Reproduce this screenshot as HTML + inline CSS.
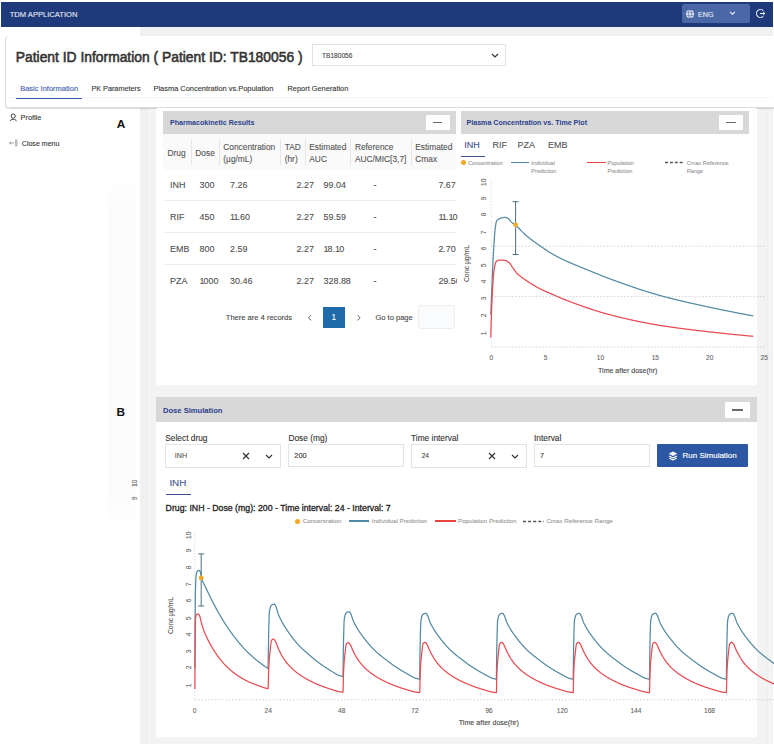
<!DOCTYPE html><html><head><meta charset="utf-8"><style>
html,body{margin:0;padding:0;width:774px;height:745px;overflow:hidden;background:#fff;font-family:"Liberation Sans",sans-serif;position:relative}
</style></head><body>
<div style="position:absolute;left:139.8px;top:27px;width:633.0px;height:716.5px;background:#f1f1f1"></div>
<div style="position:absolute;left:145.8px;top:36px;width:0.8999999999999773px;height:707.5px;background:#ebebeb"></div>
<div style="position:absolute;left:146.7px;top:36px;width:626.0999999999999px;height:707.5px;background:#f3f3f3"></div>
<div style="position:absolute;left:766.5px;top:108px;width:1.7999999999999545px;height:635.5px;background:#efefef"></div>
<div style="position:absolute;left:108px;top:178px;width:28px;height:354px;background:linear-gradient(180deg,rgba(0,0,0,0) 0%,rgba(0,0,0,0.014) 8%,rgba(0,0,0,0.014) 90%,rgba(0,0,0,0) 100%)"></div>
<div style="position:absolute;left:1px;top:2px;width:771.6px;height:25px;background:#1f3a7a"></div>
<div style="position:absolute;left:9.70px;top:11.18px;font-size:7.6px;line-height:7.6px;color:#e8ecf5;font-weight:400;white-space:nowrap;;-webkit-text-stroke:0.1px #e8ecf5">TDM APPLICATION</div>
<div style="position:absolute;left:682px;top:4.2px;width:68px;height:18.8px;background:#4a68a6;border-radius:2.5px"></div>
<svg style="position:absolute;left:684.8px;top:8.8px" width="10" height="10" viewBox="0 0 10 10"><circle cx="5" cy="5" r="4.1" fill="#e4e9f3"/><ellipse cx="5" cy="5" rx="1.7" ry="4" fill="none" stroke="#5d79b0" stroke-width="0.7"/><line x1="1" y1="3.6" x2="9" y2="3.6" stroke="#5d79b0" stroke-width="0.6"/><line x1="1" y1="6.4" x2="9" y2="6.4" stroke="#5d79b0" stroke-width="0.6"/></svg>
<div style="position:absolute;left:698.00px;top:11.38px;font-size:7.2px;line-height:7.2px;color:#e8ecf5;font-weight:400;white-space:nowrap;;-webkit-text-stroke:0.1px #e8ecf5">ENG</div>
<svg style="position:absolute;left:728.5px;top:11px" width="7" height="4" viewBox="0 0 7 4"><polyline points="1,0.8 3.5,3.2 6,0.8" fill="none" stroke="#e8ecf5" stroke-width="1.1"/></svg>
<svg style="position:absolute;left:755.2px;top:7.8px" width="11" height="11" viewBox="0 0 11 11"><path d="M8.3,2.6 A4,4 0 1 0 8.3,8.4" fill="none" stroke="#e8ecf5" stroke-width="1.1"/><line x1="5" y1="5.5" x2="9.8" y2="5.5" stroke="#e8ecf5" stroke-width="1.1"/><polyline points="8,3.8 9.8,5.5 8,7.2" fill="none" stroke="#e8ecf5" stroke-width="1"/></svg>
<div style="position:absolute;left:6px;top:35.5px;width:768px;height:72.3px;background:#fff;border-radius:4px 0 0 4px;box-shadow:-0.5px 0.3px 1px rgba(0,0,0,0.15)"></div>
<div style="position:absolute;left:9px;top:106.9px;width:765px;height:0.8999999999999915px;background:#dcdcdc"></div>
<div style="position:absolute;left:15.80px;top:50.55px;font-size:13.85px;line-height:13.85px;color:#333;font-weight:400;white-space:nowrap;-webkit-text-stroke:0.55px #333">Patient ID Information ( Patient ID: TB180056 )</div>
<div style="position:absolute;left:312px;top:44px;width:194px;height:22px;border:1px solid #e3e3e3;background:#fff;box-sizing:border-box"></div>
<div style="position:absolute;left:322.00px;top:52.68px;font-size:6.6px;line-height:6.6px;color:#444;font-weight:400;white-space:nowrap;;-webkit-text-stroke:0.1px #444">TB180056</div>
<svg style="position:absolute;left:491px;top:53px" width="8" height="5" viewBox="0 0 8 5"><polyline points="1,1 4,4 7,1" fill="none" stroke="#333" stroke-width="1.2"/></svg>
<div style="position:absolute;left:6px;top:97.4px;width:766.6px;height:0.7999999999999972px;background:#f6f6f6"></div>
<div style="position:absolute;left:20.20px;top:85.23px;font-size:7.5px;line-height:7.5px;color:#3d5ba8;font-weight:400;white-space:nowrap;;-webkit-text-stroke:0.1px #3d5ba8">Basic Information</div>
<div style="position:absolute;left:91.40px;top:85.36px;font-size:7.25px;line-height:7.25px;color:#333;font-weight:400;white-space:nowrap;;-webkit-text-stroke:0.1px #333">PK Parameters</div>
<div style="position:absolute;left:153.50px;top:85.26px;font-size:7.45px;line-height:7.45px;color:#333;font-weight:400;white-space:nowrap;;-webkit-text-stroke:0.1px #333">Plasma Concentration vs.Population</div>
<div style="position:absolute;left:287.50px;top:85.28px;font-size:7.4px;line-height:7.4px;color:#333;font-weight:400;white-space:nowrap;;-webkit-text-stroke:0.1px #333">Report Generation</div>
<div style="position:absolute;left:16px;top:97.5px;width:66px;height:1.5px;background:#3d5ba8"></div>
<svg style="position:absolute;left:9px;top:113px" width="9" height="9" viewBox="0 0 9 9"><circle cx="4.2" cy="3.1" r="2.1" fill="none" stroke="#3a3a3a" stroke-width="1"/><path d="M1.1,7.9 C1.4,5.6 7.0,5.6 7.3,7.9" fill="none" stroke="#3a3a3a" stroke-width="1" stroke-linecap="round"/></svg>
<div style="position:absolute;left:20.60px;top:114.33px;font-size:7.3px;line-height:7.3px;color:#333;font-weight:400;white-space:nowrap;;-webkit-text-stroke:0.1px #333">Profile</div>
<svg style="position:absolute;left:9px;top:139px" width="10" height="8" viewBox="0 0 10 8"><line x1="0.5" y1="4" x2="5" y2="4" stroke="#888" stroke-width="0.8"/><polyline points="2,2.5 0.5,4 2,5.5" fill="none" stroke="#888" stroke-width="0.8"/><rect x="6" y="0.5" width="2.5" height="7" fill="#bbb"/></svg>
<div style="position:absolute;left:21.80px;top:140.45px;font-size:7.05px;line-height:7.05px;color:#333;font-weight:400;white-space:nowrap;;-webkit-text-stroke:0.1px #333">Close menu</div>
<div style="position:absolute;left:116.80px;top:118.58px;font-size:11.8px;line-height:11.8px;color:#111;font-weight:700;white-space:nowrap;">A</div>
<div style="position:absolute;left:116.50px;top:406.58px;font-size:11.8px;line-height:11.8px;color:#111;font-weight:700;white-space:nowrap;">B</div>
<div style="position:absolute;left:135.40px;top:479.80px;font-size:6.4px;line-height:6.4px;color:#666;font-weight:400;white-space:nowrap;transform:translate(-50%,0) rotate(-90deg);-webkit-text-stroke:0.1px #666">10</div>
<div style="position:absolute;left:135.40px;top:495.00px;font-size:6.4px;line-height:6.4px;color:#666;font-weight:400;white-space:nowrap;transform:translate(-50%,0) rotate(-90deg);-webkit-text-stroke:0.1px #666">9</div>
<div style="position:absolute;left:155.8px;top:108px;width:601.2px;height:277px;background:#fff;border-radius:2px"></div>
<div style="position:absolute;left:163px;top:111px;width:293px;height:23px;background:#d8d8d8"></div>
<div style="position:absolute;left:170.00px;top:119.93px;font-size:7.1px;line-height:7.1px;color:#2b3f8c;font-weight:700;white-space:nowrap;">Pharmacokinetic Results</div>
<div style="position:absolute;left:426.4px;top:114.8px;width:23.600000000000023px;height:15.200000000000003px;background:#fff;border-radius:1px"></div>
<div style="position:absolute;left:433px;top:121.9px;width:8.5px;height:1.0999999999999943px;background:#6a6a6a"></div>
<div style="position:absolute;left:163px;top:134px;width:293px;height:35.5px;background:#fafafa"></div>
<div style="position:absolute;left:190.7px;top:139px;width:0.8000000000000114px;height:26px;background:#e6e6e6"></div>
<div style="position:absolute;left:218.6px;top:139px;width:0.8000000000000114px;height:26px;background:#e6e6e6"></div>
<div style="position:absolute;left:280px;top:139px;width:0.8000000000000114px;height:26px;background:#e6e6e6"></div>
<div style="position:absolute;left:304.7px;top:139px;width:0.8000000000000114px;height:26px;background:#e6e6e6"></div>
<div style="position:absolute;left:350.2px;top:139px;width:0.8000000000000114px;height:26px;background:#e6e6e6"></div>
<div style="position:absolute;left:410.7px;top:139px;width:0.8000000000000114px;height:26px;background:#e6e6e6"></div>
<div style="position:absolute;left:167.50px;top:149.30px;font-size:8.35px;line-height:8.35px;color:#555;font-weight:400;white-space:nowrap;;-webkit-text-stroke:0.1px #555">Drug</div>
<div style="position:absolute;left:195.30px;top:149.30px;font-size:8.35px;line-height:8.35px;color:#555;font-weight:400;white-space:nowrap;;-webkit-text-stroke:0.1px #555">Dose</div>
<div style="position:absolute;left:223.30px;top:143.30px;font-size:8.35px;line-height:8.35px;color:#555;font-weight:400;white-space:nowrap;;-webkit-text-stroke:0.1px #555">Concentration</div>
<div style="position:absolute;left:223.30px;top:155.30px;font-size:8.35px;line-height:8.35px;color:#555;font-weight:400;white-space:nowrap;;-webkit-text-stroke:0.1px #555">(µg/mL)</div>
<div style="position:absolute;left:284.70px;top:143.30px;font-size:8.35px;line-height:8.35px;color:#555;font-weight:400;white-space:nowrap;;-webkit-text-stroke:0.1px #555">TAD</div>
<div style="position:absolute;left:284.70px;top:155.30px;font-size:8.35px;line-height:8.35px;color:#555;font-weight:400;white-space:nowrap;;-webkit-text-stroke:0.1px #555">(hr)</div>
<div style="position:absolute;left:309.30px;top:143.30px;font-size:8.35px;line-height:8.35px;color:#555;font-weight:400;white-space:nowrap;;-webkit-text-stroke:0.1px #555">Estimated</div>
<div style="position:absolute;left:309.30px;top:155.30px;font-size:8.35px;line-height:8.35px;color:#555;font-weight:400;white-space:nowrap;;-webkit-text-stroke:0.1px #555">AUC</div>
<div style="position:absolute;left:354.90px;top:143.30px;font-size:8.35px;line-height:8.35px;color:#555;font-weight:400;white-space:nowrap;;-webkit-text-stroke:0.1px #555">Reference</div>
<div style="position:absolute;left:354.90px;top:155.30px;font-size:8.35px;line-height:8.35px;color:#555;font-weight:400;white-space:nowrap;;-webkit-text-stroke:0.1px #555">AUC/MIC[3,7]</div>
<div style="position:absolute;left:415.30px;top:143.30px;font-size:8.35px;line-height:8.35px;color:#555;font-weight:400;white-space:nowrap;;-webkit-text-stroke:0.1px #555">Estimated</div>
<div style="position:absolute;left:415.30px;top:155.30px;font-size:8.35px;line-height:8.35px;color:#555;font-weight:400;white-space:nowrap;;-webkit-text-stroke:0.1px #555">Cmax</div>
<div style="position:absolute;left:170.00px;top:181.00px;font-size:8.95px;line-height:8.95px;color:#505050;font-weight:400;white-space:nowrap;;-webkit-text-stroke:0.1px #505050">INH</div>
<div style="position:absolute;left:199.50px;top:181.00px;font-size:8.95px;line-height:8.95px;color:#505050;font-weight:400;white-space:nowrap;;-webkit-text-stroke:0.1px #505050">300</div>
<div style="position:absolute;left:230.00px;top:181.00px;font-size:8.95px;line-height:8.95px;color:#505050;font-weight:400;white-space:nowrap;;-webkit-text-stroke:0.1px #505050">7.26</div>
<div style="position:absolute;left:296.60px;top:181.00px;font-size:8.95px;line-height:8.95px;color:#505050;font-weight:400;white-space:nowrap;;-webkit-text-stroke:0.1px #505050">2.27</div>
<div style="position:absolute;left:323.50px;top:181.00px;font-size:8.95px;line-height:8.95px;color:#505050;font-weight:400;white-space:nowrap;;-webkit-text-stroke:0.1px #505050">99.04</div>
<div style="position:absolute;left:373.40px;top:181.00px;font-size:8.95px;line-height:8.95px;color:#505050;font-weight:400;white-space:nowrap;;-webkit-text-stroke:0.1px #505050">-</div>
<div style="position:absolute;left:438.40px;top:181.00px;font-size:8.95px;line-height:8.95px;color:#505050;font-weight:400;white-space:nowrap;;-webkit-text-stroke:0.1px #505050">7.67</div>
<div style="position:absolute;left:170.00px;top:213.00px;font-size:8.95px;line-height:8.95px;color:#505050;font-weight:400;white-space:nowrap;;-webkit-text-stroke:0.1px #505050">RIF</div>
<div style="position:absolute;left:199.50px;top:213.00px;font-size:8.95px;line-height:8.95px;color:#505050;font-weight:400;white-space:nowrap;;-webkit-text-stroke:0.1px #505050">450</div>
<div style="position:absolute;left:230.00px;top:213.00px;font-size:8.95px;line-height:8.95px;color:#505050;font-weight:400;white-space:nowrap;;-webkit-text-stroke:0.1px #505050"><span style="letter-spacing:-0.9px">1</span><span style="letter-spacing:-0.9px">1</span>.60</div>
<div style="position:absolute;left:296.60px;top:213.00px;font-size:8.95px;line-height:8.95px;color:#505050;font-weight:400;white-space:nowrap;;-webkit-text-stroke:0.1px #505050">2.27</div>
<div style="position:absolute;left:323.50px;top:213.00px;font-size:8.95px;line-height:8.95px;color:#505050;font-weight:400;white-space:nowrap;;-webkit-text-stroke:0.1px #505050">59.59</div>
<div style="position:absolute;left:373.40px;top:213.00px;font-size:8.95px;line-height:8.95px;color:#505050;font-weight:400;white-space:nowrap;;-webkit-text-stroke:0.1px #505050">-</div>
<div style="position:absolute;left:438.40px;top:213.00px;font-size:8.95px;line-height:8.95px;color:#505050;font-weight:400;white-space:nowrap;;-webkit-text-stroke:0.1px #505050"><span style="letter-spacing:-0.9px">1</span><span style="letter-spacing:-0.9px">1</span>.<span style="letter-spacing:-0.9px">1</span>0</div>
<div style="position:absolute;left:170.00px;top:245.00px;font-size:8.95px;line-height:8.95px;color:#505050;font-weight:400;white-space:nowrap;;-webkit-text-stroke:0.1px #505050">EMB</div>
<div style="position:absolute;left:199.50px;top:245.00px;font-size:8.95px;line-height:8.95px;color:#505050;font-weight:400;white-space:nowrap;;-webkit-text-stroke:0.1px #505050">800</div>
<div style="position:absolute;left:230.00px;top:245.00px;font-size:8.95px;line-height:8.95px;color:#505050;font-weight:400;white-space:nowrap;;-webkit-text-stroke:0.1px #505050">2.59</div>
<div style="position:absolute;left:296.60px;top:245.00px;font-size:8.95px;line-height:8.95px;color:#505050;font-weight:400;white-space:nowrap;;-webkit-text-stroke:0.1px #505050">2.27</div>
<div style="position:absolute;left:323.50px;top:245.00px;font-size:8.95px;line-height:8.95px;color:#505050;font-weight:400;white-space:nowrap;;-webkit-text-stroke:0.1px #505050"><span style="letter-spacing:-0.9px">1</span>8.<span style="letter-spacing:-0.9px">1</span>0</div>
<div style="position:absolute;left:373.40px;top:245.00px;font-size:8.95px;line-height:8.95px;color:#505050;font-weight:400;white-space:nowrap;;-webkit-text-stroke:0.1px #505050">-</div>
<div style="position:absolute;left:438.40px;top:245.00px;font-size:8.95px;line-height:8.95px;color:#505050;font-weight:400;white-space:nowrap;;-webkit-text-stroke:0.1px #505050">2.70</div>
<div style="position:absolute;left:170.00px;top:277.00px;font-size:8.95px;line-height:8.95px;color:#505050;font-weight:400;white-space:nowrap;;-webkit-text-stroke:0.1px #505050">PZA</div>
<div style="position:absolute;left:199.50px;top:277.00px;font-size:8.95px;line-height:8.95px;color:#505050;font-weight:400;white-space:nowrap;;-webkit-text-stroke:0.1px #505050"><span style="letter-spacing:-0.9px">1</span>000</div>
<div style="position:absolute;left:230.00px;top:277.00px;font-size:8.95px;line-height:8.95px;color:#505050;font-weight:400;white-space:nowrap;;-webkit-text-stroke:0.1px #505050">30.46</div>
<div style="position:absolute;left:296.60px;top:277.00px;font-size:8.95px;line-height:8.95px;color:#505050;font-weight:400;white-space:nowrap;;-webkit-text-stroke:0.1px #505050">2.27</div>
<div style="position:absolute;left:323.50px;top:277.00px;font-size:8.95px;line-height:8.95px;color:#505050;font-weight:400;white-space:nowrap;;-webkit-text-stroke:0.1px #505050">328.88</div>
<div style="position:absolute;left:373.40px;top:277.00px;font-size:8.95px;line-height:8.95px;color:#505050;font-weight:400;white-space:nowrap;;-webkit-text-stroke:0.1px #505050">-</div>
<div style="position:absolute;left:438.40px;top:277.00px;font-size:8.95px;line-height:8.95px;color:#505050;font-weight:400;white-space:nowrap;width:18.3px;overflow:hidden;;-webkit-text-stroke:0.1px #505050">29.50</div>
<div style="position:absolute;left:165px;top:199.6px;width:291px;height:0.8000000000000114px;background:#ebebeb"></div>
<div style="position:absolute;left:165px;top:232px;width:291px;height:0.8000000000000114px;background:#ebebeb"></div>
<div style="position:absolute;left:165px;top:263.6px;width:291px;height:0.8000000000000114px;background:#ebebeb"></div>
<div style="position:absolute;left:225.80px;top:314.21px;font-size:7.55px;line-height:7.55px;color:#444;font-weight:400;white-space:nowrap;;-webkit-text-stroke:0.1px #444">There are 4 records</div>
<svg style="position:absolute;left:307px;top:313.5px" width="6" height="8" viewBox="0 0 6 8"><polyline points="4,1.2 1.6,3.8 4,6.4" fill="none" stroke="#555" stroke-width="0.95"/></svg>
<div style="position:absolute;left:323px;top:307px;width:21.600000000000023px;height:21px;background:#1f6aa8"></div>
<div style="position:absolute;left:333.80px;transform:translateX(-50%);top:313.88px;font-size:8.2px;line-height:8.2px;color:#fff;font-weight:400;white-space:nowrap;;-webkit-text-stroke:0.1px #fff">1</div>
<svg style="position:absolute;left:355.5px;top:313.5px" width="6" height="8" viewBox="0 0 6 8"><polyline points="1.6,1.2 4,3.8 1.6,6.4" fill="none" stroke="#555" stroke-width="0.95"/></svg>
<div style="position:absolute;left:375.40px;top:314.21px;font-size:7.55px;line-height:7.55px;color:#444;font-weight:400;white-space:nowrap;;-webkit-text-stroke:0.1px #444">Go to page</div>
<div style="position:absolute;left:417.8px;top:305.3px;width:37.19999999999999px;height:23.69999999999999px;background:#fafbfc;border:1px solid #eeeeee;box-sizing:border-box;border-radius:3px"></div>
<div style="position:absolute;left:461px;top:111px;width:288px;height:23px;background:#d8d8d8"></div>
<div style="position:absolute;left:466.50px;top:119.93px;font-size:7.1px;line-height:7.1px;color:#2b3f8c;font-weight:700;white-space:nowrap;">Plasma Concentration vs. Time Plot</div>
<div style="position:absolute;left:719px;top:114.9px;width:24px;height:15.099999999999994px;background:#fff;border-radius:1px"></div>
<div style="position:absolute;left:726px;top:121.9px;width:10px;height:1.0999999999999943px;background:#6a6a6a"></div>
<div style="position:absolute;left:464.20px;top:140.98px;font-size:9px;line-height:9px;color:#3d4f8f;font-weight:400;white-space:nowrap;;-webkit-text-stroke:0.1px #3d4f8f">INH</div>
<div style="position:absolute;left:492.40px;top:140.98px;font-size:9px;line-height:9px;color:#555;font-weight:400;white-space:nowrap;;-webkit-text-stroke:0.1px #555">RIF</div>
<div style="position:absolute;left:517.60px;top:140.98px;font-size:9px;line-height:9px;color:#555;font-weight:400;white-space:nowrap;;-webkit-text-stroke:0.1px #555">PZA</div>
<div style="position:absolute;left:548.00px;top:140.98px;font-size:9px;line-height:9px;color:#555;font-weight:400;white-space:nowrap;;-webkit-text-stroke:0.1px #555">EMB</div>
<div style="position:absolute;left:461px;top:155.8px;width:23.5px;height:1.3999999999999773px;background:#3d4f8f"></div>
<div style="position:absolute;left:461px;top:160px;width:5px;height:5px;border-radius:50%;background:#f5a623"></div>
<div style="position:absolute;left:468.00px;top:160.68px;font-size:5.6px;line-height:5.6px;color:#999;font-weight:400;white-space:nowrap;;-webkit-text-stroke:0.1px #999">Concentration</div>
<div style="position:absolute;left:510.6px;top:161.8px;width:18.600000000000023px;height:1.5999999999999943px;background:#4f8aa6"></div>
<div style="position:absolute;left:531.30px;top:160.68px;font-size:5.6px;line-height:5.6px;color:#999;font-weight:400;white-space:nowrap;;-webkit-text-stroke:0.1px #999">Individual</div>
<div style="position:absolute;left:531.30px;top:168.68px;font-size:5.6px;line-height:5.6px;color:#999;font-weight:400;white-space:nowrap;;-webkit-text-stroke:0.1px #999">Prediction</div>
<div style="position:absolute;left:587px;top:161.8px;width:18.5px;height:1.5999999999999943px;background:#e84343"></div>
<div style="position:absolute;left:607.50px;top:160.68px;font-size:5.6px;line-height:5.6px;color:#999;font-weight:400;white-space:nowrap;;-webkit-text-stroke:0.1px #999">Population</div>
<div style="position:absolute;left:607.50px;top:168.68px;font-size:5.6px;line-height:5.6px;color:#999;font-weight:400;white-space:nowrap;;-webkit-text-stroke:0.1px #999">Prediction</div>
<svg style="position:absolute;left:665px;top:161px" width="19" height="3"><line x1="0" y1="1.5" x2="19" y2="1.5" stroke="#555" stroke-width="1.6" stroke-dasharray="3,1.9"/></svg>
<div style="position:absolute;left:686.70px;top:160.68px;font-size:5.6px;line-height:5.6px;color:#999;font-weight:400;white-space:nowrap;;-webkit-text-stroke:0.1px #999">Cmax Reference</div>
<div style="position:absolute;left:686.70px;top:168.68px;font-size:5.6px;line-height:5.6px;color:#999;font-weight:400;white-space:nowrap;;-webkit-text-stroke:0.1px #999">Range</div>
<svg style="position:absolute;left:0;top:0" width="774" height="745"><line x1="491.3" y1="180" x2="491.3" y2="347" stroke="#ddd" stroke-width="0.8" stroke-dasharray="1.5,1.5"/><line x1="491.3" y1="246.2" x2="765" y2="246.2" stroke="#cfcfcf" stroke-width="0.9" stroke-dasharray="1.6,1.8"/><line x1="491.3" y1="296.6" x2="765" y2="296.6" stroke="#cfcfcf" stroke-width="0.9" stroke-dasharray="1.6,1.8"/><line x1="491.3" y1="347" x2="765" y2="347" stroke="#cfcfcf" stroke-width="0.9" stroke-dasharray="1.6,1.8"/><path d="M490.80,314.70 L491.10,306.86 L491.40,299.30 L491.65,293.13 L491.90,286.90 L492.15,280.70 L492.40,274.63 L492.65,268.79 L492.90,263.30 L493.15,258.23 L493.40,253.70 L493.65,249.49 L493.90,245.36 L494.15,241.40 L494.40,237.68 L494.65,234.28 L494.90,231.29 L495.15,228.76 L495.40,226.80 L495.66,225.13 L495.92,223.62 L496.18,222.34 L496.44,221.38 L496.70,220.80 L496.97,220.45 L497.24,220.15 L497.51,219.88 L497.78,219.66 L498.05,219.47 L498.32,219.30 L498.59,219.16 L498.86,219.03 L499.13,218.91 L499.40,218.80 L499.66,218.70 L499.91,218.59 L500.17,218.49 L500.43,218.39 L500.69,218.30 L500.94,218.20 L501.20,218.11 L501.46,218.03 L501.71,217.94 L501.97,217.86 L502.23,217.79 L502.49,217.72 L502.74,217.66 L503.00,217.60 L503.26,217.55 L503.51,217.51 L503.77,217.47 L504.03,217.44 L504.29,217.42 L504.54,217.40 L504.80,217.40 L505.07,217.41 L505.34,217.44 L505.61,217.48 L505.88,217.54 L506.15,217.62 L506.42,217.70 L506.69,217.79 L506.96,217.89 L507.23,217.99 L507.50,218.10 L507.75,218.22 L508.00,218.38 L508.25,218.56 L508.50,218.78 L508.75,219.02 L509.00,219.29 L509.25,219.57 L509.50,219.86 L509.75,220.15 L510.00,220.46 L510.25,220.76 L510.50,221.05 L510.75,221.34 L511.00,221.61 L511.25,221.87 L511.50,222.10 L511.75,222.32 L512.01,222.53 L512.26,222.74 L512.51,222.94 L512.76,223.14 L513.02,223.34 L513.27,223.53 L513.52,223.72 L513.78,223.91 L514.03,224.10 L514.28,224.29 L514.54,224.48 L514.79,224.68 L515.04,224.88 L515.29,225.08 L515.55,225.29 L515.80,225.50 L516.05,225.72 L516.30,225.94 L516.55,226.16 L516.80,226.39 L517.05,226.62 L517.30,226.85 L517.55,227.08 L517.80,227.32 L518.05,227.56 L518.30,227.80 L518.55,228.05 L518.80,228.30 L519.05,228.54 L519.30,228.79 L519.55,229.04 L519.80,229.30 L520.05,229.55 L520.30,229.80 L520.55,230.06 L520.80,230.31 L521.05,230.57 L521.30,230.82 L521.55,231.07 L521.80,231.33 L522.05,231.58 L522.30,231.83 L522.55,232.08 L522.80,232.33 L523.05,232.58 L523.30,232.83 L523.55,233.07 L523.80,233.32 L524.05,233.56 L524.30,233.80 L524.55,234.03 L524.80,234.27 L525.05,234.50 L525.30,234.72 L525.55,234.95 L525.80,235.17 L526.05,235.39 L526.30,235.60 L526.55,235.81 L526.81,236.02 L527.06,236.23 L527.31,236.44 L527.56,236.65 L527.82,236.86 L528.07,237.06 L528.32,237.27 L528.58,237.47 L528.83,237.67 L529.08,237.87 L529.33,238.07 L529.59,238.27 L529.84,238.46 L530.09,238.66 L530.35,238.85 L530.60,239.05 L530.85,239.24 L531.10,239.43 L531.36,239.62 L531.61,239.81 L531.86,240.00 L532.12,240.19 L532.37,240.38 L532.62,240.57 L532.87,240.75 L533.13,240.94 L533.38,241.12 L533.63,241.31 L533.88,241.49 L534.14,241.67 L534.39,241.86 L534.64,242.04 L534.90,242.22 L535.15,242.40 L535.40,242.58 L535.65,242.76 L535.91,242.94 L536.16,243.12 L536.41,243.30 L536.67,243.47 L536.92,243.65 L537.17,243.83 L537.42,244.01 L537.68,244.19 L537.93,244.36 L538.18,244.54 L538.44,244.72 L538.69,244.89 L538.94,245.07 L539.19,245.25 L539.45,245.42 L539.70,245.60 L539.95,245.78 L540.21,245.95 L540.46,246.13 L540.71,246.31 L540.96,246.48 L541.22,246.66 L541.47,246.84 L541.72,247.01 L541.98,247.19 L542.23,247.36 L542.48,247.54 L542.73,247.72 L542.99,247.89 L543.24,248.07 L543.49,248.24 L543.75,248.42 L544.00,248.59 L544.25,248.76 L544.50,248.94 L544.76,249.11 L545.01,249.28 L545.26,249.45 L545.52,249.62 L545.77,249.79 L546.02,249.97 L546.27,250.13 L546.53,250.30 L546.78,250.47 L547.03,250.64 L547.28,250.81 L547.54,250.97 L547.79,251.14 L548.04,251.30 L548.30,251.47 L548.55,251.63 L548.80,251.79 L549.05,251.95 L549.31,252.12 L549.56,252.27 L549.81,252.43 L550.07,252.59 L550.32,252.75 L550.57,252.90 L550.82,253.06 L551.08,253.21 L551.33,253.36 L551.58,253.52 L551.84,253.67 L552.09,253.82 L552.34,253.96 L552.59,254.11 L552.85,254.26 L553.10,254.40 L553.35,254.54 L553.61,254.69 L553.86,254.83 L554.11,254.97 L554.36,255.11 L554.62,255.25 L554.87,255.38 L555.12,255.52 L555.38,255.66 L555.63,255.79 L555.88,255.93 L556.13,256.06 L556.39,256.19 L556.64,256.33 L556.89,256.46 L557.15,256.59 L557.40,256.72 L557.65,256.85 L557.90,256.98 L558.16,257.11 L558.41,257.24 L558.66,257.37 L558.92,257.49 L559.17,257.62 L559.42,257.74 L559.67,257.87 L559.93,257.99 L560.18,258.12 L560.43,258.24 L560.68,258.37 L560.94,258.49 L561.19,258.61 L561.44,258.73 L561.70,258.85 L561.95,258.97 L562.20,259.10 L562.45,259.22 L562.71,259.34 L562.96,259.45 L563.21,259.57 L563.47,259.69 L563.72,259.81 L563.97,259.93 L564.22,260.05 L564.48,260.17 L564.73,260.28 L564.98,260.40 L565.24,260.52 L565.49,260.63 L565.74,260.75 L565.99,260.87 L566.25,260.98 L566.50,261.10 L566.75,261.21 L567.00,261.33 L567.25,261.44 L567.50,261.56 L567.75,261.67 L568.00,261.78 L568.25,261.89 L568.50,262.01 L568.75,262.12 L569.00,262.23 L569.25,262.34 L569.50,262.45 L569.75,262.56 L570.00,262.67 L570.25,262.78 L570.50,262.89 L570.75,263.00 L571.00,263.10 L571.25,263.21 L571.50,263.32 L571.75,263.43 L572.00,263.53 L572.25,263.64 L572.50,263.75 L572.75,263.86 L573.00,263.96 L573.25,264.07 L573.50,264.17 L573.75,264.28 L574.00,264.38 L574.25,264.49 L574.50,264.59 L574.75,264.70 L575.00,264.80 L575.25,264.91 L575.50,265.01 L575.75,265.11 L576.00,265.22 L576.25,265.32 L576.50,265.42 L576.75,265.53 L577.00,265.63 L577.25,265.73 L577.50,265.84 L577.75,265.94 L578.00,266.04 L578.25,266.14 L578.50,266.25 L578.75,266.35 L579.00,266.45 L579.25,266.55 L579.50,266.65 L579.75,266.76 L580.00,266.86 L580.25,266.96 L580.50,267.06 L580.75,267.16 L581.00,267.26 L581.25,267.37 L581.50,267.47 L581.75,267.57 L582.00,267.67 L582.25,267.77 L582.50,267.87 L582.75,267.98 L583.00,268.08 L583.25,268.18 L583.50,268.28 L583.75,268.38 L584.00,268.48 L584.25,268.59 L584.50,268.69 L584.75,268.79 L585.00,268.89 L585.25,268.99 L585.50,269.10 L585.75,269.20 L586.00,269.30 L586.25,269.40 L586.50,269.51 L586.75,269.61 L587.00,269.71 L587.26,269.81 L587.51,269.92 L587.76,270.02 L588.01,270.12 L588.26,270.23 L588.51,270.33 L588.76,270.43 L589.01,270.54 L589.26,270.64 L589.51,270.74 L589.77,270.85 L590.02,270.95 L590.27,271.05 L590.52,271.16 L590.77,271.26 L591.02,271.36 L591.27,271.46 L591.52,271.57 L591.77,271.67 L592.02,271.77 L592.28,271.88 L592.53,271.98 L592.78,272.08 L593.03,272.19 L593.28,272.29 L593.53,272.39 L593.78,272.49 L594.03,272.60 L594.28,272.70 L594.54,272.80 L594.79,272.90 L595.04,273.01 L595.29,273.11 L595.54,273.21 L595.79,273.31 L596.04,273.42 L596.29,273.52 L596.54,273.62 L596.79,273.72 L597.05,273.82 L597.30,273.93 L597.55,274.03 L597.80,274.13 L598.05,274.23 L598.30,274.33 L598.55,274.43 L598.80,274.53 L599.05,274.63 L599.31,274.73 L599.56,274.84 L599.81,274.94 L600.06,275.04 L600.31,275.14 L600.56,275.24 L600.81,275.34 L601.06,275.44 L601.31,275.54 L601.56,275.64 L601.82,275.73 L602.07,275.83 L602.32,275.93 L602.57,276.03 L602.82,276.13 L603.07,276.23 L603.32,276.33 L603.57,276.43 L603.82,276.52 L604.08,276.62 L604.33,276.72 L604.58,276.82 L604.83,276.91 L605.08,277.01 L605.33,277.11 L605.58,277.20 L605.83,277.30 L606.08,277.40 L606.33,277.49 L606.59,277.59 L606.84,277.68 L607.09,277.78 L607.34,277.87 L607.59,277.97 L607.84,278.06 L608.09,278.16 L608.34,278.25 L608.59,278.34 L608.84,278.44 L609.10,278.53 L609.35,278.62 L609.60,278.72 L609.85,278.81 L610.10,278.90 L610.35,278.99 L610.60,279.08 L610.85,279.18 L611.10,279.27 L611.35,279.36 L611.60,279.45 L611.86,279.54 L612.11,279.63 L612.36,279.73 L612.61,279.82 L612.86,279.91 L613.11,280.00 L613.36,280.09 L613.61,280.18 L613.86,280.27 L614.11,280.37 L614.36,280.46 L614.61,280.55 L614.86,280.64 L615.12,280.73 L615.37,280.82 L615.62,280.91 L615.87,281.00 L616.12,281.09 L616.37,281.19 L616.62,281.28 L616.87,281.37 L617.12,281.46 L617.37,281.55 L617.62,281.64 L617.87,281.73 L618.12,281.82 L618.37,281.91 L618.63,282.00 L618.88,282.09 L619.13,282.18 L619.38,282.27 L619.63,282.36 L619.88,282.45 L620.13,282.54 L620.38,282.63 L620.63,282.72 L620.88,282.81 L621.13,282.90 L621.38,282.99 L621.63,283.08 L621.89,283.17 L622.14,283.26 L622.39,283.35 L622.64,283.44 L622.89,283.53 L623.14,283.62 L623.39,283.71 L623.64,283.80 L623.89,283.89 L624.14,283.98 L624.39,284.06 L624.64,284.15 L624.89,284.24 L625.15,284.33 L625.40,284.42 L625.65,284.51 L625.90,284.60 L626.15,284.68 L626.40,284.77 L626.65,284.86 L626.90,284.95 L627.15,285.04 L627.40,285.13 L627.65,285.21 L627.90,285.30 L628.15,285.39 L628.41,285.48 L628.66,285.56 L628.91,285.65 L629.16,285.74 L629.41,285.83 L629.66,285.91 L629.91,286.00 L630.16,286.09 L630.41,286.17 L630.66,286.26 L630.91,286.35 L631.16,286.43 L631.41,286.52 L631.66,286.61 L631.92,286.69 L632.17,286.78 L632.42,286.86 L632.67,286.95 L632.92,287.04 L633.17,287.12 L633.42,287.21 L633.67,287.29 L633.92,287.38 L634.17,287.46 L634.42,287.55 L634.67,287.63 L634.92,287.72 L635.18,287.80 L635.43,287.89 L635.68,287.97 L635.93,288.06 L636.18,288.14 L636.43,288.23 L636.68,288.31 L636.93,288.39 L637.18,288.48 L637.43,288.56 L637.68,288.65 L637.93,288.73 L638.18,288.81 L638.44,288.90 L638.69,288.98 L638.94,289.06 L639.19,289.14 L639.44,289.23 L639.69,289.31 L639.94,289.39 L640.19,289.47 L640.44,289.56 L640.69,289.64 L640.94,289.72 L641.19,289.80 L641.44,289.88 L641.69,289.97 L641.95,290.05 L642.20,290.13 L642.45,290.21 L642.70,290.29 L642.95,290.37 L643.20,290.45 L643.45,290.53 L643.70,290.61 L643.95,290.69 L644.20,290.77 L644.45,290.85 L644.70,290.93 L644.95,291.01 L645.21,291.09 L645.46,291.17 L645.71,291.25 L645.96,291.33 L646.21,291.41 L646.46,291.49 L646.71,291.57 L646.96,291.65 L647.21,291.73 L647.46,291.80 L647.71,291.88 L647.96,291.96 L648.21,292.04 L648.47,292.12 L648.72,292.19 L648.97,292.27 L649.22,292.35 L649.47,292.42 L649.72,292.50 L649.97,292.58 L650.22,292.65 L650.47,292.73 L650.72,292.81 L650.97,292.88 L651.22,292.96 L651.47,293.03 L651.73,293.11 L651.98,293.18 L652.23,293.26 L652.48,293.34 L652.73,293.41 L652.98,293.48 L653.23,293.56 L653.48,293.63 L653.73,293.71 L653.98,293.78 L654.23,293.85 L654.48,293.93 L654.73,294.00 L654.98,294.08 L655.24,294.15 L655.49,294.22 L655.74,294.29 L655.99,294.37 L656.24,294.44 L656.49,294.51 L656.74,294.58 L656.99,294.65 L657.24,294.73 L657.49,294.80 L657.74,294.87 L657.99,294.94 L658.24,295.01 L658.50,295.08 L658.75,295.15 L659.00,295.22 L659.25,295.29 L659.50,295.36 L659.75,295.43 L660.00,295.50 L660.25,295.57 L660.50,295.64 L660.75,295.71 L661.00,295.78 L661.25,295.84 L661.50,295.91 L661.76,295.98 L662.01,296.05 L662.26,296.12 L662.51,296.19 L662.76,296.25 L663.01,296.32 L663.26,296.39 L663.51,296.46 L663.76,296.52 L664.01,296.59 L664.26,296.66 L664.51,296.72 L664.76,296.79 L665.02,296.86 L665.27,296.92 L665.52,296.99 L665.77,297.06 L666.02,297.12 L666.27,297.19 L666.52,297.25 L666.77,297.32 L667.02,297.39 L667.27,297.45 L667.52,297.52 L667.77,297.58 L668.02,297.65 L668.27,297.71 L668.53,297.78 L668.78,297.84 L669.03,297.91 L669.28,297.97 L669.53,298.03 L669.78,298.10 L670.03,298.16 L670.28,298.23 L670.53,298.29 L670.78,298.35 L671.03,298.42 L671.28,298.48 L671.53,298.54 L671.79,298.61 L672.04,298.67 L672.29,298.73 L672.54,298.80 L672.79,298.86 L673.04,298.92 L673.29,298.98 L673.54,299.05 L673.79,299.11 L674.04,299.17 L674.29,299.23 L674.54,299.29 L674.79,299.36 L675.05,299.42 L675.30,299.48 L675.55,299.54 L675.80,299.60 L676.05,299.66 L676.30,299.73 L676.55,299.79 L676.80,299.85 L677.05,299.91 L677.30,299.97 L677.55,300.03 L677.80,300.09 L678.05,300.15 L678.31,300.21 L678.56,300.27 L678.81,300.33 L679.06,300.39 L679.31,300.45 L679.56,300.51 L679.81,300.57 L680.06,300.63 L680.31,300.69 L680.56,300.75 L680.81,300.81 L681.06,300.87 L681.31,300.93 L681.56,300.99 L681.82,301.05 L682.07,301.11 L682.32,301.17 L682.57,301.23 L682.82,301.29 L683.07,301.34 L683.32,301.40 L683.57,301.46 L683.82,301.52 L684.07,301.58 L684.32,301.64 L684.57,301.69 L684.82,301.75 L685.08,301.81 L685.33,301.87 L685.58,301.93 L685.83,301.99 L686.08,302.04 L686.33,302.10 L686.58,302.16 L686.83,302.22 L687.08,302.27 L687.33,302.33 L687.58,302.39 L687.83,302.45 L688.08,302.50 L688.34,302.56 L688.59,302.62 L688.84,302.67 L689.09,302.73 L689.34,302.79 L689.59,302.84 L689.84,302.90 L690.09,302.96 L690.34,303.02 L690.59,303.07 L690.84,303.13 L691.09,303.18 L691.34,303.24 L691.59,303.30 L691.85,303.35 L692.10,303.41 L692.35,303.47 L692.60,303.52 L692.85,303.58 L693.10,303.63 L693.35,303.69 L693.60,303.75 L693.85,303.80 L694.10,303.86 L694.35,303.91 L694.60,303.97 L694.85,304.03 L695.11,304.08 L695.36,304.14 L695.61,304.19 L695.86,304.25 L696.11,304.30 L696.36,304.36 L696.61,304.41 L696.86,304.47 L697.11,304.52 L697.36,304.58 L697.61,304.63 L697.86,304.69 L698.11,304.74 L698.37,304.80 L698.62,304.85 L698.87,304.91 L699.12,304.96 L699.37,305.02 L699.62,305.07 L699.87,305.13 L700.12,305.18 L700.37,305.24 L700.62,305.29 L700.87,305.35 L701.12,305.40 L701.37,305.46 L701.63,305.51 L701.88,305.57 L702.13,305.62 L702.38,305.68 L702.63,305.73 L702.88,305.78 L703.13,305.84 L703.38,305.89 L703.63,305.95 L703.88,306.00 L704.13,306.06 L704.38,306.11 L704.63,306.16 L704.88,306.22 L705.14,306.27 L705.39,306.33 L705.64,306.38 L705.89,306.44 L706.14,306.49 L706.39,306.54 L706.64,306.60 L706.89,306.65 L707.14,306.71 L707.39,306.76 L707.64,306.81 L707.89,306.87 L708.14,306.92 L708.40,306.98 L708.65,307.03 L708.90,307.08 L709.15,307.14 L709.40,307.19 L709.65,307.25 L709.90,307.30 L710.15,307.35 L710.40,307.41 L710.65,307.46 L710.90,307.52 L711.15,307.57 L711.41,307.62 L711.66,307.68 L711.91,307.73 L712.16,307.78 L712.41,307.84 L712.66,307.89 L712.91,307.94 L713.16,308.00 L713.41,308.05 L713.66,308.10 L713.91,308.16 L714.16,308.21 L714.42,308.26 L714.67,308.32 L714.92,308.37 L715.17,308.42 L715.42,308.48 L715.67,308.53 L715.92,308.58 L716.17,308.63 L716.42,308.69 L716.67,308.74 L716.92,308.79 L717.18,308.85 L717.43,308.90 L717.68,308.95 L717.93,309.00 L718.18,309.06 L718.43,309.11 L718.68,309.16 L718.93,309.21 L719.18,309.26 L719.43,309.32 L719.68,309.37 L719.93,309.42 L720.19,309.47 L720.44,309.53 L720.69,309.58 L720.94,309.63 L721.19,309.68 L721.44,309.73 L721.69,309.78 L721.94,309.84 L722.19,309.89 L722.44,309.94 L722.69,309.99 L722.95,310.04 L723.20,310.09 L723.45,310.15 L723.70,310.20 L723.95,310.25 L724.20,310.30 L724.45,310.35 L724.70,310.40 L724.95,310.45 L725.20,310.50 L725.45,310.55 L725.70,310.61 L725.96,310.66 L726.21,310.71 L726.46,310.76 L726.71,310.81 L726.96,310.86 L727.21,310.91 L727.46,310.96 L727.71,311.01 L727.96,311.06 L728.21,311.11 L728.46,311.16 L728.72,311.21 L728.97,311.26 L729.22,311.31 L729.47,311.36 L729.72,311.41 L729.97,311.46 L730.22,311.51 L730.47,311.56 L730.72,311.61 L730.97,311.66 L731.22,311.71 L731.47,311.76 L731.73,311.81 L731.98,311.86 L732.23,311.91 L732.48,311.96 L732.73,312.01 L732.98,312.06 L733.23,312.11 L733.48,312.16 L733.73,312.21 L733.98,312.26 L734.23,312.31 L734.48,312.36 L734.74,312.41 L734.99,312.46 L735.24,312.51 L735.49,312.55 L735.74,312.60 L735.99,312.65 L736.24,312.70 L736.49,312.75 L736.74,312.80 L736.99,312.85 L737.24,312.90 L737.50,312.94 L737.75,312.99 L738.00,313.04 L738.25,313.09 L738.50,313.14 L738.75,313.19 L739.00,313.23 L739.25,313.28 L739.50,313.33 L739.75,313.38 L740.00,313.43 L740.25,313.48 L740.51,313.52 L740.76,313.57 L741.01,313.62 L741.26,313.67 L741.51,313.71 L741.76,313.76 L742.01,313.81 L742.26,313.86 L742.51,313.91 L742.76,313.95 L743.01,314.00 L743.27,314.05 L743.52,314.09 L743.77,314.14 L744.02,314.19 L744.27,314.24 L744.52,314.28 L744.77,314.33 L745.02,314.38 L745.27,314.42 L745.52,314.47 L745.77,314.52 L746.02,314.57 L746.28,314.61 L746.53,314.66 L746.78,314.71 L747.03,314.75 L747.28,314.80 L747.53,314.85 L747.78,314.89 L748.03,314.94 L748.28,314.98 L748.53,315.03 L748.78,315.08 L749.04,315.12 L749.29,315.17 L749.54,315.22 L749.79,315.26 L750.04,315.31 L750.29,315.35 L750.54,315.40 L750.79,315.44 L751.04,315.49 L751.29,315.54 L751.54,315.58 L751.79,315.63 L752.05,315.67 L752.30,315.72 L752.55,315.76 L752.80,315.81 L753.05,315.85 L753.30,315.90" fill="none" stroke="#548aa2" stroke-width="1.25" stroke-linejoin="round"/><path d="M490.80,337.50 L491.10,326.48 L491.40,316.20 L491.70,307.20 L492.00,300.00 L492.26,294.79 L492.52,289.88 L492.79,285.34 L493.05,281.20 L493.31,277.53 L493.58,274.37 L493.84,271.78 L494.10,269.80 L494.35,268.27 L494.60,266.85 L494.85,265.56 L495.10,264.41 L495.35,263.43 L495.60,262.64 L495.85,262.05 L496.10,261.70 L496.35,261.47 L496.61,261.26 L496.86,261.07 L497.12,260.89 L497.37,260.73 L497.62,260.58 L497.88,260.46 L498.13,260.35 L498.38,260.26 L498.64,260.19 L498.89,260.14 L499.15,260.11 L499.40,260.10 L499.66,260.10 L499.91,260.10 L500.17,260.11 L500.43,260.11 L500.69,260.12 L500.94,260.13 L501.20,260.14 L501.46,260.15 L501.71,260.16 L501.97,260.17 L502.23,260.19 L502.49,260.20 L502.74,260.22 L503.00,260.24 L503.26,260.26 L503.51,260.28 L503.77,260.30 L504.03,260.32 L504.29,260.35 L504.54,260.37 L504.80,260.40 L505.05,260.43 L505.30,260.49 L505.55,260.55 L505.80,260.63 L506.05,260.73 L506.30,260.84 L506.55,260.96 L506.80,261.09 L507.05,261.23 L507.30,261.38 L507.55,261.53 L507.80,261.70 L508.05,261.87 L508.30,262.04 L508.55,262.22 L508.80,262.40 L509.07,262.62 L509.33,262.87 L509.60,263.16 L509.87,263.49 L510.13,263.84 L510.40,264.21 L510.67,264.60 L510.93,265.00 L511.20,265.41 L511.47,265.83 L511.73,266.24 L512.00,266.65 L512.27,267.05 L512.53,267.43 L512.80,267.80 L513.06,268.15 L513.31,268.50 L513.57,268.86 L513.82,269.22 L514.08,269.58 L514.34,269.95 L514.59,270.31 L514.85,270.67 L515.11,271.02 L515.36,271.36 L515.62,271.70 L515.88,272.03 L516.13,272.34 L516.39,272.65 L516.64,272.93 L516.90,273.20 L517.15,273.45 L517.41,273.70 L517.66,273.95 L517.92,274.19 L518.17,274.42 L518.42,274.65 L518.68,274.88 L518.93,275.10 L519.19,275.32 L519.44,275.54 L519.69,275.75 L519.95,275.96 L520.20,276.16 L520.46,276.36 L520.71,276.56 L520.96,276.76 L521.22,276.95 L521.47,277.14 L521.73,277.33 L521.98,277.51 L522.24,277.70 L522.49,277.88 L522.74,278.06 L523.00,278.24 L523.25,278.42 L523.51,278.59 L523.76,278.77 L524.01,278.94 L524.27,279.12 L524.52,279.29 L524.78,279.46 L525.03,279.64 L525.28,279.81 L525.54,279.98 L525.79,280.15 L526.05,280.33 L526.30,280.50 L526.55,280.67 L526.81,280.84 L527.06,281.02 L527.31,281.19 L527.56,281.36 L527.82,281.53 L528.07,281.70 L528.32,281.86 L528.58,282.03 L528.83,282.20 L529.08,282.36 L529.33,282.53 L529.59,282.69 L529.84,282.86 L530.09,283.02 L530.35,283.18 L530.60,283.34 L530.85,283.50 L531.10,283.66 L531.36,283.82 L531.61,283.98 L531.86,284.14 L532.12,284.29 L532.37,284.45 L532.62,284.60 L532.87,284.76 L533.13,284.91 L533.38,285.06 L533.63,285.22 L533.88,285.37 L534.14,285.52 L534.39,285.67 L534.64,285.82 L534.90,285.96 L535.15,286.11 L535.40,286.26 L535.65,286.40 L535.91,286.54 L536.16,286.69 L536.41,286.83 L536.67,286.97 L536.92,287.11 L537.17,287.25 L537.42,287.39 L537.68,287.53 L537.93,287.67 L538.18,287.80 L538.44,287.94 L538.69,288.07 L538.94,288.21 L539.19,288.34 L539.45,288.47 L539.70,288.60 L539.95,288.73 L540.21,288.86 L540.46,288.98 L540.71,289.11 L540.96,289.24 L541.22,289.36 L541.47,289.48 L541.72,289.60 L541.98,289.73 L542.23,289.85 L542.48,289.96 L542.73,290.08 L542.99,290.20 L543.24,290.32 L543.49,290.43 L543.75,290.55 L544.00,290.66 L544.25,290.78 L544.50,290.89 L544.76,291.00 L545.01,291.11 L545.26,291.23 L545.52,291.34 L545.77,291.45 L546.02,291.56 L546.27,291.67 L546.53,291.78 L546.78,291.89 L547.03,292.00 L547.28,292.10 L547.54,292.21 L547.79,292.32 L548.04,292.43 L548.30,292.54 L548.55,292.64 L548.80,292.75 L549.05,292.86 L549.31,292.97 L549.56,293.07 L549.81,293.18 L550.07,293.29 L550.32,293.40 L550.57,293.50 L550.82,293.61 L551.08,293.72 L551.33,293.83 L551.58,293.94 L551.84,294.05 L552.09,294.16 L552.34,294.27 L552.59,294.38 L552.85,294.49 L553.10,294.60 L553.35,294.71 L553.60,294.82 L553.85,294.93 L554.10,295.05 L554.36,295.16 L554.61,295.27 L554.86,295.38 L555.11,295.50 L555.36,295.61 L555.61,295.72 L555.86,295.84 L556.11,295.95 L556.37,296.06 L556.62,296.18 L556.87,296.29 L557.12,296.40 L557.37,296.51 L557.62,296.63 L557.87,296.74 L558.12,296.85 L558.37,296.96 L558.63,297.08 L558.88,297.19 L559.13,297.30 L559.38,297.41 L559.63,297.52 L559.88,297.63 L560.13,297.74 L560.38,297.85 L560.63,297.96 L560.89,298.06 L561.14,298.17 L561.39,298.28 L561.64,298.38 L561.89,298.49 L562.14,298.59 L562.39,298.70 L562.64,298.80 L562.90,298.90 L563.15,299.00 L563.40,299.10 L563.65,299.20 L563.90,299.30 L564.15,299.40 L564.40,299.50 L564.65,299.59 L564.90,299.69 L565.16,299.79 L565.41,299.88 L565.66,299.98 L565.91,300.08 L566.16,300.18 L566.41,300.27 L566.66,300.37 L566.91,300.47 L567.16,300.56 L567.42,300.66 L567.67,300.76 L567.92,300.85 L568.17,300.95 L568.42,301.04 L568.67,301.14 L568.92,301.24 L569.17,301.33 L569.42,301.43 L569.67,301.52 L569.93,301.62 L570.18,301.71 L570.43,301.81 L570.68,301.90 L570.93,302.00 L571.18,302.09 L571.43,302.19 L571.68,302.28 L571.93,302.38 L572.19,302.47 L572.44,302.57 L572.69,302.66 L572.94,302.75 L573.19,302.85 L573.44,302.94 L573.69,303.03 L573.94,303.13 L574.19,303.22 L574.45,303.31 L574.70,303.41 L574.95,303.50 L575.20,303.59 L575.45,303.69 L575.70,303.78 L575.95,303.87 L576.20,303.96 L576.45,304.06 L576.71,304.15 L576.96,304.24 L577.21,304.33 L577.46,304.42 L577.71,304.51 L577.96,304.61 L578.21,304.70 L578.46,304.79 L578.71,304.88 L578.97,304.97 L579.22,305.06 L579.47,305.15 L579.72,305.24 L579.97,305.33 L580.22,305.42 L580.47,305.51 L580.72,305.60 L580.97,305.69 L581.23,305.78 L581.48,305.87 L581.73,305.96 L581.98,306.05 L582.23,306.14 L582.48,306.22 L582.73,306.31 L582.98,306.40 L583.23,306.49 L583.48,306.58 L583.74,306.67 L583.99,306.75 L584.24,306.84 L584.49,306.93 L584.74,307.01 L584.99,307.10 L585.24,307.19 L585.49,307.28 L585.74,307.36 L586.00,307.45 L586.25,307.53 L586.50,307.62 L586.75,307.71 L587.00,307.79 L587.25,307.88 L587.50,307.96 L587.75,308.05 L588.00,308.13 L588.26,308.22 L588.51,308.30 L588.76,308.39 L589.01,308.47 L589.26,308.55 L589.51,308.64 L589.76,308.72 L590.01,308.81 L590.26,308.89 L590.52,308.97 L590.77,309.05 L591.02,309.14 L591.27,309.22 L591.52,309.30 L591.77,309.38 L592.02,309.47 L592.27,309.55 L592.52,309.63 L592.77,309.71 L593.03,309.79 L593.28,309.87 L593.53,309.95 L593.78,310.03 L594.03,310.11 L594.28,310.19 L594.53,310.27 L594.78,310.35 L595.03,310.43 L595.29,310.51 L595.54,310.59 L595.79,310.67 L596.04,310.75 L596.29,310.83 L596.54,310.91 L596.79,310.99 L597.04,311.06 L597.29,311.14 L597.55,311.22 L597.80,311.30 L598.05,311.37 L598.30,311.45 L598.55,311.53 L598.80,311.60 L599.05,311.68 L599.30,311.75 L599.55,311.83 L599.81,311.91 L600.06,311.98 L600.31,312.06 L600.56,312.13 L600.81,312.21 L601.06,312.28 L601.31,312.35 L601.56,312.43 L601.81,312.50 L602.07,312.58 L602.32,312.65 L602.57,312.72 L602.82,312.79 L603.07,312.87 L603.32,312.94 L603.57,313.01 L603.82,313.08 L604.07,313.15 L604.33,313.23 L604.58,313.30 L604.83,313.37 L605.08,313.44 L605.33,313.51 L605.58,313.58 L605.83,313.65 L606.08,313.72 L606.33,313.79 L606.58,313.86 L606.84,313.93 L607.09,314.00 L607.34,314.06 L607.59,314.13 L607.84,314.20 L608.09,314.27 L608.34,314.34 L608.59,314.40 L608.84,314.47 L609.10,314.54 L609.35,314.60 L609.60,314.67 L609.85,314.73 L610.10,314.80 L610.35,314.87 L610.60,314.93 L610.85,315.00 L611.10,315.06 L611.35,315.13 L611.60,315.19 L611.86,315.26 L612.11,315.32 L612.36,315.38 L612.61,315.45 L612.86,315.51 L613.11,315.58 L613.36,315.64 L613.61,315.70 L613.86,315.77 L614.11,315.83 L614.36,315.90 L614.61,315.96 L614.86,316.02 L615.12,316.09 L615.37,316.15 L615.62,316.21 L615.87,316.27 L616.12,316.34 L616.37,316.40 L616.62,316.46 L616.87,316.52 L617.12,316.59 L617.37,316.65 L617.62,316.71 L617.87,316.77 L618.12,316.83 L618.37,316.90 L618.63,316.96 L618.88,317.02 L619.13,317.08 L619.38,317.14 L619.63,317.20 L619.88,317.26 L620.13,317.32 L620.38,317.38 L620.63,317.44 L620.88,317.50 L621.13,317.56 L621.38,317.63 L621.63,317.69 L621.89,317.75 L622.14,317.80 L622.39,317.86 L622.64,317.92 L622.89,317.98 L623.14,318.04 L623.39,318.10 L623.64,318.16 L623.89,318.22 L624.14,318.28 L624.39,318.34 L624.64,318.40 L624.89,318.45 L625.15,318.51 L625.40,318.57 L625.65,318.63 L625.90,318.69 L626.15,318.75 L626.40,318.80 L626.65,318.86 L626.90,318.92 L627.15,318.98 L627.40,319.03 L627.65,319.09 L627.90,319.15 L628.15,319.20 L628.41,319.26 L628.66,319.32 L628.91,319.37 L629.16,319.43 L629.41,319.49 L629.66,319.54 L629.91,319.60 L630.16,319.65 L630.41,319.71 L630.66,319.77 L630.91,319.82 L631.16,319.88 L631.41,319.93 L631.66,319.99 L631.92,320.04 L632.17,320.10 L632.42,320.15 L632.67,320.21 L632.92,320.26 L633.17,320.32 L633.42,320.37 L633.67,320.42 L633.92,320.48 L634.17,320.53 L634.42,320.59 L634.67,320.64 L634.92,320.69 L635.18,320.75 L635.43,320.80 L635.68,320.85 L635.93,320.91 L636.18,320.96 L636.43,321.01 L636.68,321.06 L636.93,321.12 L637.18,321.17 L637.43,321.22 L637.68,321.27 L637.93,321.33 L638.18,321.38 L638.44,321.43 L638.69,321.48 L638.94,321.53 L639.19,321.58 L639.44,321.64 L639.69,321.69 L639.94,321.74 L640.19,321.79 L640.44,321.84 L640.69,321.89 L640.94,321.94 L641.19,321.99 L641.44,322.04 L641.69,322.09 L641.95,322.14 L642.20,322.19 L642.45,322.24 L642.70,322.29 L642.95,322.34 L643.20,322.39 L643.45,322.44 L643.70,322.49 L643.95,322.54 L644.20,322.59 L644.45,322.63 L644.70,322.68 L644.95,322.73 L645.21,322.78 L645.46,322.83 L645.71,322.88 L645.96,322.92 L646.21,322.97 L646.46,323.02 L646.71,323.07 L646.96,323.11 L647.21,323.16 L647.46,323.21 L647.71,323.26 L647.96,323.30 L648.21,323.35 L648.47,323.40 L648.72,323.44 L648.97,323.49 L649.22,323.54 L649.47,323.58 L649.72,323.63 L649.97,323.67 L650.22,323.72 L650.47,323.76 L650.72,323.81 L650.97,323.86 L651.22,323.90 L651.47,323.95 L651.73,323.99 L651.98,324.04 L652.23,324.08 L652.48,324.13 L652.73,324.17 L652.98,324.21 L653.23,324.26 L653.48,324.30 L653.73,324.35 L653.98,324.39 L654.23,324.43 L654.48,324.48 L654.73,324.52 L654.98,324.56 L655.24,324.61 L655.49,324.65 L655.74,324.69 L655.99,324.73 L656.24,324.78 L656.49,324.82 L656.74,324.86 L656.99,324.90 L657.24,324.95 L657.49,324.99 L657.74,325.03 L657.99,325.07 L658.24,325.11 L658.50,325.15 L658.75,325.20 L659.00,325.24 L659.25,325.28 L659.50,325.32 L659.75,325.36 L660.00,325.40 L660.25,325.44 L660.50,325.48 L660.75,325.52 L661.00,325.56 L661.25,325.60 L661.50,325.64 L661.76,325.68 L662.01,325.72 L662.26,325.76 L662.51,325.80 L662.76,325.84 L663.01,325.88 L663.26,325.92 L663.51,325.96 L663.76,325.99 L664.01,326.03 L664.26,326.07 L664.51,326.11 L664.76,326.15 L665.02,326.19 L665.27,326.23 L665.52,326.26 L665.77,326.30 L666.02,326.34 L666.27,326.38 L666.52,326.42 L666.77,326.45 L667.02,326.49 L667.27,326.53 L667.52,326.57 L667.77,326.60 L668.02,326.64 L668.27,326.68 L668.53,326.71 L668.78,326.75 L669.03,326.79 L669.28,326.82 L669.53,326.86 L669.78,326.90 L670.03,326.93 L670.28,326.97 L670.53,327.01 L670.78,327.04 L671.03,327.08 L671.28,327.11 L671.53,327.15 L671.79,327.19 L672.04,327.22 L672.29,327.26 L672.54,327.29 L672.79,327.33 L673.04,327.36 L673.29,327.40 L673.54,327.43 L673.79,327.47 L674.04,327.50 L674.29,327.54 L674.54,327.57 L674.79,327.61 L675.05,327.64 L675.30,327.68 L675.55,327.71 L675.80,327.74 L676.05,327.78 L676.30,327.81 L676.55,327.85 L676.80,327.88 L677.05,327.92 L677.30,327.95 L677.55,327.98 L677.80,328.02 L678.05,328.05 L678.31,328.08 L678.56,328.12 L678.81,328.15 L679.06,328.18 L679.31,328.22 L679.56,328.25 L679.81,328.28 L680.06,328.32 L680.31,328.35 L680.56,328.38 L680.81,328.42 L681.06,328.45 L681.31,328.48 L681.56,328.51 L681.82,328.55 L682.07,328.58 L682.32,328.61 L682.57,328.64 L682.82,328.68 L683.07,328.71 L683.32,328.74 L683.57,328.77 L683.82,328.80 L684.07,328.84 L684.32,328.87 L684.57,328.90 L684.82,328.93 L685.08,328.96 L685.33,329.00 L685.58,329.03 L685.83,329.06 L686.08,329.09 L686.33,329.12 L686.58,329.15 L686.83,329.18 L687.08,329.22 L687.33,329.25 L687.58,329.28 L687.83,329.31 L688.08,329.34 L688.34,329.37 L688.59,329.40 L688.84,329.43 L689.09,329.46 L689.34,329.49 L689.59,329.53 L689.84,329.56 L690.09,329.59 L690.34,329.62 L690.59,329.65 L690.84,329.68 L691.09,329.71 L691.34,329.74 L691.59,329.77 L691.85,329.80 L692.10,329.83 L692.35,329.86 L692.60,329.89 L692.85,329.92 L693.10,329.95 L693.35,329.98 L693.60,330.01 L693.85,330.04 L694.10,330.07 L694.35,330.10 L694.60,330.13 L694.85,330.16 L695.11,330.19 L695.36,330.22 L695.61,330.25 L695.86,330.28 L696.11,330.31 L696.36,330.34 L696.61,330.37 L696.86,330.40 L697.11,330.43 L697.36,330.46 L697.61,330.49 L697.86,330.52 L698.11,330.55 L698.37,330.57 L698.62,330.60 L698.87,330.63 L699.12,330.66 L699.37,330.69 L699.62,330.72 L699.87,330.75 L700.12,330.78 L700.37,330.81 L700.62,330.84 L700.87,330.87 L701.12,330.90 L701.37,330.92 L701.63,330.95 L701.88,330.98 L702.13,331.01 L702.38,331.04 L702.63,331.07 L702.88,331.10 L703.13,331.13 L703.38,331.16 L703.63,331.18 L703.88,331.21 L704.13,331.24 L704.38,331.27 L704.63,331.30 L704.88,331.33 L705.14,331.36 L705.39,331.39 L705.64,331.41 L705.89,331.44 L706.14,331.47 L706.39,331.50 L706.64,331.53 L706.89,331.56 L707.14,331.59 L707.39,331.61 L707.64,331.64 L707.89,331.67 L708.14,331.70 L708.40,331.73 L708.65,331.76 L708.90,331.79 L709.15,331.81 L709.40,331.84 L709.65,331.87 L709.90,331.90 L710.15,331.93 L710.40,331.96 L710.65,331.99 L710.90,332.01 L711.15,332.04 L711.41,332.07 L711.66,332.10 L711.91,332.13 L712.16,332.16 L712.41,332.18 L712.66,332.21 L712.91,332.24 L713.16,332.27 L713.41,332.30 L713.66,332.32 L713.91,332.35 L714.16,332.38 L714.42,332.41 L714.67,332.44 L714.92,332.46 L715.17,332.49 L715.42,332.52 L715.67,332.55 L715.92,332.58 L716.17,332.60 L716.42,332.63 L716.67,332.66 L716.92,332.69 L717.18,332.71 L717.43,332.74 L717.68,332.77 L717.93,332.80 L718.18,332.82 L718.43,332.85 L718.68,332.88 L718.93,332.91 L719.18,332.93 L719.43,332.96 L719.68,332.99 L719.93,333.01 L720.19,333.04 L720.44,333.07 L720.69,333.10 L720.94,333.12 L721.19,333.15 L721.44,333.18 L721.69,333.20 L721.94,333.23 L722.19,333.26 L722.44,333.28 L722.69,333.31 L722.95,333.34 L723.20,333.36 L723.45,333.39 L723.70,333.42 L723.95,333.44 L724.20,333.47 L724.45,333.50 L724.70,333.52 L724.95,333.55 L725.20,333.58 L725.45,333.60 L725.70,333.63 L725.96,333.66 L726.21,333.68 L726.46,333.71 L726.71,333.74 L726.96,333.76 L727.21,333.79 L727.46,333.81 L727.71,333.84 L727.96,333.87 L728.21,333.89 L728.46,333.92 L728.72,333.94 L728.97,333.97 L729.22,334.00 L729.47,334.02 L729.72,334.05 L729.97,334.07 L730.22,334.10 L730.47,334.12 L730.72,334.15 L730.97,334.18 L731.22,334.20 L731.47,334.23 L731.73,334.25 L731.98,334.28 L732.23,334.30 L732.48,334.33 L732.73,334.35 L732.98,334.38 L733.23,334.40 L733.48,334.43 L733.73,334.46 L733.98,334.48 L734.23,334.51 L734.48,334.53 L734.74,334.56 L734.99,334.58 L735.24,334.61 L735.49,334.63 L735.74,334.66 L735.99,334.68 L736.24,334.71 L736.49,334.73 L736.74,334.75 L736.99,334.78 L737.24,334.80 L737.50,334.83 L737.75,334.85 L738.00,334.88 L738.25,334.90 L738.50,334.93 L738.75,334.95 L739.00,334.98 L739.25,335.00 L739.50,335.02 L739.75,335.05 L740.00,335.07 L740.25,335.10 L740.51,335.12 L740.76,335.15 L741.01,335.17 L741.26,335.19 L741.51,335.22 L741.76,335.24 L742.01,335.27 L742.26,335.29 L742.51,335.31 L742.76,335.34 L743.01,335.36 L743.27,335.38 L743.52,335.41 L743.77,335.43 L744.02,335.46 L744.27,335.48 L744.52,335.50 L744.77,335.53 L745.02,335.55 L745.27,335.57 L745.52,335.60 L745.77,335.62 L746.02,335.64 L746.28,335.67 L746.53,335.69 L746.78,335.71 L747.03,335.74 L747.28,335.76 L747.53,335.78 L747.78,335.80 L748.03,335.83 L748.28,335.85 L748.53,335.87 L748.78,335.90 L749.04,335.92 L749.29,335.94 L749.54,335.96 L749.79,335.99 L750.04,336.01 L750.29,336.03 L750.54,336.05 L750.79,336.08 L751.04,336.10 L751.29,336.12 L751.54,336.14 L751.79,336.17 L752.05,336.19 L752.30,336.21 L752.55,336.23 L752.80,336.26 L753.05,336.28 L753.30,336.30" fill="none" stroke="#e84b50" stroke-width="1.25" stroke-linejoin="round"/><line x1="515.6" y1="201.7" x2="515.6" y2="254.5" stroke="#4a6f80" stroke-width="1"/><line x1="512.6" y1="201.7" x2="518.6" y2="201.7" stroke="#4a6f80" stroke-width="1"/><line x1="512.6" y1="254.5" x2="518.6" y2="254.5" stroke="#4a6f80" stroke-width="1"/><circle cx="515.6" cy="224.8" r="2.4" fill="#f5a623"/></svg>
<div style="position:absolute;left:484.00px;top:329.50px;font-size:6.6px;line-height:6.6px;color:#666;font-weight:400;white-space:nowrap;transform:translate(-50%,0) rotate(-90deg);-webkit-text-stroke:0.1px #666">1</div>
<div style="position:absolute;left:484.00px;top:311.80px;font-size:6.6px;line-height:6.6px;color:#666;font-weight:400;white-space:nowrap;transform:translate(-50%,0) rotate(-90deg);-webkit-text-stroke:0.1px #666">2</div>
<div style="position:absolute;left:484.00px;top:294.50px;font-size:6.6px;line-height:6.6px;color:#666;font-weight:400;white-space:nowrap;transform:translate(-50%,0) rotate(-90deg);-webkit-text-stroke:0.1px #666">3</div>
<div style="position:absolute;left:484.00px;top:278.00px;font-size:6.6px;line-height:6.6px;color:#666;font-weight:400;white-space:nowrap;transform:translate(-50%,0) rotate(-90deg);-webkit-text-stroke:0.1px #666">4</div>
<div style="position:absolute;left:484.00px;top:261.50px;font-size:6.6px;line-height:6.6px;color:#666;font-weight:400;white-space:nowrap;transform:translate(-50%,0) rotate(-90deg);-webkit-text-stroke:0.1px #666">5</div>
<div style="position:absolute;left:484.00px;top:245.00px;font-size:6.6px;line-height:6.6px;color:#666;font-weight:400;white-space:nowrap;transform:translate(-50%,0) rotate(-90deg);-webkit-text-stroke:0.1px #666">6</div>
<div style="position:absolute;left:484.00px;top:228.50px;font-size:6.6px;line-height:6.6px;color:#666;font-weight:400;white-space:nowrap;transform:translate(-50%,0) rotate(-90deg);-webkit-text-stroke:0.1px #666">7</div>
<div style="position:absolute;left:484.00px;top:211.20px;font-size:6.6px;line-height:6.6px;color:#666;font-weight:400;white-space:nowrap;transform:translate(-50%,0) rotate(-90deg);-webkit-text-stroke:0.1px #666">8</div>
<div style="position:absolute;left:484.00px;top:194.70px;font-size:6.6px;line-height:6.6px;color:#666;font-weight:400;white-space:nowrap;transform:translate(-50%,0) rotate(-90deg);-webkit-text-stroke:0.1px #666">9</div>
<div style="position:absolute;left:484.00px;top:179.10px;font-size:6.6px;line-height:6.6px;color:#666;font-weight:400;white-space:nowrap;transform:translate(-50%,0) rotate(-90deg);-webkit-text-stroke:0.1px #666">10</div>
<div style="position:absolute;left:491.30px;transform:translateX(-50%);top:354.68px;font-size:6.6px;line-height:6.6px;color:#666;font-weight:400;white-space:nowrap;;-webkit-text-stroke:0.1px #666">0</div>
<div style="position:absolute;left:545.70px;transform:translateX(-50%);top:354.68px;font-size:6.6px;line-height:6.6px;color:#666;font-weight:400;white-space:nowrap;;-webkit-text-stroke:0.1px #666">5</div>
<div style="position:absolute;left:600.50px;transform:translateX(-50%);top:354.68px;font-size:6.6px;line-height:6.6px;color:#666;font-weight:400;white-space:nowrap;;-webkit-text-stroke:0.1px #666">10</div>
<div style="position:absolute;left:655.30px;transform:translateX(-50%);top:354.68px;font-size:6.6px;line-height:6.6px;color:#666;font-weight:400;white-space:nowrap;;-webkit-text-stroke:0.1px #666">15</div>
<div style="position:absolute;left:709.70px;transform:translateX(-50%);top:354.68px;font-size:6.6px;line-height:6.6px;color:#666;font-weight:400;white-space:nowrap;;-webkit-text-stroke:0.1px #666">20</div>
<div style="position:absolute;left:764.20px;transform:translateX(-50%);top:354.68px;font-size:6.6px;line-height:6.6px;color:#666;font-weight:400;white-space:nowrap;;-webkit-text-stroke:0.1px #666">25</div>
<div style="position:absolute;left:627.70px;transform:translateX(-50%);top:367.48px;font-size:7.0px;line-height:7.0px;color:#444;font-weight:400;white-space:nowrap;;-webkit-text-stroke:0.1px #444">Time after dose(hr)</div>
<div style="position:absolute;left:467.30px;top:260.35px;font-size:6.9px;line-height:6.9px;color:#555;font-weight:400;white-space:nowrap;transform:translate(-50%,0) rotate(-90deg);-webkit-text-stroke:0.1px #555">Conc µg/mL</div>
<div style="position:absolute;left:155.8px;top:397px;width:601.2px;height:340px;background:#fff;border-radius:2px"></div>
<div style="position:absolute;left:155.8px;top:397px;width:601.2px;height:25.100000000000023px;background:#d8d8d8"></div>
<div style="position:absolute;left:163.00px;top:407.18px;font-size:7.6px;line-height:7.6px;color:#2b3f8c;font-weight:700;white-space:nowrap;">Dose Simulation</div>
<div style="position:absolute;left:724.8px;top:402px;width:25.200000000000045px;height:15.899999999999977px;background:#fff;border-radius:1px"></div>
<div style="position:absolute;left:731.8px;top:409.4px;width:11.200000000000045px;height:1.2000000000000455px;background:#6a6a6a"></div>
<div style="position:absolute;left:165.30px;top:434.31px;font-size:8.35px;line-height:8.35px;color:#333;font-weight:400;white-space:nowrap;;-webkit-text-stroke:0.1px #333">Select drug</div>
<div style="position:absolute;left:165.3px;top:443.6px;width:116.19999999999999px;height:24.0px;border:1px solid #e3e3e3;box-sizing:border-box"></div>
<div style="position:absolute;left:174.80px;top:452.93px;font-size:7.1px;line-height:7.1px;color:#555;font-weight:400;white-space:nowrap;;-webkit-text-stroke:0.1px #555">INH</div>
<svg style="position:absolute;left:242px;top:452px" width="8" height="8" viewBox="0 0 8 8"><path d="M1,1 L7,7 M7,1 L1,7" stroke="#333" stroke-width="1.2"/></svg>
<svg style="position:absolute;left:265px;top:454px" width="8" height="5" viewBox="0 0 8 5"><polyline points="1,1 4,4 7,1" fill="none" stroke="#333" stroke-width="1.2"/></svg>
<div style="position:absolute;left:288.40px;top:434.31px;font-size:8.35px;line-height:8.35px;color:#333;font-weight:400;white-space:nowrap;;-webkit-text-stroke:0.1px #333">Dose (mg)</div>
<div style="position:absolute;left:288.4px;top:443.8px;width:115.40000000000003px;height:23.599999999999966px;border:1px solid #e3e3e3;box-sizing:border-box"></div>
<div style="position:absolute;left:294.30px;top:452.28px;font-size:7.4px;line-height:7.4px;color:#333;font-weight:400;white-space:nowrap;;-webkit-text-stroke:0.1px #333">200</div>
<div style="position:absolute;left:411.00px;top:434.31px;font-size:8.35px;line-height:8.35px;color:#333;font-weight:400;white-space:nowrap;;-webkit-text-stroke:0.1px #333">Time interval</div>
<div style="position:absolute;left:410.6px;top:443.6px;width:116.0px;height:24.0px;border:1px solid #e3e3e3;box-sizing:border-box"></div>
<div style="position:absolute;left:421.70px;top:452.68px;font-size:6.6px;line-height:6.6px;color:#444;font-weight:400;white-space:nowrap;;-webkit-text-stroke:0.1px #444">24</div>
<svg style="position:absolute;left:488px;top:452px" width="8" height="8" viewBox="0 0 8 8"><path d="M1,1 L7,7 M7,1 L1,7" stroke="#333" stroke-width="1.2"/></svg>
<svg style="position:absolute;left:511px;top:454px" width="8" height="5" viewBox="0 0 8 5"><polyline points="1,1 4,4 7,1" fill="none" stroke="#333" stroke-width="1.2"/></svg>
<div style="position:absolute;left:534.00px;top:434.31px;font-size:8.35px;line-height:8.35px;color:#333;font-weight:400;white-space:nowrap;;-webkit-text-stroke:0.1px #333">Interval</div>
<div style="position:absolute;left:533.8px;top:443.8px;width:116.0px;height:23.599999999999966px;border:1px solid #e3e3e3;box-sizing:border-box"></div>
<div style="position:absolute;left:540.00px;top:452.28px;font-size:7.4px;line-height:7.4px;color:#333;font-weight:400;white-space:nowrap;;-webkit-text-stroke:0.1px #333">7</div>
<div style="position:absolute;left:656.5px;top:443.5px;width:91.29999999999995px;height:23.399999999999977px;background:#2d57a2;border-radius:1px"></div>
<svg style="position:absolute;left:668px;top:450.5px" width="10" height="10" viewBox="0 0 10 10"><path d="M5,0.6 L9.2,2.8 L5,5 L0.8,2.8 Z" fill="#fff"/><path d="M1.2,4.9 L5,6.9 L8.8,4.9" fill="none" stroke="#fff" stroke-width="1.1" stroke-linejoin="round"/><path d="M1.2,7.1 L5,9.1 L8.8,7.1" fill="none" stroke="#fff" stroke-width="1.1" stroke-linejoin="round"/></svg>
<div style="position:absolute;left:682.50px;top:451.98px;font-size:8.0px;line-height:8.0px;color:#fff;font-weight:400;white-space:nowrap;-webkit-text-stroke:0.15px #fff">Run Simulation</div>
<div style="position:absolute;left:169.40px;top:478.08px;font-size:9.8px;line-height:9.8px;color:#3d4f8f;font-weight:400;white-space:nowrap;;-webkit-text-stroke:0.1px #3d4f8f">INH</div>
<div style="position:absolute;left:165.8px;top:494px;width:24.799999999999983px;height:1.3000000000000114px;background:#3d4f8f"></div>
<div style="position:absolute;left:165.60px;top:504.11px;font-size:8.75px;line-height:8.75px;color:#222;font-weight:400;white-space:nowrap;-webkit-text-stroke:0.3px #222">Drug: INH - Dose (mg): 200 - Time interval: 24 - Interval: 7</div>
<div style="position:absolute;left:294.6px;top:518.6px;width:5px;height:5px;border-radius:50%;background:#f5a623"></div>
<div style="position:absolute;left:302.80px;top:517.88px;font-size:6.2px;line-height:6.2px;color:#999;font-weight:400;white-space:nowrap;;-webkit-text-stroke:0.1px #999">Concentration</div>
<div style="position:absolute;left:348.9px;top:520.3px;width:20.400000000000034px;height:1.6000000000000227px;background:#4f8aa6"></div>
<div style="position:absolute;left:371.70px;top:517.88px;font-size:6.2px;line-height:6.2px;color:#999;font-weight:400;white-space:nowrap;;-webkit-text-stroke:0.1px #999">Individual Prediction</div>
<div style="position:absolute;left:434.8px;top:520.3px;width:20.80000000000001px;height:1.6000000000000227px;background:#e84343"></div>
<div style="position:absolute;left:458.00px;top:517.88px;font-size:6.2px;line-height:6.2px;color:#999;font-weight:400;white-space:nowrap;;-webkit-text-stroke:0.1px #999">Population Prediction</div>
<svg style="position:absolute;left:523px;top:519.6px" width="21" height="3"><line x1="0" y1="1.5" x2="21" y2="1.5" stroke="#555" stroke-width="1.6" stroke-dasharray="3,2.1"/></svg>
<div style="position:absolute;left:546.40px;top:517.88px;font-size:6.2px;line-height:6.2px;color:#999;font-weight:400;white-space:nowrap;;-webkit-text-stroke:0.1px #999">Cmax Reference Range</div>
<svg style="position:absolute;left:0;top:0" width="774" height="745"><line x1="194.6" y1="532" x2="194.6" y2="699.8" stroke="#ddd" stroke-width="0.8" stroke-dasharray="1.5,1.5"/><line x1="194.6" y1="699.8" x2="774" y2="699.8" stroke="#cfcfcf" stroke-width="0.9" stroke-dasharray="1.6,1.8"/><path d="M194.90,668.50 L195.10,626.24 L195.30,600.00 L195.50,589.33 L195.70,581.69 L195.90,577.12 L196.10,575.31 L196.30,574.13 L196.50,573.21 L196.70,572.50 L196.90,571.99 L197.10,571.63 L197.30,571.39 L197.50,571.18 L197.70,570.98 L197.90,570.82 L198.10,570.67 L198.30,570.56 L198.50,570.47 L198.70,570.42 L198.90,570.40 L199.10,570.44 L199.30,570.55 L199.50,570.73 L199.70,570.97 L199.90,571.26 L200.10,571.60 L200.30,571.98 L200.50,572.39 L200.70,572.88 L200.90,573.79 L201.10,574.98 L201.30,576.26 L201.50,577.44 L201.70,578.34 L201.90,579.00 L202.10,579.64 L202.30,580.22 L202.50,580.76 L202.70,581.26 L202.90,581.73 L203.10,582.18 L203.30,582.60 L203.50,583.01 L203.70,583.42 L203.90,583.81 L204.10,584.20 L204.30,584.60 L204.50,584.99 L204.70,585.39 L204.90,585.79 L205.10,586.20 L205.30,586.62 L205.50,587.04 L205.70,587.47 L205.90,587.91 L206.10,588.34 L206.30,588.77 L206.50,589.20 L206.70,589.63 L206.90,590.05 L207.10,590.47 L207.30,590.90 L207.50,591.32 L207.70,591.74 L207.90,592.16 L208.10,592.57 L208.30,592.99 L208.50,593.41 L208.70,593.83 L208.90,594.24 L209.10,594.66 L209.30,595.07 L209.50,595.48 L209.70,595.89 L209.90,596.30 L210.10,596.71 L210.30,597.12 L210.50,597.53 L210.70,597.93 L210.90,598.33 L211.10,598.74 L211.30,599.14 L211.50,599.54 L211.70,599.94 L211.90,600.34 L212.10,600.73 L212.30,601.13 L212.50,601.52 L212.70,601.91 L212.90,602.30 L213.10,602.69 L213.30,603.08 L213.50,603.47 L213.70,603.85 L213.90,604.24 L214.10,604.62 L214.30,605.00 L214.50,605.38 L214.70,605.76 L214.90,606.14 L215.10,606.51 L215.30,606.89 L215.50,607.26 L215.70,607.63 L215.90,608.00 L216.10,608.37 L216.30,608.74 L216.50,609.11 L216.70,609.47 L216.90,609.84 L217.10,610.20 L217.30,610.56 L217.50,610.92 L217.70,611.28 L217.90,611.64 L218.10,611.99 L218.30,612.35 L218.50,612.70 L218.70,613.06 L218.90,613.41 L219.10,613.76 L219.30,614.11 L219.50,614.45 L219.70,614.80 L219.90,615.14 L220.10,615.49 L220.30,615.83 L220.50,616.17 L220.70,616.51 L220.90,616.85 L221.10,617.19 L221.30,617.52 L221.50,617.86 L221.70,618.19 L221.90,618.52 L222.10,618.85 L222.30,619.18 L222.50,619.51 L222.70,619.84 L222.90,620.17 L223.10,620.49 L223.30,620.82 L223.50,621.14 L223.70,621.46 L223.90,621.78 L224.10,622.10 L224.30,622.42 L224.50,622.73 L224.70,623.05 L224.90,623.36 L225.10,623.68 L225.30,623.99 L225.50,624.30 L225.70,624.61 L225.90,624.92 L226.10,625.22 L226.30,625.53 L226.50,625.83 L226.70,626.14 L226.90,626.44 L227.10,626.74 L227.30,627.04 L227.50,627.34 L227.70,627.64 L227.90,627.93 L228.10,628.23 L228.30,628.52 L228.50,628.82 L228.70,629.11 L228.90,629.40 L229.10,629.69 L229.30,629.98 L229.50,630.27 L229.70,630.55 L229.90,630.84 L230.10,631.12 L230.30,631.41 L230.50,631.69 L230.70,631.97 L230.90,632.25 L231.10,632.53 L231.30,632.81 L231.50,633.08 L231.70,633.36 L231.90,633.63 L232.10,633.91 L232.30,634.18 L232.50,634.45 L232.70,634.72 L232.90,634.99 L233.10,635.26 L233.30,635.52 L233.50,635.79 L233.70,636.06 L233.90,636.32 L234.10,636.58 L234.30,636.84 L234.50,637.10 L234.70,637.36 L234.90,637.62 L235.10,637.88 L235.30,638.14 L235.50,638.39 L235.70,638.65 L235.90,638.90 L236.10,639.15 L236.30,639.40 L236.50,639.65 L236.70,639.90 L236.90,640.15 L237.10,640.40 L237.30,640.64 L237.50,640.89 L237.70,641.13 L237.90,641.38 L238.10,641.62 L238.30,641.86 L238.50,642.10 L238.70,642.34 L238.90,642.58 L239.10,642.82 L239.30,643.05 L239.50,643.29 L239.70,643.52 L239.90,643.76 L240.10,643.99 L240.30,644.22 L240.50,644.45 L240.70,644.68 L240.90,644.91 L241.10,645.14 L241.30,645.37 L241.50,645.59 L241.70,645.82 L241.90,646.04 L242.10,646.26 L242.30,646.49 L242.50,646.71 L242.70,646.93 L242.90,647.15 L243.10,647.37 L243.30,647.58 L243.50,647.80 L243.70,648.02 L243.90,648.23 L244.10,648.45 L244.30,648.66 L244.50,648.87 L244.70,649.08 L244.90,649.29 L245.10,649.50 L245.30,649.71 L245.50,649.92 L245.70,650.13 L245.90,650.33 L246.10,650.54 L246.30,650.74 L246.50,650.94 L246.70,651.15 L246.90,651.35 L247.10,651.55 L247.30,651.75 L247.50,651.95 L247.70,652.15 L247.90,652.35 L248.10,652.54 L248.30,652.74 L248.50,652.93 L248.70,653.13 L248.90,653.32 L249.10,653.51 L249.30,653.70 L249.50,653.90 L249.70,654.09 L249.90,654.27 L250.10,654.46 L250.30,654.65 L250.50,654.84 L250.70,655.02 L250.90,655.21 L251.10,655.39 L251.30,655.58 L251.50,655.76 L251.70,655.94 L251.90,656.12 L252.10,656.30 L252.30,656.48 L252.50,656.66 L252.70,656.84 L252.90,657.02 L253.10,657.20 L253.30,657.37 L253.50,657.55 L253.70,657.72 L253.90,657.89 L254.10,658.07 L254.30,658.24 L254.50,658.41 L254.70,658.58 L254.90,658.75 L255.10,658.92 L255.30,659.09 L255.50,659.26 L255.70,659.42 L255.90,659.59 L256.10,659.76 L256.30,659.92 L256.50,660.09 L256.70,660.25 L256.90,660.41 L257.10,660.57 L257.30,660.73 L257.50,660.90 L257.70,661.06 L257.90,661.21 L258.10,661.37 L258.30,661.53 L258.50,661.69 L258.70,661.84 L258.90,662.00 L259.10,662.16 L259.30,662.31 L259.50,662.46 L259.70,662.62 L259.90,662.77 L260.10,662.92 L260.30,663.07 L260.50,663.22 L260.70,663.37 L260.90,663.52 L261.10,663.67 L261.30,663.82 L261.50,663.97 L261.70,664.11 L261.90,664.26 L262.10,664.41 L262.30,664.55 L262.50,664.70 L262.70,664.84 L262.90,664.98 L263.10,665.12 L263.30,665.27 L263.50,665.41 L263.70,665.54 L263.90,665.68 L264.10,665.82 L264.30,665.95 L264.50,666.09 L264.70,666.22 L264.90,666.35 L265.10,666.47 L265.30,666.60 L265.50,666.73 L265.70,666.86 L265.90,667.00 L266.10,667.14 L266.30,667.29 L266.50,667.45 L266.70,667.61 L266.90,667.78 L267.10,667.96 L267.30,668.13 L267.50,668.29 L267.70,668.42 L267.90,668.53 L268.10,668.60 L268.10,668.60 L268.30,655.22 L268.50,642.50 L268.70,632.81 L268.90,624.16 L269.10,617.27 L269.30,612.85 L269.50,611.16 L269.70,610.04 L269.90,609.05 L270.10,608.20 L270.30,607.47 L270.50,606.86 L270.70,606.36 L270.90,605.95 L271.10,605.63 L271.30,605.38 L271.50,605.21 L271.70,605.07 L271.90,604.94 L272.10,604.82 L272.30,604.71 L272.50,604.61 L272.70,604.52 L272.90,604.44 L273.10,604.37 L273.30,604.31 L273.50,604.26 L273.70,604.23 L273.90,604.21 L274.10,604.20 L274.30,604.23 L274.50,604.33 L274.70,604.49 L274.90,604.70 L275.10,604.95 L275.30,605.31 L275.50,605.70 L275.70,606.11 L275.90,606.54 L276.10,606.97 L276.30,607.47 L276.50,608.07 L276.70,608.75 L276.90,609.47 L277.10,610.22 L277.30,610.97 L277.50,611.70 L277.70,612.41 L277.90,613.08 L278.10,613.69 L278.30,614.25 L278.50,614.75 L278.70,615.21 L278.90,615.66 L279.10,616.10 L279.30,616.53 L279.50,616.96 L279.70,617.38 L279.90,617.79 L280.10,618.21 L280.30,618.61 L280.50,619.01 L280.70,619.41 L280.90,619.80 L281.10,620.19 L281.30,620.59 L281.50,620.99 L281.70,621.37 L281.90,621.76 L282.10,622.13 L282.30,622.50 L282.50,622.86 L282.70,623.22 L282.90,623.57 L283.10,623.92 L283.30,624.26 L283.50,624.59 L283.70,624.93 L283.90,625.26 L284.10,625.58 L284.30,625.91 L284.50,626.23 L284.70,626.54 L284.90,626.86 L285.10,627.17 L285.30,627.48 L285.50,627.79 L285.70,628.10 L285.90,628.41 L286.10,628.71 L286.30,629.02 L286.50,629.32 L286.70,629.62 L286.90,629.92 L287.10,630.22 L287.30,630.52 L287.50,630.81 L287.70,631.11 L287.90,631.40 L288.10,631.69 L288.30,631.98 L288.50,632.27 L288.70,632.56 L288.90,632.85 L289.10,633.14 L289.30,633.42 L289.50,633.71 L289.70,633.99 L289.90,634.27 L290.10,634.55 L290.30,634.83 L290.50,635.11 L290.70,635.38 L290.90,635.66 L291.10,635.93 L291.30,636.20 L291.50,636.47 L291.70,636.74 L291.90,637.01 L292.10,637.27 L292.30,637.54 L292.50,637.80 L292.70,638.06 L292.90,638.32 L293.10,638.58 L293.30,638.84 L293.50,639.09 L293.70,639.35 L293.90,639.60 L294.10,639.85 L294.30,640.10 L294.50,640.35 L294.70,640.59 L294.90,640.84 L295.10,641.08 L295.30,641.32 L295.50,641.56 L295.70,641.80 L295.90,642.04 L296.10,642.27 L296.30,642.50 L296.50,642.74 L296.70,642.97 L296.90,643.19 L297.10,643.42 L297.30,643.64 L297.50,643.87 L297.70,644.09 L297.90,644.31 L298.10,644.53 L298.30,644.75 L298.50,644.96 L298.70,645.17 L298.90,645.39 L299.10,645.60 L299.30,645.81 L299.50,646.01 L299.70,646.22 L299.90,646.43 L300.10,646.63 L300.30,646.83 L300.50,647.03 L300.70,647.23 L300.90,647.43 L301.10,647.62 L301.30,647.82 L301.50,648.01 L301.70,648.20 L301.90,648.40 L302.10,648.59 L302.30,648.77 L302.50,648.96 L302.70,649.15 L302.90,649.34 L303.10,649.52 L303.30,649.70 L303.50,649.89 L303.70,650.07 L303.90,650.25 L304.10,650.43 L304.30,650.61 L304.50,650.79 L304.70,650.97 L304.90,651.14 L305.10,651.32 L305.30,651.50 L305.50,651.67 L305.70,651.85 L305.90,652.02 L306.10,652.19 L306.30,652.37 L306.50,652.54 L306.70,652.71 L306.90,652.89 L307.10,653.06 L307.30,653.23 L307.50,653.40 L307.70,653.57 L307.90,653.74 L308.10,653.92 L308.30,654.09 L308.50,654.26 L308.70,654.43 L308.90,654.60 L309.10,654.77 L309.30,654.94 L309.50,655.11 L309.70,655.28 L309.90,655.45 L310.10,655.62 L310.30,655.79 L310.50,655.96 L310.70,656.13 L310.90,656.30 L311.10,656.47 L311.30,656.64 L311.50,656.81 L311.70,656.98 L311.90,657.15 L312.10,657.32 L312.30,657.49 L312.50,657.66 L312.70,657.83 L312.90,658.00 L313.10,658.16 L313.30,658.33 L313.50,658.50 L313.70,658.67 L313.90,658.83 L314.10,659.00 L314.30,659.17 L314.50,659.33 L314.70,659.50 L314.90,659.66 L315.10,659.83 L315.30,659.99 L315.50,660.15 L315.70,660.31 L315.90,660.48 L316.10,660.64 L316.30,660.80 L316.50,660.95 L316.70,661.11 L316.90,661.27 L317.10,661.43 L317.30,661.58 L317.50,661.74 L317.70,661.89 L317.90,662.05 L318.10,662.20 L318.30,662.35 L318.50,662.50 L318.70,662.65 L318.90,662.80 L319.10,662.95 L319.30,663.10 L319.50,663.25 L319.70,663.40 L319.90,663.54 L320.10,663.69 L320.30,663.84 L320.50,663.98 L320.70,664.12 L320.90,664.27 L321.10,664.41 L321.30,664.55 L321.50,664.69 L321.70,664.83 L321.90,664.97 L322.10,665.11 L322.30,665.25 L322.50,665.39 L322.70,665.53 L322.90,665.67 L323.10,665.81 L323.30,665.94 L323.50,666.08 L323.70,666.21 L323.90,666.35 L324.10,666.48 L324.30,666.62 L324.50,666.75 L324.70,666.88 L324.90,667.02 L325.10,667.15 L325.30,667.28 L325.50,667.41 L325.70,667.54 L325.90,667.67 L326.10,667.80 L326.30,667.93 L326.50,668.06 L326.70,668.19 L326.90,668.31 L327.10,668.44 L327.30,668.57 L327.50,668.70 L327.70,668.82 L327.90,668.95 L328.10,669.07 L328.30,669.20 L328.50,669.32 L328.70,669.45 L328.90,669.57 L329.10,669.70 L329.30,669.82 L329.50,669.95 L329.70,670.07 L329.90,670.19 L330.10,670.32 L330.30,670.44 L330.50,670.57 L330.70,670.69 L330.90,670.81 L331.10,670.94 L331.30,671.06 L331.50,671.19 L331.70,671.31 L331.90,671.43 L332.10,671.56 L332.30,671.68 L332.50,671.81 L332.70,671.93 L332.90,672.06 L333.10,672.18 L333.30,672.31 L333.50,672.44 L333.70,672.56 L333.90,672.69 L334.10,672.81 L334.30,672.94 L334.50,673.06 L334.70,673.19 L334.90,673.31 L335.10,673.44 L335.30,673.56 L335.50,673.68 L335.70,673.80 L335.90,673.92 L336.10,674.04 L336.30,674.15 L336.50,674.27 L336.70,674.38 L336.90,674.49 L337.10,674.59 L337.30,674.70 L337.50,674.80 L337.70,674.90 L337.90,674.99 L338.10,675.08 L338.30,675.17 L338.50,675.25 L338.70,675.34 L338.90,675.41 L339.10,675.49 L339.30,675.56 L339.50,675.62 L339.70,675.68 L339.90,675.74 L340.10,675.81 L340.30,675.88 L340.50,675.94 L340.70,676.00 L340.90,676.06 L341.10,676.11 L341.30,676.16 L341.50,676.20 L341.70,676.24 L341.90,676.28 L342.10,676.31 L342.30,676.34 L342.50,676.36 L342.70,676.38 L342.90,676.40 L343.00,676.40 L343.20,660.72 L343.40,647.17 L343.60,637.87 L343.80,629.90 L344.00,623.73 L344.20,619.82 L344.40,618.29 L344.60,617.24 L344.80,616.32 L345.00,615.53 L345.20,614.85 L345.40,614.28 L345.60,613.81 L345.80,613.43 L346.00,613.13 L346.20,612.90 L346.40,612.74 L346.60,612.61 L346.80,612.49 L347.00,612.38 L347.20,612.28 L347.40,612.18 L347.60,612.09 L347.80,612.02 L348.00,611.95 L348.20,611.90 L348.40,611.86 L348.60,611.83 L348.80,611.81 L349.00,611.80 L349.20,611.83 L349.40,611.93 L349.60,612.08 L349.80,612.28 L350.00,612.51 L350.20,612.85 L350.40,613.20 L350.60,613.58 L350.80,613.96 L351.00,614.35 L351.20,614.78 L351.40,615.29 L351.60,615.85 L351.80,616.45 L352.00,617.08 L352.20,617.71 L352.40,618.34 L352.60,618.95 L352.80,619.54 L353.00,620.10 L353.20,620.62 L353.40,621.11 L353.60,621.55 L353.80,621.97 L354.00,622.37 L354.20,622.77 L354.40,623.16 L354.60,623.55 L354.80,623.93 L355.00,624.31 L355.20,624.69 L355.40,625.06 L355.60,625.42 L355.80,625.78 L356.00,626.14 L356.20,626.51 L356.40,626.88 L356.60,627.24 L356.80,627.59 L357.00,627.94 L357.20,628.28 L357.40,628.62 L357.60,628.95 L357.80,629.28 L358.00,629.60 L358.20,629.92 L358.40,630.23 L358.60,630.54 L358.80,630.85 L359.00,631.15 L359.20,631.45 L359.40,631.74 L359.60,632.04 L359.80,632.33 L360.00,632.62 L360.20,632.91 L360.40,633.19 L360.60,633.48 L360.80,633.76 L361.00,634.04 L361.20,634.32 L361.40,634.60 L361.60,634.88 L361.80,635.15 L362.00,635.43 L362.20,635.70 L362.40,635.98 L362.60,636.25 L362.80,636.52 L363.00,636.79 L363.20,637.06 L363.40,637.32 L363.60,637.59 L363.80,637.85 L364.00,638.12 L364.20,638.38 L364.40,638.64 L364.60,638.90 L364.80,639.16 L365.00,639.42 L365.20,639.68 L365.40,639.93 L365.60,640.19 L365.80,640.44 L366.00,640.69 L366.20,640.94 L366.40,641.19 L366.60,641.44 L366.80,641.69 L367.00,641.93 L367.20,642.18 L367.40,642.42 L367.60,642.66 L367.80,642.90 L368.00,643.14 L368.20,643.38 L368.40,643.62 L368.60,643.85 L368.80,644.09 L369.00,644.32 L369.20,644.55 L369.40,644.78 L369.60,645.01 L369.80,645.23 L370.00,645.46 L370.20,645.68 L370.40,645.91 L370.60,646.13 L370.80,646.35 L371.00,646.57 L371.20,646.78 L371.40,647.00 L371.60,647.21 L371.80,647.43 L372.00,647.64 L372.20,647.85 L372.40,648.06 L372.60,648.26 L372.80,648.47 L373.00,648.67 L373.20,648.88 L373.40,649.08 L373.60,649.28 L373.80,649.48 L374.00,649.67 L374.20,649.87 L374.40,650.06 L374.60,650.25 L374.80,650.45 L375.00,650.64 L375.20,650.82 L375.40,651.01 L375.60,651.20 L375.80,651.38 L376.00,651.57 L376.20,651.75 L376.40,651.93 L376.60,652.11 L376.80,652.29 L377.00,652.46 L377.20,652.64 L377.40,652.82 L377.60,652.99 L377.80,653.16 L378.00,653.33 L378.20,653.51 L378.40,653.68 L378.60,653.84 L378.80,654.01 L379.00,654.18 L379.20,654.35 L379.40,654.51 L379.60,654.68 L379.80,654.84 L380.00,655.00 L380.20,655.17 L380.40,655.33 L380.60,655.49 L380.80,655.65 L381.00,655.81 L381.20,655.97 L381.40,656.13 L381.60,656.29 L381.80,656.45 L382.00,656.61 L382.20,656.76 L382.40,656.92 L382.60,657.08 L382.80,657.24 L383.00,657.39 L383.20,657.55 L383.40,657.70 L383.60,657.86 L383.80,658.02 L384.00,658.17 L384.20,658.33 L384.40,658.48 L384.60,658.64 L384.80,658.79 L385.00,658.95 L385.20,659.10 L385.40,659.26 L385.60,659.41 L385.80,659.57 L386.00,659.72 L386.20,659.88 L386.40,660.03 L386.60,660.19 L386.80,660.34 L387.00,660.50 L387.20,660.65 L387.40,660.81 L387.60,660.96 L387.80,661.12 L388.00,661.27 L388.20,661.43 L388.40,661.58 L388.60,661.73 L388.80,661.89 L389.00,662.04 L389.20,662.19 L389.40,662.35 L389.60,662.50 L389.80,662.65 L390.00,662.80 L390.20,662.96 L390.40,663.11 L390.60,663.26 L390.80,663.41 L391.00,663.56 L391.20,663.71 L391.40,663.85 L391.60,664.00 L391.80,664.15 L392.00,664.30 L392.20,664.44 L392.40,664.59 L392.60,664.73 L392.80,664.88 L393.00,665.02 L393.20,665.16 L393.40,665.30 L393.60,665.45 L393.80,665.59 L394.00,665.73 L394.20,665.87 L394.40,666.00 L394.60,666.14 L394.80,666.28 L395.00,666.42 L395.20,666.55 L395.40,666.69 L395.60,666.82 L395.80,666.96 L396.00,667.09 L396.20,667.22 L396.40,667.35 L396.60,667.49 L396.80,667.62 L397.00,667.75 L397.20,667.88 L397.40,668.01 L397.60,668.14 L397.80,668.27 L398.00,668.39 L398.20,668.52 L398.40,668.65 L398.60,668.77 L398.80,668.90 L399.00,669.03 L399.20,669.15 L399.40,669.27 L399.60,669.40 L399.80,669.52 L400.00,669.65 L400.20,669.77 L400.40,669.89 L400.60,670.01 L400.80,670.13 L401.00,670.25 L401.20,670.38 L401.40,670.50 L401.60,670.61 L401.80,670.73 L402.00,670.85 L402.20,670.97 L402.40,671.09 L402.60,671.21 L402.80,671.32 L403.00,671.44 L403.20,671.56 L403.40,671.67 L403.60,671.79 L403.80,671.90 L404.00,672.02 L404.20,672.13 L404.40,672.25 L404.60,672.36 L404.80,672.48 L405.00,672.59 L405.20,672.70 L405.40,672.82 L405.60,672.93 L405.80,673.04 L406.00,673.16 L406.20,673.27 L406.40,673.38 L406.60,673.49 L406.80,673.61 L407.00,673.72 L407.20,673.83 L407.40,673.94 L407.60,674.06 L407.80,674.17 L408.00,674.28 L408.20,674.40 L408.40,674.51 L408.60,674.62 L408.80,674.74 L409.00,674.85 L409.20,674.96 L409.40,675.08 L409.60,675.19 L409.80,675.31 L410.00,675.42 L410.20,675.54 L410.40,675.65 L410.60,675.77 L410.80,675.88 L411.00,675.99 L411.20,676.11 L411.40,676.22 L411.60,676.33 L411.80,676.45 L412.00,676.56 L412.20,676.67 L412.40,676.78 L412.60,676.89 L412.80,676.99 L413.00,677.10 L413.20,677.20 L413.40,677.30 L413.60,677.40 L413.80,677.49 L414.00,677.59 L414.20,677.68 L414.40,677.77 L414.60,677.85 L414.80,677.93 L415.00,678.01 L415.20,678.08 L415.40,678.16 L415.60,678.23 L415.80,678.29 L416.00,678.35 L416.20,678.41 L416.40,678.47 L416.60,678.52 L416.80,678.58 L417.00,678.64 L417.20,678.69 L417.40,678.75 L417.60,678.80 L417.80,678.84 L418.00,678.88 L418.20,678.92 L418.40,678.96 L418.60,678.99 L418.80,679.02 L419.00,679.04 L419.20,679.07 L419.40,679.08 L419.60,679.10 L419.70,679.10 L419.90,661.90 L420.10,647.73 L420.30,638.50 L420.50,630.75 L420.70,624.84 L420.90,621.13 L421.10,619.64 L421.30,618.62 L421.50,617.72 L421.70,616.95 L421.90,616.28 L422.10,615.73 L422.30,615.27 L422.50,614.89 L422.70,614.60 L422.90,614.38 L423.10,614.22 L423.30,614.10 L423.50,613.98 L423.70,613.87 L423.90,613.76 L424.10,613.67 L424.30,613.59 L424.50,613.51 L424.70,613.45 L424.90,613.40 L425.10,613.36 L425.30,613.32 L425.50,613.31 L425.70,613.30 L425.90,613.33 L426.10,613.43 L426.30,613.57 L426.50,613.77 L426.70,614.00 L426.90,614.32 L427.10,614.67 L427.30,615.04 L427.50,615.41 L427.70,615.79 L427.90,616.21 L428.10,616.71 L428.30,617.26 L428.50,617.85 L428.70,618.46 L428.90,619.08 L429.10,619.69 L429.30,620.29 L429.50,620.87 L429.70,621.41 L429.90,621.92 L430.10,622.40 L430.30,622.84 L430.50,623.24 L430.70,623.63 L430.90,624.02 L431.10,624.41 L431.30,624.79 L431.50,625.16 L431.70,625.53 L431.90,625.90 L432.10,626.26 L432.30,626.62 L432.50,626.97 L432.70,627.32 L432.90,627.69 L433.10,628.04 L433.30,628.40 L433.50,628.74 L433.70,629.08 L433.90,629.42 L434.10,629.75 L434.30,630.07 L434.50,630.39 L434.70,630.70 L434.90,631.01 L435.10,631.32 L435.30,631.62 L435.50,631.92 L435.70,632.22 L435.90,632.51 L436.10,632.80 L436.30,633.09 L436.50,633.37 L436.70,633.66 L436.90,633.94 L437.10,634.22 L437.30,634.50 L437.50,634.77 L437.70,635.05 L437.90,635.32 L438.10,635.59 L438.30,635.86 L438.50,636.13 L438.70,636.40 L438.90,636.67 L439.10,636.94 L439.30,637.20 L439.50,637.47 L439.70,637.73 L439.90,637.99 L440.10,638.25 L440.30,638.51 L440.50,638.77 L440.70,639.03 L440.90,639.29 L441.10,639.54 L441.30,639.80 L441.50,640.05 L441.70,640.30 L441.90,640.55 L442.10,640.80 L442.30,641.05 L442.50,641.30 L442.70,641.55 L442.90,641.79 L443.10,642.04 L443.30,642.28 L443.50,642.52 L443.70,642.76 L443.90,643.00 L444.10,643.24 L444.30,643.47 L444.50,643.71 L444.70,643.94 L444.90,644.18 L445.10,644.41 L445.30,644.64 L445.50,644.87 L445.70,645.09 L445.90,645.32 L446.10,645.54 L446.30,645.77 L446.50,645.99 L446.70,646.21 L446.90,646.43 L447.10,646.65 L447.30,646.86 L447.50,647.08 L447.70,647.29 L447.90,647.50 L448.10,647.72 L448.30,647.93 L448.50,648.13 L448.70,648.34 L448.90,648.55 L449.10,648.75 L449.30,648.95 L449.50,649.15 L449.70,649.35 L449.90,649.55 L450.10,649.75 L450.30,649.94 L450.50,650.14 L450.70,650.33 L450.90,650.52 L451.10,650.71 L451.30,650.90 L451.50,651.08 L451.70,651.27 L451.90,651.45 L452.10,651.64 L452.30,651.82 L452.50,652.00 L452.70,652.18 L452.90,652.36 L453.10,652.53 L453.30,652.71 L453.50,652.88 L453.70,653.06 L453.90,653.23 L454.10,653.40 L454.30,653.57 L454.50,653.74 L454.70,653.91 L454.90,654.08 L455.10,654.24 L455.30,654.41 L455.50,654.57 L455.70,654.74 L455.90,654.90 L456.10,655.06 L456.30,655.22 L456.50,655.38 L456.70,655.54 L456.90,655.70 L457.10,655.86 L457.30,656.02 L457.50,656.17 L457.70,656.33 L457.90,656.49 L458.10,656.64 L458.30,656.80 L458.50,656.95 L458.70,657.11 L458.90,657.26 L459.10,657.42 L459.30,657.57 L459.50,657.72 L459.70,657.88 L459.90,658.03 L460.10,658.18 L460.30,658.33 L460.50,658.49 L460.70,658.64 L460.90,658.79 L461.10,658.94 L461.30,659.09 L461.50,659.25 L461.70,659.40 L461.90,659.55 L462.10,659.70 L462.30,659.85 L462.50,660.00 L462.70,660.16 L462.90,660.31 L463.10,660.46 L463.30,660.61 L463.50,660.76 L463.70,660.91 L463.90,661.06 L464.10,661.22 L464.30,661.37 L464.50,661.52 L464.70,661.67 L464.90,661.82 L465.10,661.97 L465.30,662.12 L465.50,662.27 L465.70,662.42 L465.90,662.57 L466.10,662.72 L466.30,662.87 L466.50,663.02 L466.70,663.17 L466.90,663.32 L467.10,663.46 L467.30,663.61 L467.50,663.76 L467.70,663.90 L467.90,664.05 L468.10,664.19 L468.30,664.34 L468.50,664.48 L468.70,664.63 L468.90,664.77 L469.10,664.91 L469.30,665.05 L469.50,665.19 L469.70,665.33 L469.90,665.47 L470.10,665.61 L470.30,665.75 L470.50,665.89 L470.70,666.02 L470.90,666.16 L471.10,666.30 L471.30,666.43 L471.50,666.56 L471.70,666.70 L471.90,666.83 L472.10,666.96 L472.30,667.10 L472.50,667.23 L472.70,667.36 L472.90,667.49 L473.10,667.62 L473.30,667.75 L473.50,667.87 L473.70,668.00 L473.90,668.13 L474.10,668.25 L474.30,668.38 L474.50,668.51 L474.70,668.63 L474.90,668.76 L475.10,668.88 L475.30,669.00 L475.50,669.13 L475.70,669.25 L475.90,669.37 L476.10,669.49 L476.30,669.62 L476.50,669.74 L476.70,669.86 L476.90,669.98 L477.10,670.10 L477.30,670.22 L477.50,670.33 L477.70,670.45 L477.90,670.57 L478.10,670.69 L478.30,670.80 L478.50,670.92 L478.70,671.04 L478.90,671.15 L479.10,671.27 L479.30,671.38 L479.50,671.50 L479.70,671.61 L479.90,671.73 L480.10,671.84 L480.30,671.95 L480.50,672.06 L480.70,672.18 L480.90,672.29 L481.10,672.40 L481.30,672.51 L481.50,672.62 L481.70,672.73 L481.90,672.85 L482.10,672.96 L482.30,673.07 L482.50,673.18 L482.70,673.29 L482.90,673.40 L483.10,673.51 L483.30,673.62 L483.50,673.73 L483.70,673.84 L483.90,673.95 L484.10,674.06 L484.30,674.17 L484.50,674.28 L484.70,674.39 L484.90,674.50 L485.10,674.61 L485.30,674.72 L485.50,674.83 L485.70,674.94 L485.90,675.06 L486.10,675.17 L486.30,675.28 L486.50,675.39 L486.70,675.50 L486.90,675.62 L487.10,675.73 L487.30,675.84 L487.50,675.95 L487.70,676.06 L487.90,676.17 L488.10,676.29 L488.30,676.40 L488.50,676.51 L488.70,676.62 L488.90,676.72 L489.10,676.83 L489.30,676.94 L489.50,677.04 L489.70,677.14 L489.90,677.24 L490.10,677.34 L490.30,677.44 L490.50,677.53 L490.70,677.62 L490.90,677.71 L491.10,677.79 L491.30,677.88 L491.50,677.96 L491.70,678.03 L491.90,678.11 L492.10,678.18 L492.30,678.24 L492.50,678.31 L492.70,678.37 L492.90,678.43 L493.10,678.48 L493.30,678.53 L493.50,678.59 L493.70,678.65 L493.90,678.70 L494.10,678.75 L494.30,678.80 L494.50,678.85 L494.70,678.89 L494.90,678.93 L495.10,678.96 L495.30,678.99 L495.50,679.02 L495.70,679.05 L495.90,679.07 L496.10,679.08 L496.30,679.10 L496.40,679.10 L496.60,661.90 L496.80,647.73 L497.00,638.50 L497.20,630.75 L497.40,624.84 L497.60,621.13 L497.80,619.64 L498.00,618.62 L498.20,617.72 L498.40,616.95 L498.60,616.28 L498.80,615.73 L499.00,615.27 L499.20,614.89 L499.40,614.60 L499.60,614.38 L499.80,614.22 L500.00,614.10 L500.20,613.98 L500.40,613.87 L500.60,613.76 L500.80,613.67 L501.00,613.59 L501.20,613.51 L501.40,613.45 L501.60,613.40 L501.80,613.36 L502.00,613.32 L502.20,613.31 L502.40,613.30 L502.60,613.33 L502.80,613.43 L503.00,613.57 L503.20,613.77 L503.40,614.00 L503.60,614.32 L503.80,614.67 L504.00,615.04 L504.20,615.41 L504.40,615.79 L504.60,616.21 L504.80,616.70 L505.00,617.25 L505.20,617.84 L505.40,618.44 L505.60,619.06 L505.80,619.67 L506.00,620.26 L506.20,620.84 L506.40,621.38 L506.60,621.90 L506.80,622.37 L507.00,622.81 L507.20,623.21 L507.40,623.61 L507.60,624.00 L507.80,624.38 L508.00,624.76 L508.20,625.13 L508.40,625.50 L508.60,625.87 L508.80,626.23 L509.00,626.59 L509.20,626.94 L509.40,627.29 L509.60,627.66 L509.80,628.01 L510.00,628.37 L510.20,628.71 L510.40,629.05 L510.60,629.39 L510.80,629.72 L511.00,630.04 L511.20,630.36 L511.40,630.67 L511.60,630.98 L511.80,631.29 L512.00,631.59 L512.20,631.89 L512.40,632.19 L512.60,632.48 L512.80,632.77 L513.00,633.06 L513.20,633.34 L513.40,633.62 L513.60,633.91 L513.80,634.19 L514.00,634.46 L514.20,634.74 L514.40,635.01 L514.60,635.29 L514.80,635.56 L515.00,635.83 L515.20,636.10 L515.40,636.37 L515.60,636.64 L515.80,636.90 L516.00,637.17 L516.20,637.43 L516.40,637.70 L516.60,637.96 L516.80,638.22 L517.00,638.48 L517.20,638.74 L517.40,639.00 L517.60,639.25 L517.80,639.51 L518.00,639.76 L518.20,640.02 L518.40,640.27 L518.60,640.52 L518.80,640.77 L519.00,641.02 L519.20,641.26 L519.40,641.51 L519.60,641.76 L519.80,642.00 L520.00,642.24 L520.20,642.48 L520.40,642.72 L520.60,642.96 L520.80,643.20 L521.00,643.44 L521.20,643.67 L521.40,643.91 L521.60,644.14 L521.80,644.37 L522.00,644.60 L522.20,644.83 L522.40,645.06 L522.60,645.28 L522.80,645.51 L523.00,645.73 L523.20,645.95 L523.40,646.17 L523.60,646.39 L523.80,646.61 L524.00,646.83 L524.20,647.04 L524.40,647.25 L524.60,647.47 L524.80,647.68 L525.00,647.89 L525.20,648.09 L525.40,648.30 L525.60,648.51 L525.80,648.71 L526.00,648.91 L526.20,649.11 L526.40,649.31 L526.60,649.51 L526.80,649.71 L527.00,649.90 L527.20,650.10 L527.40,650.29 L527.60,650.48 L527.80,650.67 L528.00,650.86 L528.20,651.05 L528.40,651.23 L528.60,651.42 L528.80,651.60 L529.00,651.78 L529.20,651.96 L529.40,652.14 L529.60,652.32 L529.80,652.50 L530.00,652.67 L530.20,652.85 L530.40,653.02 L530.60,653.19 L530.80,653.36 L531.00,653.53 L531.20,653.70 L531.40,653.87 L531.60,654.04 L531.80,654.20 L532.00,654.37 L532.20,654.53 L532.40,654.70 L532.60,654.86 L532.80,655.02 L533.00,655.18 L533.20,655.34 L533.40,655.50 L533.60,655.66 L533.80,655.82 L534.00,655.98 L534.20,656.14 L534.40,656.29 L534.60,656.45 L534.80,656.60 L535.00,656.76 L535.20,656.92 L535.40,657.07 L535.60,657.22 L535.80,657.38 L536.00,657.53 L536.20,657.68 L536.40,657.84 L536.60,657.99 L536.80,658.14 L537.00,658.29 L537.20,658.45 L537.40,658.60 L537.60,658.75 L537.80,658.90 L538.00,659.05 L538.20,659.20 L538.40,659.36 L538.60,659.51 L538.80,659.66 L539.00,659.81 L539.20,659.96 L539.40,660.11 L539.60,660.26 L539.80,660.42 L540.00,660.57 L540.20,660.72 L540.40,660.87 L540.60,661.02 L540.80,661.17 L541.00,661.32 L541.20,661.47 L541.40,661.62 L541.60,661.78 L541.80,661.93 L542.00,662.08 L542.20,662.23 L542.40,662.38 L542.60,662.53 L542.80,662.68 L543.00,662.82 L543.20,662.97 L543.40,663.12 L543.60,663.27 L543.80,663.42 L544.00,663.56 L544.20,663.71 L544.40,663.86 L544.60,664.00 L544.80,664.15 L545.00,664.29 L545.20,664.44 L545.40,664.58 L545.60,664.72 L545.80,664.87 L546.00,665.01 L546.20,665.15 L546.40,665.29 L546.60,665.43 L546.80,665.57 L547.00,665.70 L547.20,665.84 L547.40,665.98 L547.60,666.12 L547.80,666.25 L548.00,666.39 L548.20,666.52 L548.40,666.65 L548.60,666.79 L548.80,666.92 L549.00,667.05 L549.20,667.18 L549.40,667.31 L549.60,667.44 L549.80,667.57 L550.00,667.70 L550.20,667.83 L550.40,667.96 L550.60,668.08 L550.80,668.21 L551.00,668.34 L551.20,668.46 L551.40,668.59 L551.60,668.71 L551.80,668.84 L552.00,668.96 L552.20,669.08 L552.40,669.21 L552.60,669.33 L552.80,669.45 L553.00,669.57 L553.20,669.69 L553.40,669.81 L553.60,669.93 L553.80,670.05 L554.00,670.17 L554.20,670.29 L554.40,670.41 L554.60,670.53 L554.80,670.64 L555.00,670.76 L555.20,670.88 L555.40,670.99 L555.60,671.11 L555.80,671.22 L556.00,671.34 L556.20,671.45 L556.40,671.57 L556.60,671.68 L556.80,671.79 L557.00,671.91 L557.20,672.02 L557.40,672.13 L557.60,672.24 L557.80,672.36 L558.00,672.47 L558.20,672.58 L558.40,672.69 L558.60,672.80 L558.80,672.91 L559.00,673.02 L559.20,673.13 L559.40,673.24 L559.60,673.35 L559.80,673.46 L560.00,673.57 L560.20,673.68 L560.40,673.79 L560.60,673.90 L560.80,674.01 L561.00,674.12 L561.20,674.23 L561.40,674.34 L561.60,674.45 L561.80,674.56 L562.00,674.67 L562.20,674.79 L562.40,674.90 L562.60,675.01 L562.80,675.12 L563.00,675.23 L563.20,675.34 L563.40,675.45 L563.60,675.57 L563.80,675.68 L564.00,675.79 L564.20,675.90 L564.40,676.01 L564.60,676.13 L564.80,676.24 L565.00,676.35 L565.20,676.46 L565.40,676.57 L565.60,676.67 L565.80,676.78 L566.00,676.89 L566.20,676.99 L566.40,677.10 L566.60,677.20 L566.80,677.30 L567.00,677.39 L567.20,677.49 L567.40,677.58 L567.60,677.67 L567.80,677.76 L568.00,677.84 L568.20,677.92 L568.40,678.00 L568.60,678.07 L568.80,678.15 L569.00,678.21 L569.20,678.28 L569.40,678.34 L569.60,678.40 L569.80,678.46 L570.00,678.51 L570.20,678.56 L570.40,678.62 L570.60,678.68 L570.80,678.73 L571.00,678.78 L571.20,678.83 L571.40,678.87 L571.60,678.91 L571.80,678.94 L572.00,678.98 L572.20,679.01 L572.40,679.03 L572.60,679.06 L572.80,679.08 L573.00,679.09 L573.20,679.10 L573.20,679.10 L573.40,661.90 L573.60,647.73 L573.80,638.50 L574.00,630.75 L574.20,624.84 L574.40,621.13 L574.60,619.64 L574.80,618.62 L575.00,617.72 L575.20,616.95 L575.40,616.28 L575.60,615.73 L575.80,615.27 L576.00,614.89 L576.20,614.60 L576.40,614.38 L576.60,614.22 L576.80,614.10 L577.00,613.98 L577.20,613.87 L577.40,613.76 L577.60,613.67 L577.80,613.59 L578.00,613.51 L578.20,613.45 L578.40,613.40 L578.60,613.36 L578.80,613.32 L579.00,613.31 L579.20,613.30 L579.40,613.33 L579.60,613.43 L579.80,613.57 L580.00,613.76 L580.20,613.99 L580.40,614.32 L580.60,614.67 L580.80,615.04 L581.00,615.41 L581.20,615.80 L581.40,616.23 L581.60,616.73 L581.80,617.30 L582.00,617.90 L582.20,618.52 L582.40,619.16 L582.60,619.78 L582.80,620.39 L583.00,620.97 L583.20,621.53 L583.40,622.04 L583.60,622.51 L583.80,622.95 L584.00,623.35 L584.20,623.74 L584.40,624.13 L584.60,624.52 L584.80,624.90 L585.00,625.28 L585.20,625.65 L585.40,626.02 L585.60,626.38 L585.80,626.74 L586.00,627.09 L586.20,627.44 L586.40,627.81 L586.60,628.17 L586.80,628.52 L587.00,628.86 L587.20,629.21 L587.40,629.54 L587.60,629.87 L587.80,630.19 L588.00,630.51 L588.20,630.83 L588.40,631.14 L588.60,631.44 L588.80,631.75 L589.00,632.05 L589.20,632.34 L589.40,632.64 L589.60,632.93 L589.80,633.21 L590.00,633.50 L590.20,633.78 L590.40,634.07 L590.60,634.35 L590.80,634.62 L591.00,634.90 L591.20,635.18 L591.40,635.45 L591.60,635.72 L591.80,636.00 L592.00,636.27 L592.20,636.54 L592.40,636.80 L592.60,637.07 L592.80,637.34 L593.00,637.60 L593.20,637.87 L593.40,638.13 L593.60,638.39 L593.80,638.65 L594.00,638.91 L594.20,639.17 L594.40,639.43 L594.60,639.68 L594.80,639.94 L595.00,640.19 L595.20,640.45 L595.40,640.70 L595.60,640.95 L595.80,641.20 L596.00,641.45 L596.20,641.69 L596.40,641.94 L596.60,642.18 L596.80,642.43 L597.00,642.67 L597.20,642.91 L597.40,643.15 L597.60,643.39 L597.80,643.63 L598.00,643.86 L598.20,644.10 L598.40,644.33 L598.60,644.56 L598.80,644.79 L599.00,645.02 L599.20,645.25 L599.40,645.47 L599.60,645.70 L599.80,645.92 L600.00,646.14 L600.20,646.36 L600.40,646.58 L600.60,646.80 L600.80,647.02 L601.00,647.23 L601.20,647.45 L601.40,647.66 L601.60,647.87 L601.80,648.08 L602.00,648.29 L602.20,648.49 L602.40,648.70 L602.60,648.90 L602.80,649.11 L603.00,649.31 L603.20,649.51 L603.40,649.70 L603.60,649.90 L603.80,650.10 L604.00,650.29 L604.20,650.48 L604.40,650.67 L604.60,650.86 L604.80,651.05 L605.00,651.24 L605.20,651.42 L605.40,651.61 L605.60,651.79 L605.80,651.97 L606.00,652.15 L606.20,652.33 L606.40,652.51 L606.60,652.69 L606.80,652.86 L607.00,653.04 L607.20,653.21 L607.40,653.38 L607.60,653.55 L607.80,653.72 L608.00,653.89 L608.20,654.06 L608.40,654.23 L608.60,654.39 L608.80,654.56 L609.00,654.72 L609.20,654.89 L609.40,655.05 L609.60,655.21 L609.80,655.38 L610.00,655.54 L610.20,655.70 L610.40,655.86 L610.60,656.01 L610.80,656.17 L611.00,656.33 L611.20,656.49 L611.40,656.64 L611.60,656.80 L611.80,656.96 L612.00,657.11 L612.20,657.27 L612.40,657.42 L612.60,657.57 L612.80,657.73 L613.00,657.88 L613.20,658.04 L613.40,658.19 L613.60,658.34 L613.80,658.50 L614.00,658.65 L614.20,658.80 L614.40,658.95 L614.60,659.11 L614.80,659.26 L615.00,659.41 L615.20,659.56 L615.40,659.72 L615.60,659.87 L615.80,660.02 L616.00,660.17 L616.20,660.33 L616.40,660.48 L616.60,660.63 L616.80,660.78 L617.00,660.94 L617.20,661.09 L617.40,661.24 L617.60,661.39 L617.80,661.54 L618.00,661.69 L618.20,661.85 L618.40,662.00 L618.60,662.15 L618.80,662.30 L619.00,662.45 L619.20,662.60 L619.40,662.75 L619.60,662.90 L619.80,663.05 L620.00,663.20 L620.20,663.35 L620.40,663.50 L620.60,663.65 L620.80,663.79 L621.00,663.94 L621.20,664.09 L621.40,664.23 L621.60,664.38 L621.80,664.52 L622.00,664.67 L622.20,664.81 L622.40,664.95 L622.60,665.09 L622.80,665.23 L623.00,665.38 L623.20,665.52 L623.40,665.65 L623.60,665.79 L623.80,665.93 L624.00,666.07 L624.20,666.21 L624.40,666.34 L624.60,666.48 L624.80,666.61 L625.00,666.75 L625.20,666.88 L625.40,667.01 L625.60,667.14 L625.80,667.28 L626.00,667.41 L626.20,667.54 L626.40,667.67 L626.60,667.80 L626.80,667.92 L627.00,668.05 L627.20,668.18 L627.40,668.31 L627.60,668.43 L627.80,668.56 L628.00,668.69 L628.20,668.81 L628.40,668.94 L628.60,669.06 L628.80,669.18 L629.00,669.31 L629.20,669.43 L629.40,669.55 L629.60,669.67 L629.80,669.79 L630.00,669.91 L630.20,670.04 L630.40,670.16 L630.60,670.27 L630.80,670.39 L631.00,670.51 L631.20,670.63 L631.40,670.75 L631.60,670.87 L631.80,670.98 L632.00,671.10 L632.20,671.22 L632.40,671.33 L632.60,671.45 L632.80,671.56 L633.00,671.68 L633.20,671.79 L633.40,671.90 L633.60,672.02 L633.80,672.13 L634.00,672.24 L634.20,672.36 L634.40,672.47 L634.60,672.58 L634.80,672.69 L635.00,672.80 L635.20,672.91 L635.40,673.03 L635.60,673.14 L635.80,673.25 L636.00,673.36 L636.20,673.47 L636.40,673.58 L636.60,673.69 L636.80,673.80 L637.00,673.91 L637.20,674.02 L637.40,674.13 L637.60,674.24 L637.80,674.36 L638.00,674.47 L638.20,674.58 L638.40,674.69 L638.60,674.80 L638.80,674.91 L639.00,675.03 L639.20,675.14 L639.40,675.25 L639.60,675.36 L639.80,675.47 L640.00,675.59 L640.20,675.70 L640.40,675.81 L640.60,675.93 L640.80,676.04 L641.00,676.15 L641.20,676.26 L641.40,676.37 L641.60,676.48 L641.80,676.59 L642.00,676.70 L642.20,676.81 L642.40,676.91 L642.60,677.02 L642.80,677.12 L643.00,677.22 L643.20,677.32 L643.40,677.42 L643.60,677.51 L643.80,677.61 L644.00,677.69 L644.20,677.78 L644.40,677.86 L644.60,677.94 L644.80,678.02 L645.00,678.10 L645.20,678.17 L645.40,678.24 L645.60,678.30 L645.80,678.36 L646.00,678.42 L646.20,678.47 L646.40,678.53 L646.60,678.58 L646.80,678.64 L647.00,678.70 L647.20,678.75 L647.40,678.80 L647.60,678.84 L647.80,678.89 L648.00,678.92 L648.20,678.96 L648.40,678.99 L648.60,679.02 L648.80,679.05 L649.00,679.07 L649.20,679.08 L649.40,679.10 L649.50,679.10 L649.70,661.90 L649.90,647.73 L650.10,638.50 L650.30,630.75 L650.50,624.84 L650.70,621.13 L650.90,619.64 L651.10,618.62 L651.30,617.72 L651.50,616.95 L651.70,616.28 L651.90,615.73 L652.10,615.27 L652.30,614.89 L652.50,614.60 L652.70,614.38 L652.90,614.22 L653.10,614.10 L653.30,613.98 L653.50,613.87 L653.70,613.76 L653.90,613.67 L654.10,613.59 L654.30,613.51 L654.50,613.45 L654.70,613.40 L654.90,613.36 L655.10,613.32 L655.30,613.31 L655.50,613.30 L655.70,613.33 L655.90,613.43 L656.10,613.57 L656.30,613.77 L656.50,614.00 L656.70,614.32 L656.90,614.67 L657.10,615.04 L657.30,615.41 L657.50,615.79 L657.70,616.20 L657.90,616.70 L658.10,617.24 L658.30,617.82 L658.50,618.43 L658.70,619.04 L658.90,619.64 L659.10,620.24 L659.30,620.81 L659.50,621.35 L659.70,621.87 L659.90,622.34 L660.10,622.78 L660.30,623.19 L660.50,623.58 L660.70,623.97 L660.90,624.35 L661.10,624.73 L661.30,625.10 L661.50,625.47 L661.70,625.84 L661.90,626.20 L662.10,626.56 L662.30,626.91 L662.50,627.26 L662.70,627.63 L662.90,627.98 L663.10,628.34 L663.30,628.68 L663.50,629.02 L663.70,629.36 L663.90,629.68 L664.10,630.01 L664.30,630.33 L664.50,630.64 L664.70,630.95 L664.90,631.26 L665.10,631.56 L665.30,631.86 L665.50,632.15 L665.70,632.45 L665.90,632.74 L666.10,633.02 L666.30,633.31 L666.50,633.59 L666.70,633.87 L666.90,634.15 L667.10,634.43 L667.30,634.71 L667.50,634.98 L667.70,635.26 L667.90,635.53 L668.10,635.80 L668.30,636.07 L668.50,636.34 L668.70,636.60 L668.90,636.87 L669.10,637.13 L669.30,637.40 L669.50,637.66 L669.70,637.92 L669.90,638.18 L670.10,638.44 L670.30,638.70 L670.50,638.96 L670.70,639.22 L670.90,639.47 L671.10,639.73 L671.30,639.98 L671.50,640.23 L671.70,640.48 L671.90,640.73 L672.10,640.98 L672.30,641.23 L672.50,641.47 L672.70,641.72 L672.90,641.96 L673.10,642.21 L673.30,642.45 L673.50,642.69 L673.70,642.93 L673.90,643.16 L674.10,643.40 L674.30,643.63 L674.50,643.87 L674.70,644.10 L674.90,644.33 L675.10,644.56 L675.30,644.79 L675.50,645.02 L675.70,645.24 L675.90,645.47 L676.10,645.69 L676.30,645.91 L676.50,646.13 L676.70,646.35 L676.90,646.57 L677.10,646.79 L677.30,647.00 L677.50,647.22 L677.70,647.43 L677.90,647.64 L678.10,647.85 L678.30,648.06 L678.50,648.26 L678.70,648.47 L678.90,648.67 L679.10,648.87 L679.30,649.07 L679.50,649.27 L679.70,649.47 L679.90,649.67 L680.10,649.86 L680.30,650.06 L680.50,650.25 L680.70,650.44 L680.90,650.63 L681.10,650.82 L681.30,651.01 L681.50,651.19 L681.70,651.38 L681.90,651.56 L682.10,651.74 L682.30,651.92 L682.50,652.10 L682.70,652.28 L682.90,652.46 L683.10,652.63 L683.30,652.81 L683.50,652.98 L683.70,653.15 L683.90,653.33 L684.10,653.50 L684.30,653.66 L684.50,653.83 L684.70,654.00 L684.90,654.17 L685.10,654.33 L685.30,654.50 L685.50,654.66 L685.70,654.82 L685.90,654.98 L686.10,655.15 L686.30,655.31 L686.50,655.47 L686.70,655.62 L686.90,655.78 L687.10,655.94 L687.30,656.10 L687.50,656.25 L687.70,656.41 L687.90,656.57 L688.10,656.72 L688.30,656.88 L688.50,657.03 L688.70,657.18 L688.90,657.34 L689.10,657.49 L689.30,657.64 L689.50,657.80 L689.70,657.95 L689.90,658.10 L690.10,658.25 L690.30,658.41 L690.50,658.56 L690.70,658.71 L690.90,658.86 L691.10,659.01 L691.30,659.16 L691.50,659.31 L691.70,659.47 L691.90,659.62 L692.10,659.77 L692.30,659.92 L692.50,660.07 L692.70,660.22 L692.90,660.37 L693.10,660.52 L693.30,660.67 L693.50,660.83 L693.70,660.98 L693.90,661.13 L694.10,661.28 L694.30,661.43 L694.50,661.58 L694.70,661.73 L694.90,661.88 L695.10,662.03 L695.30,662.18 L695.50,662.33 L695.70,662.48 L695.90,662.63 L696.10,662.78 L696.30,662.93 L696.50,663.08 L696.70,663.22 L696.90,663.37 L697.10,663.52 L697.30,663.67 L697.50,663.81 L697.70,663.96 L697.90,664.10 L698.10,664.25 L698.30,664.39 L698.50,664.53 L698.70,664.68 L698.90,664.82 L699.10,664.96 L699.30,665.10 L699.50,665.24 L699.70,665.38 L699.90,665.52 L700.10,665.66 L700.30,665.80 L700.50,665.93 L700.70,666.07 L700.90,666.21 L701.10,666.34 L701.30,666.47 L701.50,666.61 L701.70,666.74 L701.90,666.87 L702.10,667.01 L702.30,667.14 L702.50,667.27 L702.70,667.40 L702.90,667.53 L703.10,667.66 L703.30,667.78 L703.50,667.91 L703.70,668.04 L703.90,668.17 L704.10,668.29 L704.30,668.42 L704.50,668.54 L704.70,668.67 L704.90,668.79 L705.10,668.91 L705.30,669.04 L705.50,669.16 L705.70,669.28 L705.90,669.40 L706.10,669.53 L706.30,669.65 L706.50,669.77 L706.70,669.89 L706.90,670.01 L707.10,670.13 L707.30,670.24 L707.50,670.36 L707.70,670.48 L707.90,670.60 L708.10,670.72 L708.30,670.83 L708.50,670.95 L708.70,671.06 L708.90,671.18 L709.10,671.29 L709.30,671.41 L709.50,671.52 L709.70,671.64 L709.90,671.75 L710.10,671.86 L710.30,671.98 L710.50,672.09 L710.70,672.20 L710.90,672.31 L711.10,672.42 L711.30,672.53 L711.50,672.65 L711.70,672.76 L711.90,672.87 L712.10,672.98 L712.30,673.09 L712.50,673.20 L712.70,673.31 L712.90,673.42 L713.10,673.53 L713.30,673.64 L713.50,673.75 L713.70,673.86 L713.90,673.97 L714.10,674.08 L714.30,674.19 L714.50,674.30 L714.70,674.41 L714.90,674.52 L715.10,674.63 L715.30,674.74 L715.50,674.85 L715.70,674.96 L715.90,675.07 L716.10,675.18 L716.30,675.29 L716.50,675.41 L716.70,675.52 L716.90,675.63 L717.10,675.74 L717.30,675.85 L717.50,675.96 L717.70,676.08 L717.90,676.19 L718.10,676.30 L718.30,676.41 L718.50,676.52 L718.70,676.63 L718.90,676.73 L719.10,676.84 L719.30,676.95 L719.50,677.05 L719.70,677.15 L719.90,677.25 L720.10,677.35 L720.30,677.44 L720.50,677.54 L720.70,677.63 L720.90,677.72 L721.10,677.80 L721.30,677.88 L721.50,677.96 L721.70,678.04 L721.90,678.11 L722.10,678.18 L722.30,678.25 L722.50,678.31 L722.70,678.37 L722.90,678.43 L723.10,678.48 L723.30,678.54 L723.50,678.59 L723.70,678.65 L723.90,678.70 L724.10,678.76 L724.30,678.80 L724.50,678.85 L724.70,678.89 L724.90,678.93 L725.10,678.96 L725.30,678.99 L725.50,679.02 L725.70,679.05 L725.90,679.07 L726.10,679.08 L726.30,679.10 L726.40,679.10 L726.60,661.90 L726.80,647.73 L727.00,638.50 L727.20,630.75 L727.40,624.84 L727.60,621.13 L727.80,619.64 L728.00,618.62 L728.20,617.72 L728.40,616.95 L728.60,616.28 L728.80,615.73 L729.00,615.27 L729.20,614.89 L729.40,614.60 L729.60,614.38 L729.80,614.22 L730.00,614.10 L730.20,613.98 L730.40,613.87 L730.60,613.76 L730.80,613.67 L731.00,613.59 L731.20,613.51 L731.40,613.45 L731.60,613.40 L731.80,613.36 L732.00,613.32 L732.20,613.31 L732.40,613.30 L732.60,613.33 L732.80,613.43 L733.00,613.57 L733.20,613.77 L733.40,614.00 L733.60,614.32 L733.80,614.67 L734.00,615.04 L734.20,615.41 L734.40,615.79 L734.60,616.21 L734.80,616.70 L735.00,617.25 L735.20,617.83 L735.40,618.44 L735.60,619.06 L735.80,619.67 L736.00,620.26 L736.20,620.84 L736.40,621.38 L736.60,621.90 L736.80,622.37 L737.00,622.81 L737.20,623.21 L737.40,623.61 L737.60,624.00 L737.80,624.38 L738.00,624.76 L738.20,625.13 L738.40,625.50 L738.60,625.87 L738.80,626.23 L739.00,626.59 L739.20,626.94 L739.40,627.29 L739.60,627.66 L739.80,628.01 L740.00,628.37 L740.20,628.71 L740.40,629.05 L740.60,629.39 L740.80,629.72 L741.00,630.04 L741.20,630.36 L741.40,630.67 L741.60,630.98 L741.80,631.29 L742.00,631.59 L742.20,631.89 L742.40,632.19 L742.60,632.48 L742.80,632.77 L743.00,633.06 L743.20,633.34 L743.40,633.62 L743.60,633.91 L743.80,634.19 L744.00,634.46 L744.20,634.74 L744.40,635.01 L744.60,635.29 L744.80,635.56 L745.00,635.83 L745.20,636.10 L745.40,636.37 L745.60,636.64 L745.80,636.90 L746.00,637.17 L746.20,637.43 L746.40,637.70 L746.60,637.96 L746.80,638.22 L747.00,638.48 L747.20,638.74 L747.40,639.00 L747.60,639.25 L747.80,639.51 L748.00,639.76 L748.20,640.02 L748.40,640.27 L748.60,640.52 L748.80,640.77 L749.00,641.02 L749.20,641.26 L749.40,641.51 L749.60,641.76 L749.80,642.00 L750.00,642.24 L750.20,642.48 L750.40,642.72 L750.60,642.96 L750.80,643.20 L751.00,643.44 L751.20,643.67 L751.40,643.91 L751.60,644.14 L751.80,644.37 L752.00,644.60 L752.20,644.83 L752.40,645.06 L752.60,645.28 L752.80,645.51 L753.00,645.73 L753.20,645.95 L753.40,646.17 L753.60,646.39 L753.80,646.61 L754.00,646.83 L754.20,647.04 L754.40,647.25 L754.60,647.47 L754.80,647.68 L755.00,647.89 L755.20,648.09 L755.40,648.30 L755.60,648.51 L755.80,648.71 L756.00,648.91 L756.20,649.11 L756.40,649.31 L756.60,649.51 L756.80,649.71 L757.00,649.90 L757.20,650.10 L757.40,650.29 L757.60,650.48 L757.80,650.67 L758.00,650.86 L758.20,651.05 L758.40,651.23 L758.60,651.42 L758.80,651.60 L759.00,651.78 L759.20,651.96 L759.40,652.14 L759.60,652.32 L759.80,652.50 L760.00,652.67 L760.20,652.85 L760.40,653.02 L760.60,653.19 L760.80,653.36 L761.00,653.53 L761.20,653.70 L761.40,653.87 L761.60,654.04 L761.80,654.20 L762.00,654.37 L762.20,654.53 L762.40,654.70 L762.60,654.86 L762.80,655.02 L763.00,655.18 L763.20,655.34 L763.40,655.50 L763.60,655.66 L763.80,655.82 L764.00,655.98 L764.20,656.14 L764.40,656.29 L764.60,656.45 L764.80,656.60 L765.00,656.76 L765.20,656.92 L765.40,657.07 L765.60,657.22 L765.80,657.38 L766.00,657.53 L766.20,657.68 L766.40,657.84 L766.60,657.99 L766.80,658.14 L767.00,658.29 L767.20,658.45 L767.40,658.60 L767.60,658.75 L767.80,658.90 L768.00,659.05 L768.20,659.20 L768.40,659.36 L768.60,659.51 L768.80,659.66 L769.00,659.81 L769.20,659.96 L769.40,660.11 L769.60,660.26 L769.80,660.42 L770.00,660.57 L770.20,660.72 L770.40,660.87 L770.60,661.02 L770.80,661.17 L771.00,661.32 L771.20,661.47 L771.40,661.62 L771.60,661.78 L771.80,661.93 L772.00,662.08 L772.20,662.23 L772.40,662.38 L772.60,662.53 L772.80,662.68 L773.00,662.82 L773.20,662.97 L773.40,663.12 L773.60,663.27 L773.80,663.42 L774.00,663.56 L774.20,663.71 L774.40,663.86 L774.60,664.00 L774.80,664.15 L775.00,664.29 L775.20,664.44 L775.40,664.58 L775.60,664.72 L775.80,664.87 L776.00,665.01 L776.20,665.15 L776.40,665.29 L776.60,665.43 L776.80,665.57 L777.00,665.70 L777.20,665.84 L777.40,665.98 L777.60,666.12 L777.80,666.25 L778.00,666.39 L778.20,666.52 L778.40,666.65 L778.60,666.79 L778.80,666.92 L779.00,667.05 L779.20,667.18 L779.40,667.31 L779.60,667.44 L779.80,667.57" fill="none" stroke="#548aa2" stroke-width="1.25" stroke-linejoin="round"/><path d="M194.90,689.10 L195.10,651.81 L195.30,631.96 L195.50,620.29 L195.70,617.28 L195.90,616.11 L196.10,615.28 L196.30,614.74 L196.50,614.46 L196.70,614.37 L196.90,614.31 L197.10,614.25 L197.30,614.21 L197.50,614.17 L197.70,614.14 L197.90,614.12 L198.10,614.11 L198.30,614.10 L198.50,614.12 L198.70,614.25 L198.90,614.49 L199.10,614.82 L199.30,615.19 L199.50,615.60 L199.70,616.03 L199.90,616.60 L200.10,617.32 L200.30,618.13 L200.50,619.02 L200.70,619.94 L200.90,620.85 L201.10,621.73 L201.30,622.58 L201.50,623.32 L201.70,624.02 L201.90,624.71 L202.10,625.37 L202.30,626.03 L202.50,626.66 L202.70,627.28 L202.90,627.88 L203.10,628.47 L203.30,629.05 L203.50,629.61 L203.70,630.16 L203.90,630.70 L204.10,631.23 L204.30,631.74 L204.50,632.25 L204.70,632.74 L204.90,633.23 L205.10,633.70 L205.30,634.17 L205.50,634.63 L205.70,635.08 L205.90,635.53 L206.10,635.97 L206.30,636.41 L206.50,636.84 L206.70,637.27 L206.90,637.69 L207.10,638.11 L207.30,638.54 L207.50,638.96 L207.70,639.38 L207.90,639.79 L208.10,640.20 L208.30,640.60 L208.50,640.99 L208.70,641.38 L208.90,641.77 L209.10,642.15 L209.30,642.52 L209.50,642.90 L209.70,643.27 L209.90,643.63 L210.10,643.99 L210.30,644.35 L210.50,644.71 L210.70,645.06 L210.90,645.41 L211.10,645.76 L211.30,646.11 L211.50,646.45 L211.70,646.79 L211.90,647.13 L212.10,647.46 L212.30,647.80 L212.50,648.13 L212.70,648.46 L212.90,648.79 L213.10,649.11 L213.30,649.43 L213.50,649.76 L213.70,650.08 L213.90,650.39 L214.10,650.71 L214.30,651.02 L214.50,651.33 L214.70,651.64 L214.90,651.95 L215.10,652.26 L215.30,652.56 L215.50,652.86 L215.70,653.16 L215.90,653.46 L216.10,653.76 L216.30,654.05 L216.50,654.34 L216.70,654.63 L216.90,654.92 L217.10,655.20 L217.30,655.48 L217.50,655.76 L217.70,656.04 L217.90,656.32 L218.10,656.59 L218.30,656.86 L218.50,657.13 L218.70,657.40 L218.90,657.66 L219.10,657.93 L219.30,658.19 L219.50,658.45 L219.70,658.70 L219.90,658.96 L220.10,659.21 L220.30,659.46 L220.50,659.71 L220.70,659.95 L220.90,660.20 L221.10,660.44 L221.30,660.68 L221.50,660.92 L221.70,661.15 L221.90,661.39 L222.10,661.62 L222.30,661.85 L222.50,662.08 L222.70,662.31 L222.90,662.53 L223.10,662.75 L223.30,662.98 L223.50,663.20 L223.70,663.42 L223.90,663.63 L224.10,663.85 L224.30,664.06 L224.50,664.27 L224.70,664.48 L224.90,664.69 L225.10,664.90 L225.30,665.11 L225.50,665.31 L225.70,665.52 L225.90,665.72 L226.10,665.92 L226.30,666.12 L226.50,666.31 L226.70,666.51 L226.90,666.71 L227.10,666.90 L227.30,667.09 L227.50,667.28 L227.70,667.47 L227.90,667.66 L228.10,667.85 L228.30,668.03 L228.50,668.22 L228.70,668.40 L228.90,668.58 L229.10,668.76 L229.30,668.94 L229.50,669.12 L229.70,669.30 L229.90,669.48 L230.10,669.65 L230.30,669.83 L230.50,670.00 L230.70,670.17 L230.90,670.34 L231.10,670.51 L231.30,670.68 L231.50,670.85 L231.70,671.01 L231.90,671.18 L232.10,671.34 L232.30,671.51 L232.50,671.67 L232.70,671.83 L232.90,671.99 L233.10,672.15 L233.30,672.31 L233.50,672.46 L233.70,672.62 L233.90,672.77 L234.10,672.93 L234.30,673.08 L234.50,673.23 L234.70,673.38 L234.90,673.53 L235.10,673.68 L235.30,673.83 L235.50,673.98 L235.70,674.12 L235.90,674.27 L236.10,674.41 L236.30,674.56 L236.50,674.70 L236.70,674.84 L236.90,674.98 L237.10,675.12 L237.30,675.26 L237.50,675.40 L237.70,675.53 L237.90,675.67 L238.10,675.80 L238.30,675.94 L238.50,676.07 L238.70,676.21 L238.90,676.34 L239.10,676.47 L239.30,676.60 L239.50,676.73 L239.70,676.86 L239.90,676.98 L240.10,677.11 L240.30,677.24 L240.50,677.36 L240.70,677.49 L240.90,677.61 L241.10,677.73 L241.30,677.86 L241.50,677.98 L241.70,678.10 L241.90,678.22 L242.10,678.34 L242.30,678.46 L242.50,678.57 L242.70,678.69 L242.90,678.81 L243.10,678.92 L243.30,679.04 L243.50,679.15 L243.70,679.26 L243.90,679.37 L244.10,679.49 L244.30,679.60 L244.50,679.71 L244.70,679.82 L244.90,679.92 L245.10,680.03 L245.30,680.14 L245.50,680.24 L245.70,680.35 L245.90,680.45 L246.10,680.56 L246.30,680.66 L246.50,680.76 L246.70,680.86 L246.90,680.96 L247.10,681.06 L247.30,681.16 L247.50,681.25 L247.70,681.35 L247.90,681.45 L248.10,681.54 L248.30,681.64 L248.50,681.73 L248.70,681.82 L248.90,681.91 L249.10,682.01 L249.30,682.10 L249.50,682.19 L249.70,682.27 L249.90,682.36 L250.10,682.45 L250.30,682.54 L250.50,682.62 L250.70,682.71 L250.90,682.79 L251.10,682.88 L251.30,682.96 L251.50,683.04 L251.70,683.13 L251.90,683.21 L252.10,683.29 L252.30,683.37 L252.50,683.45 L252.70,683.53 L252.90,683.61 L253.10,683.69 L253.30,683.77 L253.50,683.85 L253.70,683.92 L253.90,684.00 L254.10,684.08 L254.30,684.15 L254.50,684.23 L254.70,684.30 L254.90,684.38 L255.10,684.46 L255.30,684.53 L255.50,684.61 L255.70,684.68 L255.90,684.76 L256.10,684.83 L256.30,684.90 L256.50,684.98 L256.70,685.05 L256.90,685.13 L257.10,685.20 L257.30,685.28 L257.50,685.35 L257.70,685.43 L257.90,685.50 L258.10,685.58 L258.30,685.65 L258.50,685.73 L258.70,685.80 L258.90,685.88 L259.10,685.95 L259.30,686.03 L259.50,686.11 L259.70,686.18 L259.90,686.26 L260.10,686.33 L260.30,686.41 L260.50,686.48 L260.70,686.56 L260.90,686.63 L261.10,686.71 L261.30,686.78 L261.50,686.86 L261.70,686.93 L261.90,687.00 L262.10,687.07 L262.30,687.14 L262.50,687.21 L262.70,687.28 L262.90,687.35 L263.10,687.41 L263.30,687.48 L263.50,687.54 L263.70,687.60 L263.90,687.66 L264.10,687.72 L264.30,687.77 L264.50,687.83 L264.70,687.88 L264.90,687.93 L265.10,687.98 L265.30,688.04 L265.50,688.10 L265.70,688.15 L265.90,688.21 L266.10,688.26 L266.30,688.31 L266.50,688.36 L266.70,688.40 L266.90,688.44 L267.10,688.48 L267.30,688.51 L267.50,688.54 L267.70,688.57 L267.90,688.59 L268.10,688.60 L268.10,688.60 L268.30,683.39 L268.50,674.13 L268.70,668.95 L268.90,665.35 L269.10,662.23 L269.30,659.53 L269.50,657.14 L269.70,654.98 L269.90,652.98 L270.10,651.05 L270.30,649.07 L270.50,647.07 L270.70,645.15 L270.90,643.42 L271.10,641.98 L271.30,640.93 L271.50,640.37 L271.70,640.12 L271.90,639.89 L272.10,639.69 L272.30,639.51 L272.50,639.37 L272.70,639.25 L272.90,639.17 L273.10,639.12 L273.30,639.10 L273.50,639.12 L273.70,639.20 L273.90,639.31 L274.10,639.46 L274.30,639.64 L274.50,639.90 L274.70,640.19 L274.90,640.50 L275.10,640.82 L275.30,641.15 L275.50,641.48 L275.70,641.86 L275.90,642.29 L276.10,642.78 L276.30,643.30 L276.50,643.85 L276.70,644.41 L276.90,644.98 L277.10,645.54 L277.30,646.10 L277.50,646.64 L277.70,647.16 L277.90,647.66 L278.10,648.14 L278.30,648.59 L278.50,649.02 L278.70,649.44 L278.90,649.85 L279.10,650.26 L279.30,650.67 L279.50,651.07 L279.70,651.47 L279.90,651.86 L280.10,652.25 L280.30,652.64 L280.50,653.04 L280.70,653.44 L280.90,653.83 L281.10,654.21 L281.30,654.59 L281.50,654.96 L281.70,655.32 L281.90,655.68 L282.10,656.04 L282.30,656.38 L282.50,656.72 L282.70,657.06 L282.90,657.39 L283.10,657.71 L283.30,658.03 L283.50,658.35 L283.70,658.65 L283.90,658.96 L284.10,659.26 L284.30,659.55 L284.50,659.84 L284.70,660.13 L284.90,660.41 L285.10,660.68 L285.30,660.96 L285.50,661.23 L285.70,661.49 L285.90,661.75 L286.10,662.01 L286.30,662.27 L286.50,662.52 L286.70,662.77 L286.90,663.01 L287.10,663.26 L287.30,663.50 L287.50,663.73 L287.70,663.97 L287.90,664.20 L288.10,664.43 L288.30,664.66 L288.50,664.88 L288.70,665.11 L288.90,665.33 L289.10,665.54 L289.30,665.76 L289.50,665.97 L289.70,666.19 L289.90,666.40 L290.10,666.60 L290.30,666.81 L290.50,667.01 L290.70,667.22 L290.90,667.42 L291.10,667.61 L291.30,667.81 L291.50,668.01 L291.70,668.20 L291.90,668.39 L292.10,668.58 L292.30,668.77 L292.50,668.95 L292.70,669.14 L292.90,669.32 L293.10,669.50 L293.30,669.68 L293.50,669.86 L293.70,670.04 L293.90,670.21 L294.10,670.39 L294.30,670.56 L294.50,670.73 L294.70,670.90 L294.90,671.07 L295.10,671.23 L295.30,671.40 L295.50,671.56 L295.70,671.72 L295.90,671.88 L296.10,672.04 L296.30,672.20 L296.50,672.36 L296.70,672.51 L296.90,672.66 L297.10,672.82 L297.30,672.97 L297.50,673.12 L297.70,673.27 L297.90,673.42 L298.10,673.56 L298.30,673.71 L298.50,673.86 L298.70,674.00 L298.90,674.14 L299.10,674.28 L299.30,674.42 L299.50,674.56 L299.70,674.70 L299.90,674.84 L300.10,674.98 L300.30,675.11 L300.50,675.25 L300.70,675.38 L300.90,675.52 L301.10,675.65 L301.30,675.78 L301.50,675.91 L301.70,676.04 L301.90,676.17 L302.10,676.30 L302.30,676.43 L302.50,676.56 L302.70,676.68 L302.90,676.81 L303.10,676.93 L303.30,677.06 L303.50,677.18 L303.70,677.30 L303.90,677.42 L304.10,677.55 L304.30,677.67 L304.50,677.79 L304.70,677.91 L304.90,678.02 L305.10,678.14 L305.30,678.26 L305.50,678.37 L305.70,678.49 L305.90,678.61 L306.10,678.72 L306.30,678.83 L306.50,678.95 L306.70,679.06 L306.90,679.17 L307.10,679.28 L307.30,679.39 L307.50,679.50 L307.70,679.61 L307.90,679.72 L308.10,679.83 L308.30,679.94 L308.50,680.04 L308.70,680.15 L308.90,680.26 L309.10,680.36 L309.30,680.47 L309.50,680.57 L309.70,680.68 L309.90,680.78 L310.10,680.88 L310.30,680.98 L310.50,681.09 L310.70,681.19 L310.90,681.29 L311.10,681.39 L311.30,681.49 L311.50,681.59 L311.70,681.69 L311.90,681.78 L312.10,681.88 L312.30,681.98 L312.50,682.08 L312.70,682.17 L312.90,682.27 L313.10,682.36 L313.30,682.46 L313.50,682.55 L313.70,682.65 L313.90,682.74 L314.10,682.83 L314.30,682.93 L314.50,683.02 L314.70,683.11 L314.90,683.20 L315.10,683.29 L315.30,683.38 L315.50,683.48 L315.70,683.57 L315.90,683.65 L316.10,683.74 L316.30,683.83 L316.50,683.92 L316.70,684.01 L316.90,684.10 L317.10,684.18 L317.30,684.27 L317.50,684.36 L317.70,684.44 L317.90,684.53 L318.10,684.61 L318.30,684.70 L318.50,684.78 L318.70,684.86 L318.90,684.95 L319.10,685.03 L319.30,685.11 L319.50,685.19 L319.70,685.28 L319.90,685.36 L320.10,685.44 L320.30,685.52 L320.50,685.60 L320.70,685.68 L320.90,685.75 L321.10,685.83 L321.30,685.91 L321.50,685.99 L321.70,686.06 L321.90,686.14 L322.10,686.22 L322.30,686.29 L322.50,686.37 L322.70,686.44 L322.90,686.51 L323.10,686.59 L323.30,686.66 L323.50,686.73 L323.70,686.81 L323.90,686.88 L324.10,686.95 L324.30,687.02 L324.50,687.09 L324.70,687.16 L324.90,687.23 L325.10,687.30 L325.30,687.37 L325.50,687.44 L325.70,687.51 L325.90,687.58 L326.10,687.64 L326.30,687.71 L326.50,687.78 L326.70,687.85 L326.90,687.91 L327.10,687.98 L327.30,688.05 L327.50,688.11 L327.70,688.18 L327.90,688.24 L328.10,688.31 L328.30,688.38 L328.50,688.44 L328.70,688.51 L328.90,688.57 L329.10,688.64 L329.30,688.71 L329.50,688.77 L329.70,688.84 L329.90,688.90 L330.10,688.97 L330.30,689.04 L330.50,689.10 L330.70,689.17 L330.90,689.24 L331.10,689.30 L331.30,689.37 L331.50,689.44 L331.70,689.50 L331.90,689.57 L332.10,689.64 L332.30,689.70 L332.50,689.77 L332.70,689.84 L332.90,689.90 L333.10,689.97 L333.30,690.03 L333.50,690.10 L333.70,690.16 L333.90,690.23 L334.10,690.29 L334.30,690.36 L334.50,690.42 L334.70,690.48 L334.90,690.55 L335.10,690.61 L335.30,690.67 L335.50,690.73 L335.70,690.79 L335.90,690.85 L336.10,690.90 L336.30,690.96 L336.50,691.02 L336.70,691.07 L336.90,691.13 L337.10,691.18 L337.30,691.23 L337.50,691.28 L337.70,691.33 L337.90,691.38 L338.10,691.42 L338.30,691.47 L338.50,691.51 L338.70,691.56 L338.90,691.60 L339.10,691.64 L339.30,691.67 L339.50,691.71 L339.70,691.75 L339.90,691.78 L340.10,691.82 L340.30,691.86 L340.50,691.89 L340.70,691.93 L340.90,691.97 L341.10,692.00 L341.30,692.03 L341.50,692.06 L341.70,692.09 L341.90,692.11 L342.10,692.14 L342.30,692.16 L342.50,692.17 L342.70,692.19 L342.90,692.20 L343.00,692.20 L343.20,686.31 L343.40,676.00 L343.60,670.65 L343.80,667.16 L344.00,664.20 L344.20,661.68 L344.40,659.49 L344.60,657.54 L344.80,655.72 L345.00,653.93 L345.20,652.07 L345.40,650.19 L345.60,648.39 L345.80,646.76 L346.00,645.40 L346.20,644.42 L346.40,643.90 L346.60,643.66 L346.80,643.44 L347.00,643.25 L347.20,643.09 L347.40,642.95 L347.60,642.84 L347.80,642.76 L348.00,642.72 L348.20,642.70 L348.40,642.72 L348.60,642.79 L348.80,642.90 L349.00,643.04 L349.20,643.21 L349.40,643.46 L349.60,643.73 L349.80,644.01 L350.00,644.30 L350.20,644.60 L350.40,644.90 L350.60,645.24 L350.80,645.62 L351.00,646.04 L351.20,646.48 L351.40,646.95 L351.60,647.44 L351.80,647.93 L352.00,648.42 L352.20,648.91 L352.40,649.39 L352.60,649.85 L352.80,650.31 L353.00,650.75 L353.20,651.17 L353.40,651.57 L353.60,651.96 L353.80,652.34 L354.00,652.72 L354.20,653.09 L354.40,653.46 L354.60,653.83 L354.80,654.19 L355.00,654.56 L355.20,654.91 L355.40,655.29 L355.60,655.65 L355.80,656.01 L356.00,656.37 L356.20,656.72 L356.40,657.07 L356.60,657.41 L356.80,657.74 L357.00,658.07 L357.20,658.40 L357.40,658.72 L357.60,659.04 L357.80,659.35 L358.00,659.65 L358.20,659.95 L358.40,660.25 L358.60,660.54 L358.80,660.83 L359.00,661.11 L359.20,661.39 L359.40,661.66 L359.60,661.93 L359.80,662.20 L360.00,662.46 L360.20,662.72 L360.40,662.98 L360.60,663.23 L360.80,663.47 L361.00,663.72 L361.20,663.96 L361.40,664.20 L361.60,664.43 L361.80,664.66 L362.00,664.89 L362.20,665.12 L362.40,665.34 L362.60,665.57 L362.80,665.78 L363.00,666.00 L363.20,666.21 L363.40,666.43 L363.60,666.64 L363.80,666.84 L364.00,667.05 L364.20,667.25 L364.40,667.45 L364.60,667.65 L364.80,667.85 L365.00,668.04 L365.20,668.24 L365.40,668.43 L365.60,668.62 L365.80,668.81 L366.00,669.00 L366.20,669.18 L366.40,669.36 L366.60,669.55 L366.80,669.73 L367.00,669.90 L367.20,670.08 L367.40,670.26 L367.60,670.43 L367.80,670.60 L368.00,670.77 L368.20,670.94 L368.40,671.11 L368.60,671.28 L368.80,671.44 L369.00,671.60 L369.20,671.77 L369.40,671.93 L369.60,672.09 L369.80,672.24 L370.00,672.40 L370.20,672.56 L370.40,672.71 L370.60,672.86 L370.80,673.01 L371.00,673.16 L371.20,673.31 L371.40,673.46 L371.60,673.61 L371.80,673.75 L372.00,673.90 L372.20,674.04 L372.40,674.18 L372.60,674.32 L372.80,674.46 L373.00,674.60 L373.20,674.74 L373.40,674.87 L373.60,675.01 L373.80,675.14 L374.00,675.28 L374.20,675.41 L374.40,675.54 L374.60,675.67 L374.80,675.80 L375.00,675.93 L375.20,676.06 L375.40,676.19 L375.60,676.31 L375.80,676.44 L376.00,676.56 L376.20,676.69 L376.40,676.81 L376.60,676.93 L376.80,677.05 L377.00,677.18 L377.20,677.30 L377.40,677.42 L377.60,677.53 L377.80,677.65 L378.00,677.77 L378.20,677.89 L378.40,678.00 L378.60,678.12 L378.80,678.23 L379.00,678.35 L379.20,678.46 L379.40,678.57 L379.60,678.68 L379.80,678.80 L380.00,678.91 L380.20,679.02 L380.40,679.13 L380.60,679.23 L380.80,679.34 L381.00,679.45 L381.20,679.56 L381.40,679.66 L381.60,679.77 L381.80,679.88 L382.00,679.98 L382.20,680.08 L382.40,680.19 L382.60,680.29 L382.80,680.39 L383.00,680.50 L383.20,680.60 L383.40,680.70 L383.60,680.80 L383.80,680.90 L384.00,681.00 L384.20,681.10 L384.40,681.19 L384.60,681.29 L384.80,681.39 L385.00,681.49 L385.20,681.58 L385.40,681.68 L385.60,681.77 L385.80,681.87 L386.00,681.96 L386.20,682.06 L386.40,682.15 L386.60,682.24 L386.80,682.33 L387.00,682.43 L387.20,682.52 L387.40,682.61 L387.60,682.70 L387.80,682.79 L388.00,682.88 L388.20,682.97 L388.40,683.06 L388.60,683.15 L388.80,683.23 L389.00,683.32 L389.20,683.41 L389.40,683.50 L389.60,683.58 L389.80,683.67 L390.00,683.75 L390.20,683.84 L390.40,683.93 L390.60,684.01 L390.80,684.09 L391.00,684.18 L391.20,684.26 L391.40,684.34 L391.60,684.43 L391.80,684.51 L392.00,684.59 L392.20,684.67 L392.40,684.76 L392.60,684.84 L392.80,684.92 L393.00,685.00 L393.20,685.08 L393.40,685.16 L393.60,685.24 L393.80,685.31 L394.00,685.39 L394.20,685.47 L394.40,685.55 L394.60,685.62 L394.80,685.70 L395.00,685.78 L395.20,685.85 L395.40,685.93 L395.60,686.00 L395.80,686.08 L396.00,686.15 L396.20,686.23 L396.40,686.30 L396.60,686.37 L396.80,686.45 L397.00,686.52 L397.20,686.59 L397.40,686.66 L397.60,686.73 L397.80,686.80 L398.00,686.87 L398.20,686.94 L398.40,687.01 L398.60,687.08 L398.80,687.15 L399.00,687.22 L399.20,687.29 L399.40,687.35 L399.60,687.42 L399.80,687.49 L400.00,687.55 L400.20,687.62 L400.40,687.69 L400.60,687.75 L400.80,687.81 L401.00,687.88 L401.20,687.94 L401.40,688.01 L401.60,688.07 L401.80,688.13 L402.00,688.20 L402.20,688.26 L402.40,688.32 L402.60,688.38 L402.80,688.44 L403.00,688.51 L403.20,688.57 L403.40,688.63 L403.60,688.69 L403.80,688.75 L404.00,688.81 L404.20,688.87 L404.40,688.93 L404.60,688.99 L404.80,689.05 L405.00,689.11 L405.20,689.17 L405.40,689.23 L405.60,689.29 L405.80,689.36 L406.00,689.42 L406.20,689.48 L406.40,689.54 L406.60,689.60 L406.80,689.66 L407.00,689.72 L407.20,689.78 L407.40,689.84 L407.60,689.90 L407.80,689.96 L408.00,690.03 L408.20,690.09 L408.40,690.15 L408.60,690.21 L408.80,690.27 L409.00,690.33 L409.20,690.39 L409.40,690.45 L409.60,690.51 L409.80,690.57 L410.00,690.64 L410.20,690.69 L410.40,690.75 L410.60,690.81 L410.80,690.87 L411.00,690.93 L411.20,690.99 L411.40,691.05 L411.60,691.10 L411.80,691.16 L412.00,691.21 L412.20,691.27 L412.40,691.32 L412.60,691.38 L412.80,691.43 L413.00,691.48 L413.20,691.53 L413.40,691.58 L413.60,691.63 L413.80,691.68 L414.00,691.72 L414.20,691.77 L414.40,691.81 L414.60,691.86 L414.80,691.90 L415.00,691.94 L415.20,691.98 L415.40,692.02 L415.60,692.06 L415.80,692.09 L416.00,692.13 L416.20,692.16 L416.40,692.19 L416.60,692.22 L416.80,692.25 L417.00,692.29 L417.20,692.33 L417.40,692.36 L417.60,692.39 L417.80,692.42 L418.00,692.45 L418.20,692.48 L418.40,692.50 L418.60,692.52 L418.80,692.54 L419.00,692.56 L419.20,692.58 L419.40,692.59 L419.60,692.60 L419.70,692.60 L419.90,686.54 L420.10,675.95 L420.30,670.51 L420.50,666.98 L420.70,664.00 L420.90,661.47 L421.10,659.28 L421.30,657.32 L421.50,655.50 L421.70,653.70 L421.90,651.83 L422.10,649.94 L422.30,648.12 L422.50,646.48 L422.70,645.12 L422.90,644.13 L423.10,643.60 L423.30,643.36 L423.50,643.15 L423.70,642.95 L423.90,642.79 L424.10,642.65 L424.30,642.54 L424.50,642.46 L424.70,642.42 L424.90,642.40 L425.10,642.42 L425.30,642.49 L425.50,642.60 L425.70,642.74 L425.90,642.92 L426.10,643.16 L426.30,643.43 L426.50,643.72 L426.70,644.01 L426.90,644.31 L427.10,644.62 L427.30,644.95 L427.50,645.33 L427.70,645.76 L427.90,646.21 L428.10,646.68 L428.30,647.17 L428.50,647.66 L428.70,648.15 L428.90,648.64 L429.10,649.13 L429.30,649.60 L429.50,650.05 L429.70,650.49 L429.90,650.92 L430.10,651.33 L430.30,651.72 L430.50,652.10 L430.70,652.48 L430.90,652.85 L431.10,653.22 L431.30,653.59 L431.50,653.96 L431.70,654.33 L431.90,654.69 L432.10,655.06 L432.30,655.43 L432.50,655.79 L432.70,656.15 L432.90,656.50 L433.10,656.85 L433.30,657.20 L433.50,657.53 L433.70,657.87 L433.90,658.19 L434.10,658.52 L434.30,658.83 L434.50,659.15 L434.70,659.45 L434.90,659.76 L435.10,660.06 L435.30,660.35 L435.50,660.64 L435.70,660.92 L435.90,661.20 L436.10,661.48 L436.30,661.75 L436.50,662.02 L436.70,662.28 L436.90,662.54 L437.10,662.80 L437.30,663.05 L437.50,663.30 L437.70,663.55 L437.90,663.79 L438.10,664.03 L438.30,664.26 L438.50,664.50 L438.70,664.73 L438.90,664.96 L439.10,665.18 L439.30,665.40 L439.50,665.62 L439.70,665.84 L439.90,666.06 L440.10,666.27 L440.30,666.48 L440.50,666.69 L440.70,666.89 L440.90,667.10 L441.10,667.30 L441.30,667.50 L441.50,667.70 L441.70,667.90 L441.90,668.09 L442.10,668.28 L442.30,668.48 L442.50,668.67 L442.70,668.85 L442.90,669.04 L443.10,669.22 L443.30,669.41 L443.50,669.59 L443.70,669.77 L443.90,669.95 L444.10,670.12 L444.30,670.30 L444.50,670.47 L444.70,670.64 L444.90,670.81 L445.10,670.98 L445.30,671.15 L445.50,671.31 L445.70,671.48 L445.90,671.64 L446.10,671.80 L446.30,671.96 L446.50,672.12 L446.70,672.28 L446.90,672.44 L447.10,672.59 L447.30,672.74 L447.50,672.90 L447.70,673.05 L447.90,673.20 L448.10,673.35 L448.30,673.49 L448.50,673.64 L448.70,673.78 L448.90,673.93 L449.10,674.07 L449.30,674.21 L449.50,674.35 L449.70,674.49 L449.90,674.63 L450.10,674.77 L450.30,674.90 L450.50,675.04 L450.70,675.17 L450.90,675.31 L451.10,675.44 L451.30,675.57 L451.50,675.70 L451.70,675.83 L451.90,675.96 L452.10,676.09 L452.30,676.22 L452.50,676.34 L452.70,676.47 L452.90,676.59 L453.10,676.72 L453.30,676.84 L453.50,676.96 L453.70,677.08 L453.90,677.20 L454.10,677.32 L454.30,677.44 L454.50,677.56 L454.70,677.68 L454.90,677.80 L455.10,677.91 L455.30,678.03 L455.50,678.15 L455.70,678.26 L455.90,678.37 L456.10,678.49 L456.30,678.60 L456.50,678.71 L456.70,678.82 L456.90,678.93 L457.10,679.04 L457.30,679.15 L457.50,679.26 L457.70,679.37 L457.90,679.48 L458.10,679.59 L458.30,679.69 L458.50,679.80 L458.70,679.90 L458.90,680.01 L459.10,680.11 L459.30,680.22 L459.50,680.32 L459.70,680.42 L459.90,680.52 L460.10,680.63 L460.30,680.73 L460.50,680.83 L460.70,680.93 L460.90,681.03 L461.10,681.13 L461.30,681.22 L461.50,681.32 L461.70,681.42 L461.90,681.52 L462.10,681.61 L462.30,681.71 L462.50,681.80 L462.70,681.90 L462.90,681.99 L463.10,682.09 L463.30,682.18 L463.50,682.27 L463.70,682.36 L463.90,682.46 L464.10,682.55 L464.30,682.64 L464.50,682.73 L464.70,682.82 L464.90,682.91 L465.10,683.00 L465.30,683.09 L465.50,683.18 L465.70,683.27 L465.90,683.35 L466.10,683.44 L466.30,683.53 L466.50,683.62 L466.70,683.70 L466.90,683.79 L467.10,683.87 L467.30,683.96 L467.50,684.04 L467.70,684.13 L467.90,684.21 L468.10,684.30 L468.30,684.38 L468.50,684.46 L468.70,684.54 L468.90,684.63 L469.10,684.71 L469.30,684.79 L469.50,684.87 L469.70,684.95 L469.90,685.03 L470.10,685.11 L470.30,685.19 L470.50,685.27 L470.70,685.35 L470.90,685.43 L471.10,685.51 L471.30,685.58 L471.50,685.66 L471.70,685.74 L471.90,685.81 L472.10,685.89 L472.30,685.96 L472.50,686.04 L472.70,686.11 L472.90,686.19 L473.10,686.26 L473.30,686.34 L473.50,686.41 L473.70,686.48 L473.90,686.55 L474.10,686.63 L474.30,686.70 L474.50,686.77 L474.70,686.84 L474.90,686.91 L475.10,686.98 L475.30,687.05 L475.50,687.12 L475.70,687.19 L475.90,687.25 L476.10,687.32 L476.30,687.39 L476.50,687.46 L476.70,687.52 L476.90,687.59 L477.10,687.66 L477.30,687.72 L477.50,687.79 L477.70,687.85 L477.90,687.92 L478.10,687.98 L478.30,688.04 L478.50,688.11 L478.70,688.17 L478.90,688.23 L479.10,688.29 L479.30,688.36 L479.50,688.42 L479.70,688.48 L479.90,688.54 L480.10,688.60 L480.30,688.67 L480.50,688.73 L480.70,688.79 L480.90,688.85 L481.10,688.91 L481.30,688.97 L481.50,689.03 L481.70,689.09 L481.90,689.15 L482.10,689.21 L482.30,689.27 L482.50,689.34 L482.70,689.40 L482.90,689.46 L483.10,689.52 L483.30,689.58 L483.50,689.64 L483.70,689.70 L483.90,689.76 L484.10,689.83 L484.30,689.89 L484.50,689.95 L484.70,690.01 L484.90,690.07 L485.10,690.13 L485.30,690.20 L485.50,690.26 L485.70,690.32 L485.90,690.38 L486.10,690.44 L486.30,690.50 L486.50,690.56 L486.70,690.62 L486.90,690.68 L487.10,690.74 L487.30,690.80 L487.50,690.86 L487.70,690.92 L487.90,690.98 L488.10,691.04 L488.30,691.09 L488.50,691.15 L488.70,691.21 L488.90,691.26 L489.10,691.32 L489.30,691.37 L489.50,691.42 L489.70,691.47 L489.90,691.53 L490.10,691.58 L490.30,691.62 L490.50,691.67 L490.70,691.72 L490.90,691.77 L491.10,691.81 L491.30,691.85 L491.50,691.90 L491.70,691.94 L491.90,691.98 L492.10,692.02 L492.30,692.05 L492.50,692.09 L492.70,692.12 L492.90,692.16 L493.10,692.19 L493.30,692.22 L493.50,692.25 L493.70,692.29 L493.90,692.32 L494.10,692.36 L494.30,692.39 L494.50,692.42 L494.70,692.45 L494.90,692.47 L495.10,692.50 L495.30,692.52 L495.50,692.54 L495.70,692.56 L495.90,692.58 L496.10,692.59 L496.30,692.60 L496.40,692.60 L496.60,686.54 L496.80,675.95 L497.00,670.51 L497.20,666.98 L497.40,664.00 L497.60,661.47 L497.80,659.28 L498.00,657.32 L498.20,655.50 L498.40,653.70 L498.60,651.83 L498.80,649.94 L499.00,648.12 L499.20,646.48 L499.40,645.12 L499.60,644.13 L499.80,643.60 L500.00,643.36 L500.20,643.15 L500.40,642.95 L500.60,642.79 L500.80,642.65 L501.00,642.54 L501.20,642.46 L501.40,642.42 L501.60,642.40 L501.80,642.42 L502.00,642.49 L502.20,642.60 L502.40,642.74 L502.60,642.92 L502.80,643.17 L503.00,643.43 L503.20,643.72 L503.40,644.01 L503.60,644.31 L503.80,644.62 L504.00,644.95 L504.20,645.33 L504.40,645.75 L504.60,646.20 L504.80,646.67 L505.00,647.15 L505.20,647.64 L505.40,648.14 L505.60,648.62 L505.80,649.10 L506.00,649.57 L506.20,650.03 L506.40,650.47 L506.60,650.89 L506.80,651.30 L507.00,651.69 L507.20,652.07 L507.40,652.45 L507.60,652.82 L507.80,653.20 L508.00,653.57 L508.20,653.93 L508.40,654.30 L508.60,654.66 L508.80,655.03 L509.00,655.40 L509.20,655.76 L509.40,656.12 L509.60,656.47 L509.80,656.82 L510.00,657.17 L510.20,657.50 L510.40,657.84 L510.60,658.16 L510.80,658.49 L511.00,658.80 L511.20,659.12 L511.40,659.42 L511.60,659.73 L511.80,660.03 L512.00,660.32 L512.20,660.61 L512.40,660.89 L512.60,661.17 L512.80,661.45 L513.00,661.72 L513.20,661.99 L513.40,662.25 L513.60,662.51 L513.80,662.77 L514.00,663.02 L514.20,663.27 L514.40,663.52 L514.60,663.76 L514.80,664.00 L515.00,664.24 L515.20,664.47 L515.40,664.70 L515.60,664.93 L515.80,665.15 L516.00,665.38 L516.20,665.60 L516.40,665.81 L516.60,666.03 L516.80,666.24 L517.00,666.45 L517.20,666.66 L517.40,666.87 L517.60,667.07 L517.80,667.27 L518.00,667.47 L518.20,667.67 L518.40,667.87 L518.60,668.06 L518.80,668.26 L519.00,668.45 L519.20,668.64 L519.40,668.83 L519.60,669.01 L519.80,669.20 L520.00,669.38 L520.20,669.56 L520.40,669.74 L520.60,669.92 L520.80,670.09 L521.00,670.27 L521.20,670.44 L521.40,670.61 L521.60,670.78 L521.80,670.95 L522.00,671.12 L522.20,671.29 L522.40,671.45 L522.60,671.61 L522.80,671.78 L523.00,671.94 L523.20,672.09 L523.40,672.25 L523.60,672.41 L523.80,672.56 L524.00,672.72 L524.20,672.87 L524.40,673.02 L524.60,673.17 L524.80,673.32 L525.00,673.47 L525.20,673.61 L525.40,673.76 L525.60,673.90 L525.80,674.04 L526.00,674.19 L526.20,674.33 L526.40,674.47 L526.60,674.60 L526.80,674.74 L527.00,674.88 L527.20,675.01 L527.40,675.15 L527.60,675.28 L527.80,675.41 L528.00,675.54 L528.20,675.67 L528.40,675.80 L528.60,675.93 L528.80,676.06 L529.00,676.19 L529.20,676.31 L529.40,676.44 L529.60,676.56 L529.80,676.69 L530.00,676.81 L530.20,676.93 L530.40,677.06 L530.60,677.18 L530.80,677.30 L531.00,677.42 L531.20,677.54 L531.40,677.65 L531.60,677.77 L531.80,677.89 L532.00,678.00 L532.20,678.12 L532.40,678.23 L532.60,678.35 L532.80,678.46 L533.00,678.57 L533.20,678.69 L533.40,678.80 L533.60,678.91 L533.80,679.02 L534.00,679.13 L534.20,679.24 L534.40,679.34 L534.60,679.45 L534.80,679.56 L535.00,679.67 L535.20,679.77 L535.40,679.88 L535.60,679.98 L535.80,680.09 L536.00,680.19 L536.20,680.29 L536.40,680.40 L536.60,680.50 L536.80,680.60 L537.00,680.70 L537.20,680.80 L537.40,680.90 L537.60,681.00 L537.80,681.10 L538.00,681.20 L538.20,681.29 L538.40,681.39 L538.60,681.49 L538.80,681.58 L539.00,681.68 L539.20,681.78 L539.40,681.87 L539.60,681.97 L539.80,682.06 L540.00,682.15 L540.20,682.25 L540.40,682.34 L540.60,682.43 L540.80,682.52 L541.00,682.61 L541.20,682.70 L541.40,682.79 L541.60,682.88 L541.80,682.97 L542.00,683.06 L542.20,683.15 L542.40,683.24 L542.60,683.33 L542.80,683.42 L543.00,683.50 L543.20,683.59 L543.40,683.68 L543.60,683.76 L543.80,683.85 L544.00,683.93 L544.20,684.02 L544.40,684.10 L544.60,684.19 L544.80,684.27 L545.00,684.35 L545.20,684.44 L545.40,684.52 L545.60,684.60 L545.80,684.68 L546.00,684.76 L546.20,684.84 L546.40,684.93 L546.60,685.01 L546.80,685.09 L547.00,685.16 L547.20,685.24 L547.40,685.32 L547.60,685.40 L547.80,685.48 L548.00,685.56 L548.20,685.63 L548.40,685.71 L548.60,685.79 L548.80,685.86 L549.00,685.94 L549.20,686.01 L549.40,686.09 L549.60,686.16 L549.80,686.24 L550.00,686.31 L550.20,686.38 L550.40,686.46 L550.60,686.53 L550.80,686.60 L551.00,686.67 L551.20,686.74 L551.40,686.81 L551.60,686.88 L551.80,686.95 L552.00,687.02 L552.20,687.09 L552.40,687.16 L552.60,687.23 L552.80,687.30 L553.00,687.37 L553.20,687.43 L553.40,687.50 L553.60,687.57 L553.80,687.63 L554.00,687.70 L554.20,687.76 L554.40,687.83 L554.60,687.89 L554.80,687.96 L555.00,688.02 L555.20,688.08 L555.40,688.15 L555.60,688.21 L555.80,688.27 L556.00,688.33 L556.20,688.40 L556.40,688.46 L556.60,688.52 L556.80,688.58 L557.00,688.64 L557.20,688.70 L557.40,688.76 L557.60,688.82 L557.80,688.89 L558.00,688.95 L558.20,689.01 L558.40,689.07 L558.60,689.13 L558.80,689.19 L559.00,689.25 L559.20,689.31 L559.40,689.37 L559.60,689.43 L559.80,689.49 L560.00,689.55 L560.20,689.62 L560.40,689.68 L560.60,689.74 L560.80,689.80 L561.00,689.86 L561.20,689.92 L561.40,689.98 L561.60,690.05 L561.80,690.11 L562.00,690.17 L562.20,690.23 L562.40,690.29 L562.60,690.35 L562.80,690.41 L563.00,690.48 L563.20,690.54 L563.40,690.60 L563.60,690.66 L563.80,690.72 L564.00,690.78 L564.20,690.84 L564.40,690.89 L564.60,690.95 L564.80,691.01 L565.00,691.07 L565.20,691.13 L565.40,691.18 L565.60,691.24 L565.80,691.29 L566.00,691.35 L566.20,691.40 L566.40,691.45 L566.60,691.50 L566.80,691.55 L567.00,691.60 L567.20,691.65 L567.40,691.70 L567.60,691.74 L567.80,691.79 L568.00,691.83 L568.20,691.88 L568.40,691.92 L568.60,691.96 L568.80,692.00 L569.00,692.04 L569.20,692.07 L569.40,692.11 L569.60,692.14 L569.80,692.17 L570.00,692.21 L570.20,692.23 L570.40,692.27 L570.60,692.31 L570.80,692.34 L571.00,692.37 L571.20,692.40 L571.40,692.43 L571.60,692.46 L571.80,692.49 L572.00,692.51 L572.20,692.53 L572.40,692.55 L572.60,692.57 L572.80,692.58 L573.00,692.59 L573.20,692.60 L573.20,692.60 L573.40,686.54 L573.60,675.95 L573.80,670.51 L574.00,666.98 L574.20,664.00 L574.40,661.47 L574.60,659.28 L574.80,657.32 L575.00,655.50 L575.20,653.69 L575.40,651.83 L575.60,649.94 L575.80,648.12 L576.00,646.48 L576.20,645.12 L576.40,644.13 L576.60,643.60 L576.80,643.36 L577.00,643.15 L577.20,642.95 L577.40,642.79 L577.60,642.65 L577.80,642.54 L578.00,642.46 L578.20,642.42 L578.40,642.40 L578.60,642.42 L578.80,642.49 L579.00,642.60 L579.20,642.74 L579.40,642.92 L579.60,643.16 L579.80,643.43 L580.00,643.72 L580.20,644.01 L580.40,644.32 L580.60,644.62 L580.80,644.96 L581.00,645.35 L581.20,645.78 L581.40,646.24 L581.60,646.72 L581.80,647.22 L582.00,647.72 L582.20,648.22 L582.40,648.72 L582.60,649.21 L582.80,649.69 L583.00,650.15 L583.20,650.59 L583.40,651.02 L583.60,651.43 L583.80,651.82 L584.00,652.20 L584.20,652.58 L584.40,652.96 L584.60,653.33 L584.80,653.70 L585.00,654.07 L585.20,654.44 L585.40,654.80 L585.60,655.17 L585.80,655.54 L586.00,655.91 L586.20,656.27 L586.40,656.62 L586.60,656.97 L586.80,657.31 L587.00,657.65 L587.20,657.99 L587.40,658.31 L587.60,658.64 L587.80,658.95 L588.00,659.27 L588.20,659.57 L588.40,659.88 L588.60,660.17 L588.80,660.47 L589.00,660.76 L589.20,661.04 L589.40,661.32 L589.60,661.59 L589.80,661.87 L590.00,662.13 L590.20,662.40 L590.40,662.66 L590.60,662.91 L590.80,663.16 L591.00,663.41 L591.20,663.66 L591.40,663.90 L591.60,664.14 L591.80,664.38 L592.00,664.61 L592.20,664.84 L592.40,665.07 L592.60,665.29 L592.80,665.51 L593.00,665.73 L593.20,665.95 L593.40,666.17 L593.60,666.38 L593.80,666.59 L594.00,666.80 L594.20,667.01 L594.40,667.21 L594.60,667.41 L594.80,667.61 L595.00,667.81 L595.20,668.01 L595.40,668.20 L595.60,668.40 L595.80,668.59 L596.00,668.78 L596.20,668.96 L596.40,669.15 L596.60,669.34 L596.80,669.52 L597.00,669.70 L597.20,669.88 L597.40,670.06 L597.60,670.23 L597.80,670.41 L598.00,670.58 L598.20,670.75 L598.40,670.92 L598.60,671.09 L598.80,671.26 L599.00,671.42 L599.20,671.59 L599.40,671.75 L599.60,671.91 L599.80,672.07 L600.00,672.23 L600.20,672.39 L600.40,672.55 L600.60,672.70 L600.80,672.85 L601.00,673.01 L601.20,673.16 L601.40,673.31 L601.60,673.45 L601.80,673.60 L602.00,673.75 L602.20,673.89 L602.40,674.04 L602.60,674.18 L602.80,674.32 L603.00,674.46 L603.20,674.60 L603.40,674.74 L603.60,674.88 L603.80,675.01 L604.00,675.15 L604.20,675.28 L604.40,675.41 L604.60,675.55 L604.80,675.68 L605.00,675.81 L605.20,675.94 L605.40,676.07 L605.60,676.20 L605.80,676.32 L606.00,676.45 L606.20,676.57 L606.40,676.70 L606.60,676.82 L606.80,676.95 L607.00,677.07 L607.20,677.19 L607.40,677.31 L607.60,677.43 L607.80,677.55 L608.00,677.67 L608.20,677.79 L608.40,677.90 L608.60,678.02 L608.80,678.14 L609.00,678.25 L609.20,678.37 L609.40,678.48 L609.60,678.59 L609.80,678.71 L610.00,678.82 L610.20,678.93 L610.40,679.04 L610.60,679.15 L610.80,679.26 L611.00,679.37 L611.20,679.48 L611.40,679.59 L611.60,679.69 L611.80,679.80 L612.00,679.91 L612.20,680.01 L612.40,680.12 L612.60,680.22 L612.80,680.32 L613.00,680.43 L613.20,680.53 L613.40,680.63 L613.60,680.73 L613.80,680.83 L614.00,680.93 L614.20,681.03 L614.40,681.13 L614.60,681.23 L614.80,681.33 L615.00,681.43 L615.20,681.52 L615.40,681.62 L615.60,681.72 L615.80,681.81 L616.00,681.91 L616.20,682.00 L616.40,682.10 L616.60,682.19 L616.80,682.28 L617.00,682.38 L617.20,682.47 L617.40,682.56 L617.60,682.65 L617.80,682.75 L618.00,682.84 L618.20,682.93 L618.40,683.02 L618.60,683.11 L618.80,683.19 L619.00,683.28 L619.20,683.37 L619.40,683.46 L619.60,683.55 L619.80,683.63 L620.00,683.72 L620.20,683.81 L620.40,683.89 L620.60,683.98 L620.80,684.06 L621.00,684.15 L621.20,684.23 L621.40,684.32 L621.60,684.40 L621.80,684.48 L622.00,684.57 L622.20,684.65 L622.40,684.73 L622.60,684.81 L622.80,684.89 L623.00,684.98 L623.20,685.06 L623.40,685.14 L623.60,685.22 L623.80,685.30 L624.00,685.37 L624.20,685.45 L624.40,685.53 L624.60,685.61 L624.80,685.69 L625.00,685.76 L625.20,685.84 L625.40,685.92 L625.60,685.99 L625.80,686.07 L626.00,686.14 L626.20,686.22 L626.40,686.29 L626.60,686.37 L626.80,686.44 L627.00,686.51 L627.20,686.58 L627.40,686.66 L627.60,686.73 L627.80,686.80 L628.00,686.87 L628.20,686.94 L628.40,687.01 L628.60,687.08 L628.80,687.15 L629.00,687.22 L629.20,687.29 L629.40,687.35 L629.60,687.42 L629.80,687.49 L630.00,687.56 L630.20,687.62 L630.40,687.69 L630.60,687.75 L630.80,687.82 L631.00,687.88 L631.20,687.95 L631.40,688.01 L631.60,688.08 L631.80,688.14 L632.00,688.20 L632.20,688.27 L632.40,688.33 L632.60,688.39 L632.80,688.45 L633.00,688.52 L633.20,688.58 L633.40,688.64 L633.60,688.70 L633.80,688.76 L634.00,688.82 L634.20,688.89 L634.40,688.95 L634.60,689.01 L634.80,689.07 L635.00,689.13 L635.20,689.19 L635.40,689.25 L635.60,689.31 L635.80,689.37 L636.00,689.44 L636.20,689.50 L636.40,689.56 L636.60,689.62 L636.80,689.68 L637.00,689.74 L637.20,689.81 L637.40,689.87 L637.60,689.93 L637.80,689.99 L638.00,690.05 L638.20,690.12 L638.40,690.18 L638.60,690.24 L638.80,690.30 L639.00,690.36 L639.20,690.42 L639.40,690.49 L639.60,690.55 L639.80,690.61 L640.00,690.67 L640.20,690.73 L640.40,690.79 L640.60,690.85 L640.80,690.91 L641.00,690.97 L641.20,691.02 L641.40,691.08 L641.60,691.14 L641.80,691.19 L642.00,691.25 L642.20,691.30 L642.40,691.36 L642.60,691.41 L642.80,691.46 L643.00,691.52 L643.20,691.57 L643.40,691.62 L643.60,691.66 L643.80,691.71 L644.00,691.76 L644.20,691.80 L644.40,691.85 L644.60,691.89 L644.80,691.93 L645.00,691.97 L645.20,692.01 L645.40,692.05 L645.60,692.08 L645.80,692.12 L646.00,692.15 L646.20,692.19 L646.40,692.22 L646.60,692.25 L646.80,692.29 L647.00,692.32 L647.20,692.35 L647.40,692.39 L647.60,692.42 L647.80,692.45 L648.00,692.47 L648.20,692.50 L648.40,692.52 L648.60,692.54 L648.80,692.56 L649.00,692.58 L649.20,692.59 L649.40,692.60 L649.50,692.60 L649.70,686.54 L649.90,675.95 L650.10,670.51 L650.30,666.98 L650.50,664.00 L650.70,661.47 L650.90,659.28 L651.10,657.32 L651.30,655.50 L651.50,653.69 L651.70,651.83 L651.90,649.94 L652.10,648.12 L652.30,646.48 L652.50,645.12 L652.70,644.13 L652.90,643.60 L653.10,643.36 L653.30,643.15 L653.50,642.95 L653.70,642.79 L653.90,642.65 L654.10,642.54 L654.30,642.46 L654.50,642.42 L654.70,642.40 L654.90,642.42 L655.10,642.49 L655.30,642.60 L655.50,642.74 L655.70,642.92 L655.90,643.17 L656.10,643.43 L656.30,643.72 L656.50,644.01 L656.70,644.31 L656.90,644.61 L657.10,644.95 L657.30,645.33 L657.50,645.74 L657.70,646.19 L657.90,646.66 L658.10,647.14 L658.30,647.63 L658.50,648.12 L658.70,648.60 L658.90,649.08 L659.10,649.55 L659.30,650.01 L659.50,650.45 L659.70,650.87 L659.90,651.28 L660.10,651.67 L660.30,652.05 L660.50,652.42 L660.70,652.80 L660.90,653.17 L661.10,653.54 L661.30,653.91 L661.50,654.27 L661.70,654.63 L661.90,655.00 L662.10,655.37 L662.30,655.73 L662.50,656.09 L662.70,656.45 L662.90,656.79 L663.10,657.14 L663.30,657.47 L663.50,657.81 L663.70,658.13 L663.90,658.46 L664.10,658.77 L664.30,659.09 L664.50,659.39 L664.70,659.70 L664.90,660.00 L665.10,660.29 L665.30,660.58 L665.50,660.86 L665.70,661.14 L665.90,661.42 L666.10,661.69 L666.30,661.96 L666.50,662.22 L666.70,662.48 L666.90,662.74 L667.10,662.99 L667.30,663.24 L667.50,663.49 L667.70,663.73 L667.90,663.97 L668.10,664.21 L668.30,664.44 L668.50,664.67 L668.70,664.90 L668.90,665.12 L669.10,665.35 L669.30,665.57 L669.50,665.78 L669.70,666.00 L669.90,666.21 L670.10,666.42 L670.30,666.63 L670.50,666.84 L670.70,667.04 L670.90,667.25 L671.10,667.45 L671.30,667.64 L671.50,667.84 L671.70,668.04 L671.90,668.23 L672.10,668.42 L672.30,668.61 L672.50,668.80 L672.70,668.98 L672.90,669.17 L673.10,669.35 L673.30,669.53 L673.50,669.71 L673.70,669.89 L673.90,670.07 L674.10,670.24 L674.30,670.41 L674.50,670.59 L674.70,670.76 L674.90,670.93 L675.10,671.09 L675.30,671.26 L675.50,671.42 L675.70,671.59 L675.90,671.75 L676.10,671.91 L676.30,672.07 L676.50,672.22 L676.70,672.38 L676.90,672.54 L677.10,672.69 L677.30,672.84 L677.50,672.99 L677.70,673.14 L677.90,673.29 L678.10,673.44 L678.30,673.58 L678.50,673.73 L678.70,673.87 L678.90,674.02 L679.10,674.16 L679.30,674.30 L679.50,674.44 L679.70,674.58 L679.90,674.71 L680.10,674.85 L680.30,674.99 L680.50,675.12 L680.70,675.25 L680.90,675.39 L681.10,675.52 L681.30,675.65 L681.50,675.78 L681.70,675.91 L681.90,676.03 L682.10,676.16 L682.30,676.29 L682.50,676.41 L682.70,676.54 L682.90,676.66 L683.10,676.79 L683.30,676.91 L683.50,677.03 L683.70,677.15 L683.90,677.27 L684.10,677.39 L684.30,677.51 L684.50,677.63 L684.70,677.74 L684.90,677.86 L685.10,677.98 L685.30,678.09 L685.50,678.21 L685.70,678.32 L685.90,678.43 L686.10,678.55 L686.30,678.66 L686.50,678.77 L686.70,678.88 L686.90,678.99 L687.10,679.10 L687.30,679.21 L687.50,679.32 L687.70,679.43 L687.90,679.53 L688.10,679.64 L688.30,679.75 L688.50,679.85 L688.70,679.96 L688.90,680.06 L689.10,680.16 L689.30,680.27 L689.50,680.37 L689.70,680.47 L689.90,680.57 L690.10,680.67 L690.30,680.77 L690.50,680.87 L690.70,680.97 L690.90,681.07 L691.10,681.17 L691.30,681.27 L691.50,681.37 L691.70,681.46 L691.90,681.56 L692.10,681.65 L692.30,681.75 L692.50,681.84 L692.70,681.94 L692.90,682.03 L693.10,682.13 L693.30,682.22 L693.50,682.31 L693.70,682.40 L693.90,682.50 L694.10,682.59 L694.30,682.68 L694.50,682.77 L694.70,682.86 L694.90,682.95 L695.10,683.04 L695.30,683.13 L695.50,683.21 L695.70,683.30 L695.90,683.39 L696.10,683.48 L696.30,683.56 L696.50,683.65 L696.70,683.74 L696.90,683.82 L697.10,683.91 L697.30,683.99 L697.50,684.08 L697.70,684.16 L697.90,684.24 L698.10,684.33 L698.30,684.41 L698.50,684.49 L698.70,684.57 L698.90,684.66 L699.10,684.74 L699.30,684.82 L699.50,684.90 L699.70,684.98 L699.90,685.06 L700.10,685.14 L700.30,685.22 L700.50,685.30 L700.70,685.38 L700.90,685.45 L701.10,685.53 L701.30,685.61 L701.50,685.69 L701.70,685.76 L701.90,685.84 L702.10,685.91 L702.30,685.99 L702.50,686.06 L702.70,686.14 L702.90,686.21 L703.10,686.29 L703.30,686.36 L703.50,686.43 L703.70,686.50 L703.90,686.58 L704.10,686.65 L704.30,686.72 L704.50,686.79 L704.70,686.86 L704.90,686.93 L705.10,687.00 L705.30,687.07 L705.50,687.14 L705.70,687.21 L705.90,687.27 L706.10,687.34 L706.30,687.41 L706.50,687.47 L706.70,687.54 L706.90,687.61 L707.10,687.67 L707.30,687.74 L707.50,687.80 L707.70,687.87 L707.90,687.93 L708.10,687.99 L708.30,688.06 L708.50,688.12 L708.70,688.18 L708.90,688.25 L709.10,688.31 L709.30,688.37 L709.50,688.43 L709.70,688.49 L709.90,688.56 L710.10,688.62 L710.30,688.68 L710.50,688.74 L710.70,688.80 L710.90,688.86 L711.10,688.92 L711.30,688.98 L711.50,689.04 L711.70,689.10 L711.90,689.16 L712.10,689.23 L712.30,689.29 L712.50,689.35 L712.70,689.41 L712.90,689.47 L713.10,689.53 L713.30,689.59 L713.50,689.65 L713.70,689.71 L713.90,689.77 L714.10,689.84 L714.30,689.90 L714.50,689.96 L714.70,690.02 L714.90,690.08 L715.10,690.14 L715.30,690.20 L715.50,690.27 L715.70,690.33 L715.90,690.39 L716.10,690.45 L716.30,690.51 L716.50,690.57 L716.70,690.63 L716.90,690.69 L717.10,690.75 L717.30,690.81 L717.50,690.87 L717.70,690.93 L717.90,690.99 L718.10,691.04 L718.30,691.10 L718.50,691.16 L718.70,691.21 L718.90,691.27 L719.10,691.32 L719.30,691.37 L719.50,691.43 L719.70,691.48 L719.90,691.53 L720.10,691.58 L720.30,691.63 L720.50,691.68 L720.70,691.72 L720.90,691.77 L721.10,691.81 L721.30,691.86 L721.50,691.90 L721.70,691.94 L721.90,691.98 L722.10,692.02 L722.30,692.06 L722.50,692.09 L722.70,692.13 L722.90,692.16 L723.10,692.19 L723.30,692.22 L723.50,692.25 L723.70,692.29 L723.90,692.32 L724.10,692.36 L724.30,692.39 L724.50,692.42 L724.70,692.45 L724.90,692.48 L725.10,692.50 L725.30,692.52 L725.50,692.54 L725.70,692.56 L725.90,692.58 L726.10,692.59 L726.30,692.60 L726.40,692.60 L726.60,686.54 L726.80,675.95 L727.00,670.51 L727.20,666.98 L727.40,664.00 L727.60,661.47 L727.80,659.28 L728.00,657.32 L728.20,655.50 L728.40,653.69 L728.60,651.83 L728.80,649.94 L729.00,648.12 L729.20,646.48 L729.40,645.12 L729.60,644.13 L729.80,643.60 L730.00,643.36 L730.20,643.15 L730.40,642.95 L730.60,642.79 L730.80,642.65 L731.00,642.54 L731.20,642.46 L731.40,642.42 L731.60,642.40 L731.80,642.42 L732.00,642.49 L732.20,642.60 L732.40,642.74 L732.60,642.92 L732.80,643.16 L733.00,643.43 L733.20,643.72 L733.40,644.01 L733.60,644.31 L733.80,644.61 L734.00,644.95 L734.20,645.33 L734.40,645.75 L734.60,646.20 L734.80,646.67 L735.00,647.15 L735.20,647.64 L735.40,648.13 L735.60,648.62 L735.80,649.10 L736.00,649.57 L736.20,650.03 L736.40,650.47 L736.60,650.89 L736.80,651.30 L737.00,651.69 L737.20,652.07 L737.40,652.45 L737.60,652.82 L737.80,653.20 L738.00,653.57 L738.20,653.93 L738.40,654.30 L738.60,654.66 L738.80,655.03 L739.00,655.40 L739.20,655.76 L739.40,656.12 L739.60,656.47 L739.80,656.82 L740.00,657.17 L740.20,657.50 L740.40,657.84 L740.60,658.16 L740.80,658.49 L741.00,658.80 L741.20,659.12 L741.40,659.42 L741.60,659.73 L741.80,660.03 L742.00,660.32 L742.20,660.61 L742.40,660.89 L742.60,661.17 L742.80,661.45 L743.00,661.72 L743.20,661.99 L743.40,662.25 L743.60,662.51 L743.80,662.77 L744.00,663.02 L744.20,663.27 L744.40,663.52 L744.60,663.76 L744.80,664.00 L745.00,664.24 L745.20,664.47 L745.40,664.70 L745.60,664.93 L745.80,665.15 L746.00,665.38 L746.20,665.60 L746.40,665.81 L746.60,666.03 L746.80,666.24 L747.00,666.45 L747.20,666.66 L747.40,666.87 L747.60,667.07 L747.80,667.27 L748.00,667.47 L748.20,667.67 L748.40,667.87 L748.60,668.06 L748.80,668.26 L749.00,668.45 L749.20,668.64 L749.40,668.83 L749.60,669.01 L749.80,669.20 L750.00,669.38 L750.20,669.56 L750.40,669.74 L750.60,669.92 L750.80,670.09 L751.00,670.27 L751.20,670.44 L751.40,670.61 L751.60,670.78 L751.80,670.95 L752.00,671.12 L752.20,671.29 L752.40,671.45 L752.60,671.61 L752.80,671.78 L753.00,671.94 L753.20,672.09 L753.40,672.25 L753.60,672.41 L753.80,672.56 L754.00,672.72 L754.20,672.87 L754.40,673.02 L754.60,673.17 L754.80,673.32 L755.00,673.47 L755.20,673.61 L755.40,673.76 L755.60,673.90 L755.80,674.04 L756.00,674.19 L756.20,674.33 L756.40,674.47 L756.60,674.60 L756.80,674.74 L757.00,674.88 L757.20,675.01 L757.40,675.15 L757.60,675.28 L757.80,675.41 L758.00,675.54 L758.20,675.67 L758.40,675.80 L758.60,675.93 L758.80,676.06 L759.00,676.19 L759.20,676.31 L759.40,676.44 L759.60,676.56 L759.80,676.69 L760.00,676.81 L760.20,676.93 L760.40,677.06 L760.60,677.18 L760.80,677.30 L761.00,677.42 L761.20,677.54 L761.40,677.65 L761.60,677.77 L761.80,677.89 L762.00,678.00 L762.20,678.12 L762.40,678.23 L762.60,678.35 L762.80,678.46 L763.00,678.57 L763.20,678.69 L763.40,678.80 L763.60,678.91 L763.80,679.02 L764.00,679.13 L764.20,679.24 L764.40,679.34 L764.60,679.45 L764.80,679.56 L765.00,679.67 L765.20,679.77 L765.40,679.88 L765.60,679.98 L765.80,680.09 L766.00,680.19 L766.20,680.29 L766.40,680.40 L766.60,680.50 L766.80,680.60 L767.00,680.70 L767.20,680.80 L767.40,680.90 L767.60,681.00 L767.80,681.10 L768.00,681.20 L768.20,681.29 L768.40,681.39 L768.60,681.49 L768.80,681.58 L769.00,681.68 L769.20,681.78 L769.40,681.87 L769.60,681.97 L769.80,682.06 L770.00,682.15 L770.20,682.25 L770.40,682.34 L770.60,682.43 L770.80,682.52 L771.00,682.61 L771.20,682.70 L771.40,682.79 L771.60,682.88 L771.80,682.97 L772.00,683.06 L772.20,683.15 L772.40,683.24 L772.60,683.33 L772.80,683.42 L773.00,683.50 L773.20,683.59 L773.40,683.68 L773.60,683.76 L773.80,683.85 L774.00,683.93 L774.20,684.02 L774.40,684.10 L774.60,684.19 L774.80,684.27 L775.00,684.35 L775.20,684.44 L775.40,684.52 L775.60,684.60 L775.80,684.68 L776.00,684.76 L776.20,684.84 L776.40,684.93 L776.60,685.01 L776.80,685.09 L777.00,685.16 L777.20,685.24 L777.40,685.32 L777.60,685.40 L777.80,685.48 L778.00,685.56 L778.20,685.63 L778.40,685.71 L778.60,685.79 L778.80,685.86 L779.00,685.94 L779.20,686.01 L779.40,686.09 L779.60,686.16 L779.80,686.24" fill="none" stroke="#e84b50" stroke-width="1.25" stroke-linejoin="round"/><line x1="201.2" y1="553.9" x2="201.2" y2="606" stroke="#4a6f80" stroke-width="1"/><line x1="198.2" y1="553.9" x2="204.2" y2="553.9" stroke="#4a6f80" stroke-width="1"/><line x1="198.2" y1="606" x2="204.2" y2="606" stroke="#4a6f80" stroke-width="1"/><circle cx="201.2" cy="577.9" r="2.4" fill="#f5a623"/></svg>
<div style="position:absolute;left:188.80px;top:682.10px;font-size:6.6px;line-height:6.6px;color:#666;font-weight:400;white-space:nowrap;transform:translate(-50%,0) rotate(-90deg);-webkit-text-stroke:0.1px #666">1</div>
<div style="position:absolute;left:188.80px;top:664.30px;font-size:6.6px;line-height:6.6px;color:#666;font-weight:400;white-space:nowrap;transform:translate(-50%,0) rotate(-90deg);-webkit-text-stroke:0.1px #666">2</div>
<div style="position:absolute;left:188.80px;top:647.70px;font-size:6.6px;line-height:6.6px;color:#666;font-weight:400;white-space:nowrap;transform:translate(-50%,0) rotate(-90deg);-webkit-text-stroke:0.1px #666">3</div>
<div style="position:absolute;left:188.80px;top:631.20px;font-size:6.6px;line-height:6.6px;color:#666;font-weight:400;white-space:nowrap;transform:translate(-50%,0) rotate(-90deg);-webkit-text-stroke:0.1px #666">4</div>
<div style="position:absolute;left:188.80px;top:614.70px;font-size:6.6px;line-height:6.6px;color:#666;font-weight:400;white-space:nowrap;transform:translate(-50%,0) rotate(-90deg);-webkit-text-stroke:0.1px #666">5</div>
<div style="position:absolute;left:188.80px;top:597.30px;font-size:6.6px;line-height:6.6px;color:#666;font-weight:400;white-space:nowrap;transform:translate(-50%,0) rotate(-90deg);-webkit-text-stroke:0.1px #666">6</div>
<div style="position:absolute;left:188.80px;top:580.80px;font-size:6.6px;line-height:6.6px;color:#666;font-weight:400;white-space:nowrap;transform:translate(-50%,0) rotate(-90deg);-webkit-text-stroke:0.1px #666">7</div>
<div style="position:absolute;left:188.80px;top:564.20px;font-size:6.6px;line-height:6.6px;color:#666;font-weight:400;white-space:nowrap;transform:translate(-50%,0) rotate(-90deg);-webkit-text-stroke:0.1px #666">8</div>
<div style="position:absolute;left:188.80px;top:546.90px;font-size:6.6px;line-height:6.6px;color:#666;font-weight:400;white-space:nowrap;transform:translate(-50%,0) rotate(-90deg);-webkit-text-stroke:0.1px #666">9</div>
<div style="position:absolute;left:188.80px;top:532.40px;font-size:6.6px;line-height:6.6px;color:#666;font-weight:400;white-space:nowrap;transform:translate(-50%,0) rotate(-90deg);-webkit-text-stroke:0.1px #666">10</div>
<div style="position:absolute;left:194.60px;transform:translateX(-50%);top:707.68px;font-size:6.6px;line-height:6.6px;color:#666;font-weight:400;white-space:nowrap;;-webkit-text-stroke:0.1px #666">0</div>
<div style="position:absolute;left:268.20px;transform:translateX(-50%);top:707.68px;font-size:6.6px;line-height:6.6px;color:#666;font-weight:400;white-space:nowrap;;-webkit-text-stroke:0.1px #666">24</div>
<div style="position:absolute;left:341.70px;transform:translateX(-50%);top:707.68px;font-size:6.6px;line-height:6.6px;color:#666;font-weight:400;white-space:nowrap;;-webkit-text-stroke:0.1px #666">48</div>
<div style="position:absolute;left:414.90px;transform:translateX(-50%);top:707.68px;font-size:6.6px;line-height:6.6px;color:#666;font-weight:400;white-space:nowrap;;-webkit-text-stroke:0.1px #666">72</div>
<div style="position:absolute;left:489.10px;transform:translateX(-50%);top:707.68px;font-size:6.6px;line-height:6.6px;color:#666;font-weight:400;white-space:nowrap;;-webkit-text-stroke:0.1px #666">96</div>
<div style="position:absolute;left:562.30px;transform:translateX(-50%);top:707.68px;font-size:6.6px;line-height:6.6px;color:#666;font-weight:400;white-space:nowrap;;-webkit-text-stroke:0.1px #666">120</div>
<div style="position:absolute;left:635.90px;transform:translateX(-50%);top:707.68px;font-size:6.6px;line-height:6.6px;color:#666;font-weight:400;white-space:nowrap;;-webkit-text-stroke:0.1px #666">144</div>
<div style="position:absolute;left:709.50px;transform:translateX(-50%);top:707.68px;font-size:6.6px;line-height:6.6px;color:#666;font-weight:400;white-space:nowrap;;-webkit-text-stroke:0.1px #666">168</div>
<div style="position:absolute;left:458.80px;top:719.93px;font-size:7.1px;line-height:7.1px;color:#444;font-weight:400;white-space:nowrap;;-webkit-text-stroke:0.1px #444">Time after dose(hr)</div>
<div style="position:absolute;left:171.00px;top:612.45px;font-size:6.9px;line-height:6.9px;color:#555;font-weight:400;white-space:nowrap;transform:translate(-50%,0) rotate(-90deg);-webkit-text-stroke:0.1px #555">Conc µg/mL</div>
</body></html>
